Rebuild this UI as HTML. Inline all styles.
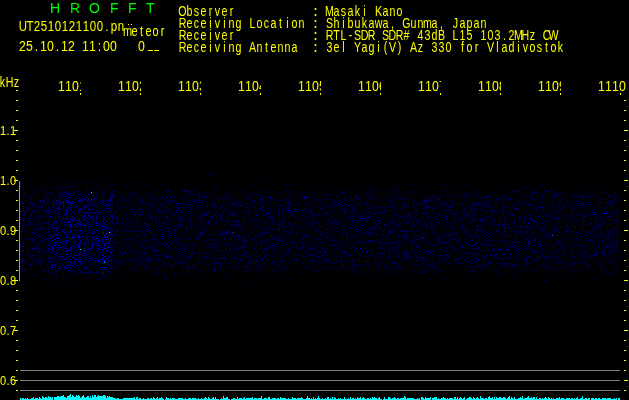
<!DOCTYPE html>
<html><head><meta charset="utf-8"><title>HROFFT</title>
<style>
html,body{margin:0;padding:0;background:#000;}
body{width:629px;height:400px;position:relative;overflow:hidden;}
text{white-space:pre;}
.b{font-weight:bold}
.h{font-family:"Liberation Sans",sans-serif;font-size:14px;fill:#0f0;text-anchor:start;}
</style></head><body>
<svg width="629" height="400" viewBox="0 0 629 400" shape-rendering="crispEdges" style="position:absolute;left:0;top:0">
<g transform="translate(0,.5)" fill="none" stroke-width="1">
<path stroke="#000016" d="M105 172h1M459 174h1M70 175h1m450 0h1M101 176h1m239 0h1m254 0h1M64 177h1m105 0h1m152 0h1m185 0h1M268 178h1m78 0h1m10 0h1m64 0h1m75 0h1M100 179h1m54 0h1m2 0h1m178 0h1m84 0h1m19 0h1m137 0h1M107 180h1m31 0h1m118 0h1m25 0h1m75 0h1m33 0h1m20 0h1m70 0h1m84 0h1M64 181h1m75 0h1m73 0h1m223 0h1M25 182h1m22 0h1m47 0h1m18 0h1m19 0h1m29 0h1m63 0h1m69 0h1m1 0h1m16 0h1m61 0h1m25 0h1m27 0h1m45 0h1m42 0h1m89 0h1M20 183h1m13 0h1m99 0h1m21 0h1m22 0h1m70 0h1m18 0h1m30 0h1m26 0h2m17 0h1m18 0h1M20 184h1m15 0h1m23 0h1m3 0h1m51 0h1m27 0h1m7 0h1m43 0h1m26 0h1m77 0h1m21 0h1m30 0h1m63 0h1m12 0h1m57 0h1m8 0h1m18 0h1m7 0h1m29 0h1m44 0h1M25 185h1m23 0h1m17 0h1m28 0h1m27 0h1m123 0h1m1 0h1m20 0h1m5 0h1m3 0h1m8 0h1m5 0h1m118 0h1m56 0h1m4 0h1m46 0h1m6 0h1m55 0h1M21 186h1m52 0h1m30 0h1m31 0h1m5 0h1m20 0h1m37 0h1m30 0h1m17 0h1m9 0h1m6 0h1m51 0h1m49 0h1m40 0h1m5 0h1m69 0h1m13 0h1m4 0h1m25 0h1m22 0h1m3 0h1m24 0h1m24 0h1M20 187h1m46 0h1m63 0h1m42 0h1m72 0h1m41 0h1m67 0h1m36 0h1m24 0h2m22 0h1m2 0h1m26 0h1m41 0h1m12 0h1M43 188h1m12 0h2m12 0h2m7 0h1m70 0h1m26 0h1m6 0h1m29 0h1m72 0h1m26 0h1m33 0h1m7 0h1m1 0h1m33 0h1m1 0h1m80 0h1m32 0h1m34 0h1m34 0h1m31 0h1M63 189h1m6 0h1m7 0h1m63 0h1m44 0h1m13 0h1m9 0h1m22 0h1m68 0h1m10 0h1m18 0h1m38 0h1m17 0h1m57 0h1m54 0h1m22 0h1m9 0h1m7 0h1m32 0h1m6 0h1m4 0h1m25 0h1M52 190h1m33 0h1m23 0h1m20 0h1m8 0h1m8 0h1m114 0h1m12 0h1m18 0h1m9 0h1m14 0h1m26 0h1m7 0h1m4 0h1m90 0h1m22 0h1m45 0h1m11 0h1m5 0h1m25 0h1m40 0h1M22 191h1m67 0h1m76 0h1m51 0h1m16 0h1m74 0h1m4 0h1m3 0h1m32 0h1m53 0h1m3 0h1m35 0h1m27 0h1m12 0h1m23 0h1m6 0h1m77 0h2M35 192h1m13 0h1m21 0h1m38 0h1m64 0h1m1 0h1m13 0h1m1 0h1m38 0h1m13 0h1m35 0h1m36 0h1m31 0h1m42 0h1m7 0h1m33 0h1m23 0h1m7 0h1m69 0h1m5 0h1m7 0h1m28 0h1m31 0h1M23 193h1m13 0h1m34 0h1m44 0h1m1 0h1m6 0h1m1 0h1m32 0h1m24 0h1m18 0h1m10 0h1m51 0h1m8 0h1m1 0h1m75 0h1m18 0h1m46 0h1m35 0h1m43 0h1m9 0h1m6 0h1m1 0h1m6 0h1m15 0h1m71 0h1M25 194h1m10 0h1m29 0h1m81 0h1m3 0h1m21 0h1m33 0h1m35 0h1m46 0h1m10 0h1m62 0h1m1 0h1m11 0h1m26 0h1m31 0h1m39 0h1m63 0h1m51 0h1m7 0h1m11 0h1M43 195h1m21 0h3m2 0h1m17 0h1m6 0h1m8 0h1m13 0h1m21 0h1m1 0h1m2 0h1m57 0h1m1 0h1m1 0h1m45 0h1m33 0h2m1 0h1m54 0h1m30 0h1m30 0h1m86 0h1m8 0h1m21 0h1m2 0h1m17 0h1m21 0h1m31 0h1M20 196h1m24 0h1m3 0h1m2 0h1m54 0h1m42 0h1m10 0h1m5 0h1m8 0h2m37 0h1m10 0h1m79 0h1m11 0h1m6 0h1m9 0h1m41 0h1m29 0h1m10 0h2m8 0h1m21 0h1m8 0h1m19 0h1m3 0h1m25 0h1m28 0h1m12 0h1m31 0h1m12 0h1m8 0h1M29 197h1m28 0h1m40 0h1m26 0h1m4 0h1m48 0h1m17 0h1m14 0h1m2 0h1m13 0h1m2 0h1m11 0h1m8 0h1m16 0h1m12 0h1m7 0h1m6 0h1m9 0h1m8 0h1m19 0h1m40 0h1m9 0h1m37 0h1m7 0h1m21 0h1m2 0h1m7 0h1m38 0h1m7 0h1m10 0h1m10 0h1m2 0h1m11 0h1m6 0h1m7 0h1m1 0h1m42 0h1M37 198h1m72 0h2m63 0h1m16 0h2m9 0h1m1 0h1m6 0h1m33 0h1m6 0h1m17 0h1m20 0h1m7 0h1m7 0h1m45 0h1m10 0h1m13 0h1m1 0h1m17 0h1m24 0h1m5 0h1m4 0h1m7 0h1m10 0h1m9 0h1m10 0h1m10 0h1m26 0h1m33 0h1m2 0h1m29 0h1m23 0h1M28 199h1m17 0h1m20 0h1m3 0h1m3 0h1m30 0h1m1 0h1m38 0h1m10 0h1m29 0h1m34 0h1m39 0h1m1 0h1m16 0h1m5 0h1m43 0h1m7 0h1m61 0h2m23 0h1m41 0h1m8 0h1m31 0h1m37 0h1m3 0h1m7 0h1M24 200h1m8 0h1m16 0h1m6 0h1m11 0h1m30 0h1m24 0h1m10 0h1m27 0h1m31 0h1m21 0h1m45 0h1m3 0h1m2 0h1m59 0h1m1 0h1m16 0h1m3 0h1m2 0h1m7 0h1m20 0h1m10 0h1m33 0h1m31 0h1m19 0h2m19 0h1m17 0h1m20 0h1m8 0h1m2 0h1m44 0h1m9 0h1m2 0h1M20 201h1m1 0h1m4 0h1m2 0h1m30 0h2m8 0h1m1 0h1m30 0h1m1 0h1m47 0h1m3 0h1m9 0h1m14 0h2m12 0h1m6 0h1m9 0h1m29 0h1m20 0h1m12 0h1m12 0h1m28 0h1m3 0h1m5 0h1m18 0h1m3 0h1m31 0h1m62 0h1m30 0h1m13 0h1m15 0h1m39 0h1m1 0h1m16 0h2m21 0h1m5 0h1M48 202h1m35 0h1m118 0h1m3 0h2m24 0h1m2 0h1m11 0h1m21 0h2m39 0h1m25 0h1m5 0h1m17 0h1m13 0h1m11 0h1m6 0h1m7 0h1m22 0h1m7 0h1m18 0h1m7 0h1m6 0h1m2 0h1m15 0h1m67 0h1M47 203h1m42 0h1m9 0h1m20 0h1m14 0h1m29 0h1m1 0h1m37 0h1m19 0h1m20 0h1m22 0h1m39 0h1m2 0h1m3 0h1m2 0h1m9 0h1m15 0h1m66 0h1m17 0h1m13 0h1m24 0h1m20 0h2m9 0h1m22 0h1m41 0h1m25 0h1m20 0h1M22 204h1m4 0h1m27 0h1m25 0h1m14 0h1m20 0h1m6 0h1m53 0h1m20 0h1m52 0h1m40 0h1m18 0h1m1 0h1m9 0h1m9 0h1m14 0h1m39 0h1m21 0h1m14 0h1m13 0h1m8 0h1m13 0h1m21 0h1m3 0h1m19 0h1m3 0h1m8 0h1m10 0h1m10 0h1m25 0h1m34 0h1M26 205h1m28 0h1m93 0h1m15 0h1m11 0h1m4 0h1m38 0h1m8 0h1m31 0h1m2 0h1m18 0h1m20 0h1m11 0h1m9 0h1m36 0h1m14 0h1m1 0h1m15 0h1m31 0h1m118 0h1m1 0h1m3 0h1m8 0h1m25 0h1m19 0h1M48 206h1m10 0h1m52 0h1m33 0h1m4 0h1m1 0h1m6 0h1m4 0h1m29 0h1m5 0h1m6 0h1m54 0h1m13 0h1m39 0h1m12 0h1m7 0h1m25 0h2m12 0h1m23 0h1m2 0h1m30 0h1m50 0h1m2 0h1m15 0h1m5 0h1m1 0h1m6 0h1m6 0h1m2 0h1m3 0h1m47 0h1M33 207h1m2 0h1m28 0h1m42 0h1m14 0h1m38 0h1m14 0h1m43 0h1m5 0h1m1 0h1m4 0h2m8 0h1m17 0h1m33 0h1m1 0h1m4 0h1m19 0h1m14 0h1m2 0h2m13 0h1m1 0h1m25 0h1m17 0h1m49 0h1m13 0h1m6 0h1m40 0h1m12 0h1m12 0h1m16 0h1m38 0h1m12 0h1M32 208h1m21 0h1m7 0h1m53 0h1m33 0h1m25 0h1m7 0h1m25 0h1m1 0h1m29 0h1m12 0h1m54 0h1m20 0h1m4 0h1m8 0h1m5 0h1m15 0h1m23 0h1m29 0h1m24 0h1m13 0h2m13 0h1m6 0h1m5 0h1m3 0h1m3 0h1m31 0h1m3 0h1m9 0h1m5 0h1m9 0h1m36 0h1m8 0h1m10 0h1M43 209h1m13 0h1m25 0h1m31 0h1m11 0h1m63 0h1m7 0h1m15 0h1m20 0h1m2 0h1m1 0h1m51 0h1m2 0h1m3 0h1m6 0h1m60 0h1m50 0h1m38 0h1m4 0h1m29 0h1m4 0h1m1 0h1m5 0h1m3 0h1m19 0h1m24 0h1m6 0h1m7 0h1m25 0h1m11 0h1M24 210h1m3 0h1m32 0h1m15 0h1m1 0h1m3 0h1m1 0h1m20 0h1m11 0h1m62 0h1m26 0h1m16 0h2m14 0h1m16 0h1m54 0h1m9 0h1m1 0h1m1 0h1m13 0h1m52 0h1m41 0h1m1 0h1m18 0h1m7 0h1m8 0h1m11 0h1m32 0h1m4 0h1m5 0h1m9 0h1m33 0h1m19 0h1M38 211h1m30 0h1m3 0h1m10 0h1m26 0h1m40 0h2m102 0h1m8 0h1m26 0h1m9 0h1m10 0h1m4 0h1m11 0h1m11 0h1m7 0h1m6 0h1m3 0h1m31 0h1m34 0h1m17 0h1m95 0h1m10 0h1m40 0h1m10 0h1m9 0h1M21 212h2m12 0h1m64 0h1m29 0h2m15 0h2m3 0h1m17 0h1m2 0h1m15 0h1m10 0h1m26 0h2m21 0h1m1 0h1m11 0h1m8 0h1m1 0h1m4 0h1m19 0h1m36 0h1m11 0h1m50 0h1m2 0h1m15 0h1m10 0h1m14 0h1m48 0h1m8 0h1m21 0h1m9 0h1m9 0h1m5 0h1m15 0h1m3 0h1m32 0h1m3 0h1m6 0h1M33 213h1m16 0h1m20 0h1m5 0h1m23 0h1m9 0h1m5 0h1m3 0h1m12 0h1m3 0h1m16 0h1m10 0h1m23 0h1m2 0h1m3 0h1m12 0h1m6 0h1m3 0h1m2 0h1m5 0h1m21 0h1m4 0h1m24 0h1m24 0h1m24 0h1m5 0h1m15 0h1m16 0h1m11 0h1m11 0h1m2 0h1m33 0h1m3 0h1m23 0h1m3 0h1m3 0h1m31 0h1m7 0h1m5 0h1m9 0h1m6 0h1m8 0h1m17 0h2m11 0h1m15 0h1m2 0h1m23 0h1M51 214h1m23 0h1m60 0h1m15 0h1m15 0h1m20 0h1m10 0h1m20 0h1m9 0h1m21 0h1m8 0h1m2 0h1m18 0h1m5 0h1m19 0h1m13 0h1m29 0h1m32 0h1m12 0h1m32 0h1m6 0h1m27 0h1m14 0h1m9 0h1m1 0h1m34 0h1m20 0h1m27 0h1m10 0h1m6 0h1M26 215h1m15 0h1m8 0h1m1 0h1m67 0h1m22 0h1m5 0h1m6 0h1m12 0h1m12 0h1m7 0h1m2 0h1m12 0h1m24 0h1m5 0h1m3 0h1m39 0h1m61 0h1m10 0h1m2 0h1m21 0h1m18 0h1m1 0h1m3 0h1m8 0h1m56 0h1m41 0h1m11 0h1m14 0h1m13 0h1m23 0h1m6 0h1m3 0h1m5 0h1m2 0h1M39 216h1m23 0h1m59 0h1m16 0h1m35 0h1m4 0h1m5 0h1m14 0h2m28 0h1m2 0h1m13 0h1m1 0h1m12 0h1m22 0h1m2 0h1m2 0h2m2 0h1m23 0h1m62 0h1m1 0h1m3 0h1m23 0h2m2 0h1m12 0h1m2 0h1m7 0h1m10 0h1m8 0h1m18 0h1m10 0h1m7 0h1m29 0h1m21 0h1m47 0h1M32 217h1m16 0h1m34 0h1m1 0h1m17 0h1m11 0h2m51 0h2m81 0h1m32 0h1m6 0h1m7 0h1m10 0h1m3 0h1m18 0h1m30 0h1m10 0h1m7 0h1m7 0h1m9 0h1m23 0h2m8 0h2m8 0h1m28 0h1m19 0h1m6 0h2m14 0h1m2 0h2m31 0h1m35 0h1m4 0h1m12 0h1M34 218h1m40 0h1m24 0h1m30 0h1m4 0h1m48 0h1m8 0h1m2 0h1m76 0h1m1 0h1m4 0h1m11 0h1m2 0h2m16 0h1m9 0h1m23 0h1m16 0h1m5 0h1m10 0h1m1 0h1m25 0h1m4 0h1m22 0h1m28 0h2m1 0h1m9 0h1m15 0h1M21 219h1m27 0h1m12 0h1m69 0h1m4 0h1m4 0h1m59 0h1m37 0h1m60 0h1m21 0h1m36 0h1m4 0h1m8 0h1m2 0h1m4 0h1m60 0h1m1 0h1m33 0h1m33 0h1m51 0h1m41 0h1M22 220h1m3 0h1m24 0h1m22 0h1m28 0h1m57 0h1m1 0h1m15 0h1m2 0h1m11 0h1m15 0h1m15 0h1m8 0h1m26 0h1m38 0h2m74 0h1m41 0h1m8 0h1m22 0h1m29 0h1m20 0h1m9 0h1m1 0h1m6 0h1m14 0h2m2 0h1m1 0h1m44 0h1m1 0h1m2 0h1m8 0h1M74 221h1m41 0h2m14 0h1m3 0h1m7 0h1m33 0h1m3 0h1m6 0h1m22 0h1m12 0h1m1 0h1m39 0h1m2 0h1m9 0h1m62 0h1m7 0h1m22 0h1m64 0h1m5 0h1m18 0h1m1 0h1m18 0h1m14 0h1m4 0h1m14 0h1m32 0h3m3 0h2m33 0h1m19 0h1M24 222h1m9 0h1m27 0h1m11 0h1m10 0h1m34 0h1m3 0h1m40 0h1m12 0h1m38 0h2m3 0h1m3 0h1m2 0h1m7 0h1m22 0h1m43 0h1m33 0h1m8 0h1m6 0h1m21 0h1m8 0h1m11 0h1m25 0h1m5 0h1m4 0h1m14 0h1m6 0h1m29 0h1m6 0h1m12 0h1m13 0h1m5 0h1m13 0h1m14 0h1m47 0h1m4 0h1M21 223h1m42 0h1m6 0h1m41 0h1m20 0h1m15 0h1m41 0h1m2 0h1m54 0h1m5 0h1m1 0h1m19 0h1m25 0h1m4 0h1m9 0h1m3 0h1m13 0h1m23 0h1m7 0h1m2 0h1m5 0h1m8 0h1m15 0h1m17 0h1m9 0h1m1 0h1m42 0h1m35 0h1m23 0h1m14 0h1m16 0h1m28 0h1M27 224h1m6 0h1m2 0h1m3 0h1m19 0h1m15 0h1m18 0h2m11 0h1m12 0h1m4 0h1m65 0h1m92 0h1m4 0h2m157 0h1m1 0h2m5 0h2m5 0h1m30 0h2m26 0h1m2 0h1m24 0h2m1 0h1m27 0h1M23 225h1m97 0h1m1 0h1m21 0h1m31 0h1m17 0h1m3 0h1m22 0h1m36 0h1m31 0h1m26 0h1m12 0h1m4 0h1m4 0h1m84 0h1m48 0h1m13 0h1m5 0h1m55 0h1m6 0h1m33 0h1m15 0h1M25 226h1m2 0h1m29 0h1m49 0h1m15 0h1m9 0h1m3 0h1m19 0h2m6 0h1m8 0h1m14 0h1m9 0h1m14 0h1m2 0h1m12 0h1m21 0h1m19 0h1m3 0h2m15 0h1m13 0h1m53 0h1m14 0h1m2 0h1m14 0h1m10 0h1m2 0h2m17 0h1m32 0h1m1 0h1m43 0h1m8 0h1m3 0h1m12 0h1m11 0h1m37 0h1m16 0h1m13 0h1M66 227h1m35 0h1m50 0h2m4 0h1m11 0h1m3 0h1m8 0h1m22 0h1m19 0h1m51 0h1m11 0h1m12 0h1m36 0h1m4 0h1m6 0h1m14 0h1m5 0h1m26 0h1m61 0h1m68 0h1m15 0h1m13 0h1m5 0h2m6 0h1m31 0h1m5 0h1m2 0h1M27 228h1m13 0h1m7 0h1m101 0h1m23 0h1m2 0h1m11 0h1m11 0h1m25 0h1m16 0h1m25 0h1m6 0h1m5 0h1m17 0h1m3 0h1m15 0h1m29 0h1m19 0h1m50 0h1m31 0h1m42 0h1m71 0h1m11 0h1m4 0h1m24 0h1m4 0h1M24 229h1m14 0h2m9 0h1m23 0h1m24 0h1m11 0h1m13 0h1m7 0h1m4 0h1m30 0h2m1 0h1m13 0h1m45 0h1m2 0h1m9 0h2m18 0h1m1 0h1m7 0h1m19 0h1m18 0h1m8 0h1m37 0h1m1 0h1m18 0h1m5 0h1m25 0h1m16 0h1m15 0h1m81 0h1m20 0h1m8 0h1m30 0h1m16 0h1m1 0h1M28 230h1m31 0h2m40 0h1m12 0h1m7 0h1m41 0h1m22 0h1m5 0h1m3 0h1m2 0h1m24 0h2m11 0h2m39 0h1m4 0h1m20 0h1m11 0h1m20 0h1m24 0h1m19 0h1m19 0h1m33 0h1m34 0h1m22 0h1m1 0h1m47 0h1m28 0h1M33 231h1m7 0h1m12 0h1m36 0h1m20 0h1m88 0h1m28 0h1m2 0h1m30 0h1m9 0h1m10 0h1m17 0h1m13 0h2m13 0h2m39 0h1m6 0h1m5 0h1m8 0h3m12 0h1m33 0h1m52 0h1m11 0h1m39 0h1m10 0h2m1 0h1m4 0h1m41 0h1M49 232h1m16 0h1m93 0h1m9 0h1m1 0h1m4 0h1m11 0h1m11 0h1m1 0h1m7 0h1m18 0h1m49 0h1m21 0h1m11 0h1m14 0h1m2 0h1m12 0h1m19 0h1m27 0h1m4 0h3m1 0h1m17 0h1m1 0h1m1 0h1m9 0h1m12 0h1m10 0h1m1 0h1m41 0h1m8 0h1m23 0h2m3 0h1m8 0h1m51 0h1M40 233h2m2 0h1m20 0h1m13 0h1m3 0h1m42 0h1m13 0h1m6 0h1m22 0h2m10 0h1m5 0h1m4 0h1m18 0h1m16 0h1m17 0h1m5 0h1m2 0h1m23 0h1m14 0h1m3 0h1m3 0h1m12 0h1m34 0h1m14 0h1m12 0h1m24 0h1m15 0h1m31 0h1m4 0h1m5 0h1m21 0h1m30 0h1m3 0h1m5 0h1m32 0h1m13 0h1m2 0h1m13 0h2m3 0h1M30 234h1m35 0h1m28 0h1m1 0h1m14 0h2m17 0h1m2 0h1m5 0h1m11 0h1m6 0h1m20 0h1m21 0h1m21 0h1m8 0h1m20 0h1m1 0h1m7 0h1m38 0h1m30 0h1m3 0h1m9 0h1m23 0h2m17 0h1m1 0h1m17 0h1m13 0h1m20 0h1m3 0h1m26 0h1m20 0h1m10 0h1m12 0h1m5 0h1m2 0h1m25 0h1m49 0h1M29 235h1m91 0h1m30 0h1m19 0h1m4 0h1m11 0h2m8 0h1m13 0h1m23 0h1m13 0h1m10 0h1m5 0h1m34 0h1m4 0h1m2 0h1m1 0h1m20 0h1m9 0h1m13 0h1m14 0h1m61 0h1m5 0h1m39 0h1m4 0h1m5 0h2m9 0h1m5 0h1m14 0h1m11 0h2m40 0h1m11 0h2m3 0h1m4 0h1m13 0h1M57 236h1m16 0h1m22 0h1m2 0h1m8 0h1m11 0h1m8 0h1m18 0h1m19 0h1m6 0h1m8 0h1m22 0h1m30 0h1m23 0h1m69 0h1m13 0h1m3 0h1m11 0h1m8 0h1m33 0h1m12 0h1m4 0h1m9 0h1m17 0h1m6 0h1m13 0h1m1 0h1m12 0h1m9 0h1m31 0h1m19 0h1m9 0h1m39 0h1m14 0h1M36 237h1m27 0h1m3 0h1m34 0h1m27 0h1m3 0h1m20 0h1m10 0h2m48 0h1m6 0h1m27 0h1m12 0h1m14 0h1m47 0h1m43 0h1m3 0h1m7 0h1m5 0h1m57 0h1m8 0h1m36 0h1m16 0h1m33 0h1m8 0h1m28 0h1m23 0h1M66 238h1m32 0h1m4 0h1m28 0h1m2 0h1m1 0h1m3 0h1m8 0h2m22 0h1m3 0h1m4 0h1m7 0h1m17 0h1m2 0h1m20 0h1m88 0h1m7 0h1m33 0h1m1 0h2m4 0h1m5 0h1m9 0h1m28 0h1m5 0h1m9 0h1m5 0h1m14 0h1m13 0h1m24 0h2m7 0h1m17 0h1m24 0h1m17 0h1m27 0h1M27 239h1m24 0h1m68 0h2m13 0h1m1 0h1m8 0h1m2 0h1m30 0h1m6 0h1m4 0h1m41 0h1m1 0h1m18 0h1m7 0h1m19 0h1m49 0h1m43 0h1m25 0h1m56 0h1m16 0h1m58 0h1m49 0h1M56 240h1m4 0h1m24 0h1m30 0h2m45 0h1m2 0h1m12 0h1m7 0h1m4 0h1m45 0h1m36 0h2m6 0h1m21 0h1m3 0h1m6 0h1m6 0h1m10 0h1m5 0h1m3 0h1m45 0h1m9 0h1m21 0h1m12 0h1m1 0h1m1 0h1m19 0h1m5 0h1m3 0h1m17 0h1m9 0h1m6 0h1m16 0h1m18 0h1m3 0h1m20 0h1m3 0h1m9 0h1m8 0h1m1 0h2m6 0h1m11 0h1M72 241h1m3 0h1m37 0h1m4 0h1m17 0h1m16 0h1m32 0h1m9 0h2m14 0h1m13 0h1m10 0h1m14 0h1m5 0h1m21 0h1m20 0h1m12 0h1m8 0h1m11 0h1m8 0h1m11 0h1m13 0h1m20 0h1m21 0h1m31 0h1m2 0h1m1 0h1m97 0h1m22 0h1m10 0h1m7 0h1m17 0h1M32 242h1m14 0h1m34 0h1m10 0h1m1 0h1m6 0h1m13 0h1m2 0h1m20 0h1m13 0h1m2 0h1m7 0h1m11 0h1m15 0h1m2 0h1m5 0h1m50 0h1m23 0h1m22 0h1m8 0h1m13 0h1m22 0h1m15 0h1m7 0h1m3 0h1m12 0h1m6 0h1m42 0h1m12 0h1m24 0h1m24 0h1m6 0h1m1 0h1m18 0h1m38 0h1m4 0h1M34 243h1m7 0h1m69 0h1m39 0h1m14 0h1m7 0h1m26 0h1m40 0h1m40 0h1m7 0h1m47 0h1m53 0h1m23 0h1m35 0h1m1 0h1m30 0h1m8 0h1m4 0h1m5 0h1m1 0h1m5 0h1m14 0h1m44 0h1m11 0h1M45 244h1m26 0h1m9 0h1m14 0h1m12 0h1m18 0h1m16 0h1m2 0h1m20 0h1m6 0h1m19 0h1m1 0h1m19 0h1m39 0h1m38 0h1m15 0h1m20 0h1m41 0h1m5 0h1m27 0h1m13 0h1m14 0h2m7 0h1m7 0h1m1 0h1m22 0h2m8 0h1m3 0h2m16 0h1m2 0h1m9 0h1m16 0h1M24 245h1m22 0h1m15 0h1m50 0h1m7 0h1m58 0h1m21 0h1m29 0h1m11 0h1m24 0h1m64 0h1m5 0h1m17 0h1m3 0h1m20 0h1m24 0h1m4 0h1m14 0h1m20 0h2m16 0h1m21 0h1m8 0h1m1 0h1m6 0h1m27 0h1m51 0h1m3 0h1m14 0h1M32 246h1m15 0h1m53 0h1m30 0h1m4 0h2m12 0h1m4 0h1m17 0h1m25 0h1m30 0h1m18 0h1m26 0h1m11 0h1m3 0h1m16 0h1m4 0h1m8 0h1m10 0h1m34 0h1m13 0h1m5 0h1m20 0h1m8 0h1m11 0h1m1 0h1m9 0h1m39 0h1m2 0h1m43 0h1m21 0h1m22 0h1m7 0h1m23 0h1m8 0h1M35 247h1m22 0h1m38 0h1m1 0h1m6 0h1m13 0h1m19 0h1m5 0h1m20 0h1m33 0h1m5 0h1m11 0h1m63 0h1m23 0h1m7 0h1m46 0h1m6 0h1m1 0h1m65 0h1m2 0h1m7 0h1m3 0h1m1 0h1m51 0h1m2 0h1m33 0h1m26 0h1m7 0h1m28 0h1m11 0h1M41 248h1m3 0h1m23 0h1m16 0h1m44 0h1m19 0h1m7 0h1m36 0h1m4 0h2m1 0h1m30 0h1m21 0h2m6 0h1m20 0h1m2 0h1m4 0h1m15 0h1m23 0h1m36 0h1m2 0h1m34 0h1m14 0h1m8 0h1m9 0h1m33 0h1m7 0h1m7 0h1m41 0h1m4 0h1m11 0h2m7 0h1m8 0h1M22 249h1m18 0h1m14 0h1m30 0h1m33 0h1m5 0h1m15 0h1m18 0h1m24 0h1m9 0h1m45 0h1m36 0h1m2 0h1m30 0h1m29 0h1m5 0h1m18 0h1m15 0h1m10 0h1m34 0h1m30 0h1m31 0h2m8 0h1m14 0h1m10 0h1m34 0h1m6 0h2m11 0h1m10 0h1m8 0h1m2 0h1M54 250h1m5 0h1m36 0h1m2 0h1m12 0h1m55 0h1m8 0h1m48 0h1m36 0h2m18 0h1m1 0h1m2 0h1m16 0h2m28 0h1m43 0h1m1 0h1m1 0h1m31 0h1m9 0h1m26 0h1m4 0h1m3 0h1m36 0h1m20 0h1m17 0h1m1 0h1m2 0h1m28 0h1m4 0h2m20 0h1m3 0h1m6 0h1M20 251h1m19 0h1m76 0h1m5 0h1m30 0h1m2 0h1m9 0h1m8 0h1m28 0h1m6 0h1m20 0h1m10 0h1m3 0h1m17 0h1m9 0h1m8 0h1m5 0h1m5 0h1m12 0h1m7 0h2m1 0h2m8 0h1m35 0h1m7 0h1m5 0h1m13 0h1m2 0h1m30 0h1m32 0h1m20 0h1m10 0h1m35 0h2m3 0h1m27 0h1m41 0h1m5 0h1m1 0h1M40 252h1m43 0h1m55 0h1m12 0h2m11 0h1m38 0h2m1 0h1m13 0h1m21 0h1m18 0h1m1 0h1m25 0h1m19 0h1m21 0h1m47 0h1m28 0h1m14 0h1m2 0h1m7 0h1m8 0h1m12 0h1m23 0h1m41 0h2m3 0h1m5 0h1m55 0h1M22 253h1m40 0h1m25 0h1m26 0h1m60 0h1m12 0h1m24 0h1m15 0h1m15 0h1m7 0h1m52 0h1m3 0h1m28 0h1m17 0h1m12 0h1m28 0h1m54 0h1m2 0h1m6 0h1m37 0h1m3 0h1m32 0h1m5 0h1m6 0h1m2 0h1m7 0h1M29 254h1m2 0h1m47 0h2m5 0h1m12 0h1m6 0h1m4 0h1m13 0h1m14 0h1m29 0h1m3 0h1m1 0h1m5 0h1m2 0h1m17 0h1m2 0h2m40 0h1m9 0h1m18 0h1m19 0h1m7 0h1m15 0h1m12 0h1m32 0h1m72 0h1m51 0h1m4 0h1m4 0h1m43 0h1m1 0h1m5 0h1m1 0h1m18 0h1m8 0h1m14 0h1m8 0h1m4 0h1M41 255h1m26 0h1m29 0h1m2 0h1m19 0h1m11 0h1m4 0h2m12 0h1m4 0h1m1 0h1m32 0h1m7 0h2m20 0h1m53 0h1m6 0h1m9 0h1m17 0h1m16 0h1m40 0h1m4 0h1m6 0h1m3 0h1m1 0h1m6 0h1m2 0h1m19 0h1m26 0h1m6 0h1m4 0h1m9 0h1m17 0h1m8 0h1m6 0h1m3 0h1m19 0h1m8 0h1m20 0h1m11 0h1m37 0h1m4 0h1m3 0h1M21 256h1m10 0h1m3 0h1m20 0h1m3 0h1m17 0h1m2 0h1m31 0h2m3 0h1m10 0h1m13 0h1m4 0h1m33 0h1m13 0h1m58 0h1m25 0h1m6 0h1m21 0h1m7 0h1m13 0h1m10 0h1m55 0h1m18 0h1m4 0h1m2 0h1m4 0h1m1 0h1m80 0h2m23 0h1m6 0h1m40 0h1m1 0h1M66 257h1m6 0h1m79 0h1m1 0h1m35 0h1m2 0h1m1 0h1m43 0h1m13 0h1m63 0h1m4 0h1m10 0h1m57 0h1m15 0h1m5 0h1m35 0h1m1 0h1m11 0h1m29 0h1m5 0h1m3 0h1m17 0h1m12 0h1m22 0h1m9 0h1m10 0h1M35 258h1m5 0h1m12 0h1m61 0h1m26 0h1m6 0h1m14 0h1m32 0h2m27 0h1m20 0h1m2 0h1m1 0h1m2 0h1m36 0h1m6 0h1m4 0h1m17 0h1m28 0h1m1 0h1m13 0h1m40 0h1m45 0h1m35 0h1m6 0h1m6 0h1m2 0h1m34 0h1m8 0h1m4 0h1m24 0h1m7 0h1m1 0h1M62 259h1m12 0h1m18 0h1m22 0h1m1 0h1m4 0h1m38 0h1m1 0h1m14 0h2m13 0h1m3 0h1m6 0h1m95 0h1m5 0h1m33 0h2m5 0h1m62 0h1m15 0h1m1 0h1m17 0h1m45 0h1m24 0h1m55 0h1m3 0h1m23 0h1m2 0h1m9 0h1M27 260h1m24 0h1m6 0h1m22 0h1m14 0h1m38 0h1m35 0h1m27 0h1m21 0h1m26 0h1m28 0h1m11 0h1m54 0h1m25 0h1m21 0h1m3 0h1m36 0h1m5 0h1m24 0h1m11 0h1m16 0h1m10 0h1m18 0h1m5 0h1m13 0h1m9 0h1m4 0h1m15 0h1m12 0h1m8 0h1M32 261h1m30 0h1m6 0h1m13 0h1m54 0h1m8 0h1m3 0h2m1 0h1m4 0h1m23 0h1m11 0h1m9 0h1m36 0h1m2 0h1m3 0h1m46 0h1m12 0h1m17 0h1m21 0h1m12 0h1m6 0h1m6 0h1m5 0h1m8 0h1m8 0h1m4 0h1m17 0h1m3 0h1m14 0h1m21 0h1m31 0h1m34 0h1m18 0h1m20 0h2m1 0h2m33 0h1M40 262h1m14 0h1m1 0h1m8 0h1m11 0h1m59 0h1m24 0h1m49 0h1m14 0h1m19 0h1m41 0h3m37 0h1m15 0h1m9 0h1m12 0h1m32 0h1m6 0h1m8 0h1m4 0h1m6 0h1m7 0h1m2 0h1m14 0h1m9 0h1m2 0h1m2 0h2m5 0h1m30 0h1M49 263h1m17 0h1m50 0h1m28 0h1m10 0h1m35 0h2m1 0h1m10 0h1m50 0h1m18 0h1m11 0h1m56 0h1m5 0h2m26 0h1m41 0h1m2 0h1m7 0h1m1 0h1m8 0h1m49 0h1m43 0h1m4 0h1m60 0h1M23 264h1m29 0h1m11 0h1m44 0h1m6 0h1m3 0h1m14 0h1m31 0h1m5 0h1m25 0h1m3 0h1m8 0h1m36 0h1m16 0h1m79 0h1m11 0h1m6 0h1m12 0h2m53 0h1m6 0h1m1 0h1m20 0h1m46 0h2m24 0h2m6 0h1m20 0h1m17 0h1m9 0h1M40 265h1m25 0h1m2 0h1m22 0h1m3 0h1m17 0h1m8 0h1m22 0h1m30 0h1m41 0h1m52 0h1m24 0h2m40 0h1m51 0h1m1 0h1m5 0h1m1 0h1m7 0h1m61 0h1m19 0h1m19 0h1m4 0h1m7 0h2m13 0h1m1 0h1m4 0h1m15 0h1m1 0h1m2 0h1m27 0h1m6 0h1M55 266h1m34 0h1m3 0h1m8 0h1m2 0h1m10 0h1m20 0h2m22 0h1m19 0h1m1 0h1m69 0h1m15 0h2m36 0h1m11 0h1m16 0h1m2 0h2m2 0h1m6 0h1m5 0h1m68 0h1m3 0h1m10 0h1m31 0h1m18 0h1m6 0h1m5 0h2m2 0h1m5 0h1m22 0h1m31 0h1m10 0h1m22 0h1m9 0h1M43 267h1m34 0h1m18 0h1m4 0h1m14 0h1m16 0h1m31 0h1m31 0h1m24 0h1m5 0h1m7 0h1m15 0h1m52 0h1m42 0h1m9 0h1m2 0h1m22 0h1m3 0h1m24 0h1m8 0h1m52 0h1m9 0h1m29 0h1m22 0h1m29 0h1m16 0h1m26 0h1M31 268h1m4 0h1m98 0h1m24 0h1m83 0h1m2 0h1m2 0h1m10 0h1m3 0h1m11 0h1m26 0h1m52 0h1m21 0h1m7 0h1m12 0h2m10 0h2m17 0h1m2 0h1m48 0h1m1 0h1m20 0h1m37 0h1m18 0h1m1 0h1m24 0h1M22 269h1m3 0h1m5 0h1m12 0h1m39 0h1m5 0h1m40 0h1m20 0h1m11 0h1m26 0h1m44 0h1m42 0h1m29 0h1m34 0h2m3 0h1m4 0h1m13 0h1m2 0h1m14 0h1m8 0h1m15 0h1m34 0h1m4 0h1m22 0h1m39 0h1m50 0h1m3 0h1m12 0h1M24 270h1m49 0h1m19 0h1m6 0h1m10 0h1m6 0h1m20 0h1m29 0h1m58 0h1m31 0h1m31 0h1m33 0h1m10 0h1m8 0h1m36 0h1m1 0h1m23 0h1m30 0h1m18 0h1m28 0h1m30 0h1m3 0h1m11 0h1m32 0h1m20 0h1m27 0h1M36 271h1m18 0h1m7 0h1m2 0h1m39 0h1m3 0h1m9 0h1m9 0h1m7 0h1m77 0h1m50 0h1m15 0h1m8 0h1m9 0h1m37 0h1m108 0h1m17 0h1m24 0h2m21 0h1m54 0h1m1 0h1m9 0h1m23 0h1M28 272h1m9 0h1m15 0h1m24 0h1m145 0h1m5 0h1m24 0h1m44 0h1m6 0h1m8 0h1m18 0h1m19 0h1m34 0h1m25 0h1m54 0h1m17 0h1m10 0h2m109 0h2M57 273h1m5 0h1m23 0h1m15 0h1m15 0h2m35 0h1m5 0h1m10 0h1m2 0h1m2 0h1m21 0h1m19 0h1m56 0h1m70 0h1m39 0h1m14 0h1m8 0h1m18 0h1m9 0h1m31 0h1m19 0h1m24 0h1m13 0h2m2 0h1m74 0h1M20 274h1m53 0h1m27 0h1m50 0h1m9 0h1m3 0h1m1 0h1m1 0h1m11 0h1m41 0h1m9 0h1m12 0h1m3 0h1m45 0h1m26 0h1m20 0h1m42 0h1m28 0h1m48 0h1m109 0h1m2 0h1M47 275h1m145 0h1m4 0h1m14 0h1m52 0h2m3 0h1m29 0h1m3 0h1m9 0h1m10 0h1m33 0h1m169 0h1M30 276h1m31 0h1m28 0h1m142 0h1m11 0h1m14 0h1m16 0h1m26 0h1m28 0h1m24 0h1m5 0h1m81 0h1m73 0h1m60 0h1M34 277h1m139 0h1m26 0h1m3 0h1m6 0h1m16 0h1m1 0h1m56 0h1m22 0h1m44 0h1m21 0h1m4 0h1m91 0h1m31 0h1m42 0h1m61 0h1M35 278h1m199 0h1m28 0h1m27 0h1m15 0h1m33 0h1m80 0h1m13 0h1m1 0h1m6 0h2m28 0h1m26 0h1m24 0h1m55 0h1m9 0h1M31 279h1m1 0h1m22 0h1m53 0h1m17 0h1m46 0h1m22 0h1m6 0h1m4 0h1m63 0h1m37 0h1m34 0h1m35 0h1m132 0h1m32 0h1m12 0h1m46 0h1M27 280h1m44 0h1m49 0h1m62 0h1m44 0h1m17 0h1m15 0h1m89 0h1m19 0h1m15 0h1m45 0h1m25 0h1m38 0h1m15 0h1m56 0h1M45 281h1m72 0h1m9 0h1m51 0h1m46 0h1m56 0h1m11 0h1m114 0h1m22 0h1m19 0h1m61 0h1m52 0h1m43 0h1M184 282h1m51 0h1m133 0h1m170 0h1M60 283h1m467 0h1M34 284h1m42 0h1m16 0h1m192 0h1m126 0h1m36 0h1M97 285h1m7 0h1m57 0h1m62 0h1m285 0h1M123 286h1m47 0h1m381 0h1M107 290h1"/>
<path stroke="#000026" d="M91 175h1m3 0h1M590 176h1M78 177h1m12 0h1M96 178h1m115 0h1m254 0h1m32 0h1m34 0h1m13 0h1M30 179h1m19 0h1m233 0h1m303 0h1M20 180h1m53 0h1m338 0h1m8 0h1m87 0h1M94 181h1m2 0h1m56 0h1m10 0h1m26 0h1m6 0h1m91 0h1m176 0h1m72 0h1M30 182h2m32 0h1m13 0h1m23 0h1m25 0h1m8 0h1m39 0h1m46 0h1m62 0h1m19 0h1m18 0h1m207 0h1m58 0h1M54 183h1m13 0h1m117 0h1m93 0h1m6 0h1m2 0h1m201 0h1m32 0h1m74 0h1M44 184h1m20 0h1m70 0h1m89 0h1m23 0h1m41 0h1m6 0h1m94 0h1m7 0h1m40 0h1m43 0h1m14 0h1m13 0h1m31 0h1m43 0h1M27 185h1m6 0h1m6 0h1m45 0h1m6 0h1m121 0h1m6 0h1m9 0h1m19 0h1m9 0h1m66 0h1m29 0h1m147 0h1m11 0h1m2 0h1m21 0h1m67 0h1M23 186h1m19 0h1m10 0h2m3 0h1m73 0h1m59 0h1m28 0h1m63 0h1m37 0h1m38 0h1m29 0h1m5 0h1m46 0h1m15 0h1m39 0h1m55 0h1m29 0h1m24 0h1m2 0h1M26 187h1m37 0h1m6 0h1m1 0h1m15 0h1m73 0h1m43 0h1m78 0h1m23 0h1m28 0h1m69 0h1m6 0h1m58 0h1m46 0h1m13 0h1m38 0h1m31 0h1M32 188h1m66 0h1m4 0h1m80 0h1m13 0h1m6 0h1m81 0h1m28 0h1m11 0h1m22 0h1m6 0h1m5 0h1m27 0h1m15 0h1m19 0h1m74 0h1m21 0h1m10 0h1m7 0h1m40 0h1m22 0h1M33 189h1m16 0h1m74 0h1m8 0h1m19 0h1m27 0h1m6 0h1m55 0h1m117 0h1m34 0h1m6 0h1m12 0h1m22 0h1m28 0h1m14 0h1m11 0h1m34 0h1m40 0h1M60 190h1m17 0h1m39 0h1m18 0h1m12 0h1m8 0h1m18 0h1m16 0h1m21 0h1m18 0h1m5 0h1m24 0h1m13 0h1m30 0h1m4 0h1m15 0h1m17 0h1m14 0h1m1 0h1m10 0h1m32 0h1m9 0h1m6 0h2m27 0h1m2 0h1m16 0h1m53 0h1m38 0h1m4 0h1m24 0h1M25 191h1m61 0h1m26 0h1m2 0h1m1 0h1m17 0h1m11 0h1m5 0h2m6 0h1m21 0h1m15 0h1m19 0h1m20 0h1m127 0h1m3 0h1m50 0h1m20 0h1m18 0h1m4 0h1m3 0h1m60 0h1m3 0h1m2 0h2m18 0h1m3 0h1m6 0h1M109 192h1m15 0h1m20 0h1m84 0h1m11 0h1m1 0h1m23 0h1m24 0h1m13 0h1m3 0h1m10 0h1m64 0h1m30 0h1m12 0h1m4 0h1m105 0h1m2 0h1M21 193h1m9 0h2m14 0h1m29 0h1m18 0h1m30 0h1m21 0h1m49 0h2m7 0h1m2 0h1m9 0h1m8 0h1m44 0h1m37 0h1m1 0h1m5 0h1m7 0h1m48 0h1m2 0h1m6 0h1m16 0h1m7 0h1m4 0h1m35 0h1m32 0h1m15 0h1m6 0h1m43 0h1m29 0h1m14 0h1m14 0h1M26 194h1m43 0h1m29 0h1m9 0h1m17 0h1m5 0h1m16 0h1m16 0h1m20 0h1m20 0h1m22 0h1m22 0h1m9 0h1m27 0h1m17 0h1m13 0h1m11 0h1m6 0h1m11 0h1m6 0h1m1 0h1m16 0h1m1 0h1m17 0h2m50 0h1m13 0h1m15 0h1m9 0h1m13 0h1m23 0h1m23 0h1m5 0h1m10 0h1m1 0h1m1 0h1m16 0h1m3 0h1m16 0h1m1 0h1M50 195h1m34 0h1m7 0h1m28 0h1m5 0h1m5 0h1m3 0h1m2 0h1m13 0h1m9 0h1m17 0h1m6 0h1m7 0h1m23 0h1m5 0h1m18 0h1m3 0h1m25 0h1m4 0h1m3 0h1m5 0h1m14 0h1m12 0h1m21 0h1m3 0h1m28 0h1m11 0h1m3 0h1m16 0h1m21 0h1m3 0h1m11 0h1m59 0h1m8 0h1m18 0h1m8 0h1m3 0h1m6 0h1m35 0h1m8 0h1m14 0h1M26 196h1m7 0h2m5 0h1m2 0h1m8 0h1m69 0h2m30 0h1m31 0h1m35 0h1m39 0h1m11 0h1m9 0h1m4 0h1m21 0h1m11 0h1m14 0h1m35 0h1m8 0h1m8 0h1m6 0h1m52 0h1m7 0h1m4 0h1m8 0h1m15 0h1m47 0h2m20 0h1m14 0h1m7 0h1m3 0h1m9 0h1m10 0h1m9 0h1M31 197h1m10 0h1m18 0h1m25 0h1m9 0h1m5 0h1m12 0h1m7 0h1m3 0h1m1 0h1m5 0h1m10 0h1m7 0h1m13 0h1m6 0h1m22 0h1m12 0h1m14 0h1m35 0h3m11 0h1m34 0h1m87 0h1m5 0h1m24 0h1m2 0h1m27 0h1m11 0h1m1 0h1m3 0h1m1 0h1m1 0h1m8 0h1m10 0h1m22 0h1m3 0h1m12 0h1m10 0h1m27 0h1m9 0h1m23 0h1M22 198h1m9 0h1m10 0h1m1 0h1m2 0h1m14 0h1m11 0h1m2 0h1m1 0h1m4 0h1m13 0h1m35 0h1m8 0h1m4 0h1m3 0h1m20 0h1m1 0h1m1 0h1m10 0h1m18 0h1m8 0h1m7 0h1m16 0h2m7 0h1m9 0h1m39 0h1m5 0h1m7 0h1m1 0h1m5 0h1m24 0h1m19 0h1m29 0h1m7 0h1m10 0h1m19 0h1m9 0h1m4 0h1m30 0h1m13 0h1m9 0h1m18 0h2m29 0h1m54 0h1m1 0h1M23 199h1m6 0h2m27 0h1m2 0h1m27 0h1m29 0h2m4 0h1m6 0h1m47 0h1m21 0h1m1 0h1m54 0h1m25 0h2m12 0h1m13 0h1m3 0h1m2 0h1m24 0h1m22 0h1m3 0h1m6 0h1m32 0h1m11 0h1m4 0h1m34 0h1m14 0h1m32 0h1m27 0h1m13 0h1m10 0h3m33 0h1m15 0h1M31 200h1m10 0h1m5 0h1m29 0h1m10 0h1m21 0h1m9 0h1m4 0h1m22 0h1m6 0h1m24 0h1m23 0h1m38 0h1m18 0h1m24 0h1m1 0h1m23 0h1m2 0h1m10 0h1m14 0h1m29 0h1m18 0h1m11 0h1m20 0h1m18 0h1m7 0h1m1 0h1m13 0h1m19 0h1m19 0h2m28 0h1m14 0h1m11 0h1m22 0h1m12 0h1M33 201h1m5 0h1m4 0h1m37 0h1m7 0h1m9 0h1m13 0h1m3 0h1m1 0h1m11 0h1m11 0h1m20 0h1m4 0h1m21 0h1m24 0h1m9 0h1m1 0h1m56 0h1m1 0h1m1 0h1m7 0h1m4 0h2m13 0h1m19 0h2m21 0h1m75 0h1m29 0h1m1 0h1m8 0h1m48 0h1m7 0h1m4 0h1m9 0h1m9 0h2m15 0h1m35 0h1M45 202h1m3 0h1m27 0h1m11 0h1m17 0h1m4 0h2m6 0h1m13 0h1m36 0h1m1 0h1m13 0h1m38 0h1m42 0h1m52 0h2m12 0h1m19 0h1m3 0h1m5 0h1m3 0h1m20 0h1m14 0h1m2 0h1m13 0h2m44 0h1m10 0h1m2 0h1m15 0h1m2 0h1m6 0h1m2 0h1m10 0h1m50 0h1m13 0h1m13 0h1m4 0h1m4 0h1m1 0h1M48 203h1m3 0h1m39 0h1m32 0h1m2 0h1m44 0h1m1 0h1m5 0h1m17 0h1m12 0h1m2 0h1m5 0h1m8 0h1m21 0h1m14 0h2m32 0h1m12 0h1m19 0h2m16 0h1m2 0h1m2 0h1m12 0h1m15 0h1m11 0h1m16 0h1m10 0h1m2 0h1m12 0h1m7 0h1m12 0h1m18 0h1m33 0h1m15 0h1m3 0h1m24 0h1m10 0h1m15 0h1m19 0h2m8 0h1M28 204h1m10 0h1m37 0h1m43 0h2m6 0h1m15 0h1m18 0h1m12 0h1m3 0h1m10 0h1m15 0h1m1 0h2m8 0h1m6 0h1m8 0h2m13 0h1m21 0h1m6 0h1m4 0h1m31 0h1m13 0h1m69 0h1m7 0h1m7 0h1m18 0h2m18 0h1m15 0h1m1 0h1m21 0h1m46 0h1m18 0h1m6 0h1m10 0h3M27 205h1m2 0h1m11 0h1m8 0h1m6 0h1m29 0h1m38 0h1m70 0h1m14 0h1m24 0h1m21 0h1m27 0h1m6 0h1m7 0h1m20 0h1m5 0h1m2 0h1m27 0h1m3 0h1m25 0h1m32 0h1m5 0h1m14 0h1m2 0h1m13 0h1m2 0h1m19 0h1m6 0h1m18 0h1m25 0h1m21 0h1m7 0h1m7 0h1M32 206h1m18 0h1m16 0h1m5 0h1m22 0h1m19 0h1m3 0h1m14 0h1m30 0h1m6 0h1m9 0h1m12 0h1m14 0h1m6 0h1m5 0h1m21 0h1m4 0h1m2 0h1m20 0h1m16 0h1m14 0h1m27 0h1m3 0h1m18 0h1m16 0h1m20 0h1m40 0h1m1 0h1m1 0h1m51 0h1m35 0h1m15 0h1m47 0h1m12 0h1M27 207h1m2 0h1m1 0h1m5 0h2m15 0h1m5 0h1m26 0h1m68 0h1m3 0h1m25 0h1m3 0h1m23 0h1m32 0h1m4 0h2m9 0h1m11 0h1m34 0h1m16 0h1m10 0h1m27 0h2m12 0h2m41 0h1m39 0h1m2 0h1m17 0h1m2 0h1m12 0h1m7 0h1m21 0h1m13 0h1m6 0h1m10 0h1m8 0h1m11 0h1M53 208h1m18 0h1m27 0h1m9 0h2m1 0h1m5 0h2m22 0h1m12 0h1m20 0h1m63 0h1m14 0h1m3 0h1m2 0h1m4 0h1m5 0h1m60 0h1m16 0h1m77 0h1m19 0h1m62 0h1m5 0h1m42 0h1m9 0h1m33 0h1M28 209h1m7 0h1m34 0h1m3 0h1m2 0h1m8 0h1m2 0h1m2 0h1m27 0h1m1 0h1m7 0h1m23 0h1m7 0h1m14 0h1m2 0h1m8 0h1m26 0h1m14 0h1m21 0h1m2 0h1m1 0h1m10 0h1m4 0h1m66 0h1m3 0h1m2 0h1m5 0h1m16 0h1m1 0h1m20 0h1m11 0h1m51 0h1m57 0h1m9 0h1m1 0h1m6 0h1m56 0h2m20 0h2m1 0h1M26 210h1m32 0h1m47 0h1m6 0h1m6 0h1m20 0h1m22 0h1m11 0h1m2 0h1m2 0h2m36 0h1m6 0h1m31 0h1m15 0h1m20 0h1m7 0h2m3 0h1m21 0h1m28 0h1m14 0h1m32 0h1m12 0h1m11 0h1m7 0h1m4 0h2m7 0h1m5 0h1m15 0h1m9 0h1m23 0h1m1 0h1m5 0h1m20 0h1m8 0h1m6 0h1m24 0h1m2 0h1m28 0h1M22 211h1m23 0h1m28 0h1m22 0h1m6 0h1m14 0h1m9 0h1m14 0h1m4 0h2m7 0h1m7 0h1m26 0h1m14 0h1m15 0h1m9 0h1m12 0h1m11 0h1m3 0h1m16 0h1m21 0h2m15 0h1m18 0h1m9 0h1m30 0h1m3 0h1m31 0h1m1 0h1m8 0h1m14 0h1m1 0h1m2 0h1m1 0h2m46 0h1m4 0h1m16 0h1m4 0h1m7 0h1m5 0h1m33 0h1m35 0h1m1 0h1M39 212h1m3 0h1m3 0h1m4 0h1m14 0h1m11 0h1m28 0h1m46 0h1m1 0h1m4 0h1m8 0h1m2 0h1m10 0h1m10 0h1m25 0h1m25 0h1m5 0h2m23 0h1m31 0h1m13 0h1m25 0h1m1 0h1m4 0h1m6 0h2m5 0h1m11 0h1m48 0h1m26 0h1m29 0h1m20 0h1m21 0h1m4 0h1m35 0h1m1 0h1m4 0h1M41 213h1m38 0h1m42 0h1m6 0h1m19 0h1m13 0h1m5 0h1m2 0h1m33 0h1m8 0h1m45 0h1m10 0h1m7 0h1m13 0h1m4 0h1m7 0h1m1 0h2m9 0h1m2 0h1m9 0h1m71 0h1m35 0h1m6 0h1m4 0h1m50 0h3m22 0h1m3 0h1m25 0h2m12 0h1m19 0h1m3 0h1m17 0h1M22 214h1m25 0h1m10 0h1m28 0h1m21 0h1m36 0h1m44 0h2m17 0h1m32 0h1m44 0h1m1 0h1m17 0h1m6 0h1m59 0h2m6 0h1m40 0h2m3 0h1m1 0h1m11 0h1m44 0h1m2 0h1m51 0h1m16 0h1m18 0h1m32 0h1M23 215h1m5 0h1m28 0h1m27 0h1m9 0h1m14 0h1m40 0h1m10 0h1m1 0h1m1 0h1m61 0h1m51 0h1m2 0h1m5 0h1m21 0h1m4 0h1m2 0h1m10 0h1m9 0h1m10 0h1m39 0h3m1 0h1m9 0h1m1 0h1m15 0h1m12 0h1m6 0h1m21 0h1m14 0h1m13 0h1m15 0h1m26 0h1m2 0h3m13 0h1m33 0h1m2 0h1m13 0h1M34 216h1m5 0h1m35 0h1m26 0h1m17 0h2m13 0h1m15 0h1m7 0h1m47 0h2m10 0h1m23 0h2m4 0h1m2 0h1m14 0h1m10 0h1m20 0h1m11 0h1m48 0h1m7 0h1m15 0h1m10 0h1m2 0h1m9 0h2m10 0h1m15 0h1m3 0h1m19 0h1m5 0h2m15 0h1m19 0h1m11 0h1m4 0h1m3 0h1m31 0h1m1 0h2m22 0h1M26 217h1m7 0h1m26 0h1m8 0h1m7 0h2m56 0h1m15 0h1m6 0h1m13 0h1m4 0h1m7 0h1m2 0h1m1 0h1m16 0h1m15 0h1m15 0h1m7 0h1m7 0h1m7 0h1m9 0h1m19 0h1m11 0h2m12 0h1m24 0h1m31 0h1m18 0h1m15 0h2m5 0h1m12 0h1m11 0h1m17 0h1m10 0h1m3 0h1m16 0h1m15 0h1m50 0h1m14 0h1m2 0h1m20 0h1m4 0h1M77 218h1m7 0h1m61 0h1m33 0h1m5 0h1m1 0h1m12 0h1m91 0h1m15 0h1m8 0h1m11 0h1m13 0h1m23 0h1m19 0h1m19 0h1m4 0h1m4 0h1m5 0h1m18 0h1m14 0h1m3 0h1m21 0h1m37 0h1m18 0h1m19 0h1m12 0h1m5 0h2m1 0h1m9 0h1m7 0h1M32 219h1m14 0h1m47 0h1m1 0h1m36 0h1m9 0h1m4 0h1m20 0h1m15 0h1m6 0h1m13 0h1m17 0h1m4 0h1m15 0h1m23 0h2m17 0h1m6 0h1m2 0h1m2 0h1m7 0h1m5 0h1m11 0h1m4 0h2m43 0h1m10 0h1m11 0h1m49 0h1m11 0h1m1 0h1m26 0h1m1 0h1m4 0h1m2 0h1m1 0h1m12 0h2m5 0h1m2 0h1m31 0h1m9 0h1m10 0h1m7 0h1M34 220h1m46 0h1m25 0h1m5 0h1m8 0h1m6 0h1m3 0h1m37 0h1m14 0h1m9 0h1m2 0h1m6 0h1m36 0h1m4 0h1m12 0h1m27 0h1m21 0h1m2 0h1m11 0h1m23 0h1m5 0h1m9 0h1m1 0h1m7 0h1m26 0h1m14 0h1m8 0h1m30 0h1m30 0h1m9 0h1m8 0h1m7 0h1m13 0h1m1 0h1m2 0h1m5 0h1m1 0h1m13 0h1m5 0h1m43 0h1m9 0h1M23 221h3m33 0h1m5 0h1m18 0h2m74 0h1m15 0h1m3 0h1m41 0h2m23 0h1m2 0h1m22 0h1m31 0h1m10 0h1m29 0h1m20 0h1m5 0h1m42 0h1m8 0h1m5 0h1m47 0h1m17 0h1m9 0h1m37 0h1m5 0h1m5 0h1m15 0h1m33 0h1m9 0h1M36 222h1m12 0h1m13 0h1m17 0h1m11 0h2m2 0h1m9 0h2m7 0h2m1 0h1m9 0h1m2 0h1m31 0h1m1 0h1m7 0h2m14 0h1m9 0h1m8 0h1m6 0h1m18 0h1m5 0h1m14 0h1m1 0h1m31 0h1m4 0h1m11 0h1m7 0h1m25 0h1m19 0h1m7 0h1m28 0h1m2 0h1m10 0h1m32 0h1m15 0h1m22 0h1m2 0h1m9 0h1m17 0h1m3 0h1m11 0h1m7 0h1m5 0h1m19 0h1m25 0h1m15 0h1m8 0h1m1 0h1M22 223h1m6 0h1m26 0h1m6 0h1m26 0h1m2 0h1m3 0h2m20 0h1m7 0h1m7 0h1m40 0h1m6 0h1m14 0h1m68 0h1m1 0h2m10 0h1m8 0h1m19 0h1m4 0h1m20 0h1m11 0h1m1 0h1m24 0h1m29 0h1m8 0h1m4 0h1m42 0h1m19 0h1m5 0h2m51 0h1m35 0h1m25 0h1m6 0h1M24 224h1m3 0h1m57 0h1m17 0h1m38 0h1m13 0h1m23 0h1m22 0h1m46 0h1m1 0h1m17 0h1m5 0h1m56 0h1m13 0h1m9 0h1m40 0h1m13 0h2m5 0h1m57 0h1m6 0h1m16 0h1m2 0h1m6 0h1m3 0h1m17 0h1m2 0h1m10 0h1m15 0h1m25 0h1m13 0h1m2 0h1M31 225h1m3 0h1m1 0h1m3 0h1m11 0h1m9 0h1m2 0h1m31 0h1m5 0h1m9 0h1m28 0h1m6 0h1m4 0h1m11 0h1m6 0h1m28 0h1m34 0h1m6 0h1m18 0h1m52 0h1m4 0h1m9 0h1m24 0h1m2 0h1m23 0h2m34 0h1m1 0h1m18 0h1m1 0h1m14 0h1m18 0h2m2 0h1m21 0h1m5 0h1m22 0h2m6 0h1m11 0h1m47 0h2m3 0h1m5 0h1m5 0h1M33 226h1m1 0h1m5 0h1m4 0h1m21 0h1m25 0h1m8 0h1m24 0h1m6 0h1m15 0h1m8 0h1m20 0h1m11 0h1m3 0h1m6 0h1m23 0h1m4 0h1m13 0h1m1 0h1m21 0h1m85 0h1m3 0h1m22 0h1m13 0h1m9 0h1m27 0h1m37 0h1m4 0h1m1 0h1m15 0h1m3 0h1m7 0h1m5 0h1m8 0h1m10 0h1m16 0h1M22 227h1m1 0h1m6 0h1m8 0h1m2 0h1m1 0h1m7 0h1m69 0h2m4 0h1m1 0h1m6 0h1m16 0h1m21 0h1m9 0h1m37 0h1m7 0h2m8 0h1m16 0h1m6 0h1m18 0h1m6 0h1m4 0h1m3 0h1m5 0h1m25 0h2m15 0h1m6 0h1m17 0h1m12 0h1m12 0h1m28 0h1m46 0h1m10 0h1m29 0h1m5 0h1m27 0h1m1 0h1M36 228h1m11 0h1m12 0h1m11 0h1m24 0h1m11 0h1m62 0h1m18 0h1m7 0h1m3 0h1m32 0h1m19 0h1m6 0h1m53 0h1m15 0h1m25 0h1m18 0h1m2 0h1m26 0h1m12 0h1m4 0h1m9 0h1m28 0h1m40 0h1m19 0h1m7 0h1m8 0h2m17 0h1m2 0h1m6 0h1m9 0h1m15 0h1M23 229h1m19 0h1m33 0h1m14 0h1m22 0h1m13 0h1m9 0h1m10 0h1m48 0h1m20 0h1m1 0h1m1 0h1m4 0h1m9 0h1m17 0h1m6 0h1m82 0h2m36 0h1m6 0h1m42 0h1m21 0h1m14 0h1m6 0h1m2 0h1m28 0h1m14 0h1m8 0h3m8 0h1m5 0h1m8 0h1m35 0h1m4 0h1m12 0h1M27 230h1m1 0h1m1 0h1m2 0h1m5 0h2m1 0h1m4 0h1m22 0h1m10 0h1m25 0h1m21 0h1m1 0h1m1 0h1m15 0h1m56 0h1m1 0h1m4 0h1m2 0h1m1 0h1m10 0h1m23 0h1m13 0h1m1 0h2m2 0h1m7 0h1m51 0h1m37 0h1m21 0h1m1 0h1m2 0h1m16 0h1m5 0h1m36 0h1m1 0h1m3 0h2m4 0h1m10 0h1m6 0h1m29 0h1m17 0h1m5 0h1m4 0h1m31 0h1m35 0h1M22 231h1m33 0h1m9 0h1m26 0h1m11 0h2m47 0h1m2 0h1m1 0h1m10 0h1m4 0h1m1 0h1m12 0h1m17 0h1m42 0h1m11 0h1m13 0h1m14 0h1m7 0h1m6 0h1m7 0h1m7 0h1m7 0h1m22 0h1m22 0h1m20 0h1m4 0h1m2 0h1m11 0h1m10 0h1m38 0h1m3 0h1m5 0h1m11 0h1m1 0h1m11 0h1m9 0h1m3 0h1m7 0h1m3 0h1m13 0h1m1 0h1m5 0h1m12 0h1m7 0h1m10 0h1m4 0h1M30 232h1m47 0h1m7 0h1m38 0h1m62 0h1m3 0h1m12 0h2m81 0h1m1 0h1m3 0h1m20 0h1m2 0h1m25 0h1m19 0h1m17 0h1m36 0h1m18 0h1m6 0h1m23 0h1m13 0h1m1 0h1m18 0h1m45 0h1m19 0h1m8 0h1m14 0h1M49 233h1m1 0h1m5 0h1m5 0h1m5 0h1m4 0h1m6 0h2m22 0h1m38 0h1m39 0h1m1 0h1m4 0h1m24 0h1m10 0h1m24 0h1m12 0h1m25 0h1m13 0h1m24 0h1m8 0h1m49 0h1m10 0h1m16 0h1m5 0h1m14 0h1m1 0h1m5 0h1m25 0h1m1 0h1m19 0h1m5 0h1m6 0h1m9 0h1m45 0h1m7 0h1m2 0h1m8 0h1m34 0h1M20 234h1m17 0h1m21 0h1m31 0h1m15 0h1m6 0h2m15 0h1m3 0h1m1 0h1m8 0h1m5 0h1m27 0h1m29 0h1m23 0h1m4 0h1m50 0h1m1 0h1m15 0h2m4 0h1m19 0h1m9 0h1m18 0h1m5 0h1m12 0h1m13 0h1m19 0h1m27 0h1m3 0h1m14 0h1m43 0h1m30 0h1m4 0h1m13 0h1m14 0h1m6 0h1m14 0h1M22 235h1m18 0h1m30 0h1m2 0h1m19 0h1m31 0h1m23 0h1m22 0h1m5 0h1m4 0h1m12 0h1m7 0h1m7 0h1m24 0h1m8 0h1m29 0h1m1 0h1m2 0h2m9 0h1m14 0h1m12 0h1m15 0h1m13 0h1m1 0h1m11 0h1m20 0h1m25 0h1m30 0h1m13 0h1m25 0h1m12 0h2m7 0h1m9 0h1m4 0h1m7 0h1m19 0h1m8 0h1m11 0h1m3 0h1m19 0h1M22 236h1m4 0h1m3 0h1m4 0h1m51 0h1m36 0h1m18 0h1m7 0h1m4 0h1m13 0h1m11 0h1m8 0h1m31 0h1m7 0h1m14 0h1m21 0h1m4 0h1m12 0h1m16 0h1m14 0h1m1 0h1m28 0h1m3 0h1m2 0h1m18 0h1m9 0h1m16 0h1m8 0h1m82 0h1m8 0h1m17 0h1m19 0h1m53 0h1M20 237h1m1 0h1m5 0h1m6 0h1m1 0h1m6 0h1m20 0h1m66 0h2m23 0h2m27 0h1m4 0h1m8 0h1m4 0h1m22 0h1m11 0h1m7 0h1m21 0h1m5 0h1m20 0h1m10 0h2m2 0h1m10 0h1m24 0h1m19 0h2m74 0h1m39 0h1m1 0h1m14 0h1m17 0h1m11 0h2m4 0h1m1 0h1m37 0h1m19 0h1m7 0h1M23 238h1m5 0h1m50 0h1m28 0h1m19 0h1m1 0h1m2 0h1m47 0h1m6 0h1m11 0h1m1 0h1m11 0h1m8 0h1m14 0h1m4 0h1m6 0h1m11 0h1m9 0h1m5 0h1m14 0h1m21 0h1m38 0h1m13 0h1m1 0h1m12 0h1m3 0h1m11 0h1m11 0h1m1 0h1m4 0h1m17 0h1m12 0h2m15 0h1m10 0h1m7 0h1m18 0h1m12 0h1m10 0h1m2 0h1m10 0h1m11 0h1m7 0h1m24 0h1m10 0h1m3 0h1M48 239h1m52 0h1m46 0h1m2 0h1m19 0h1m19 0h1m20 0h1m4 0h1m22 0h1m13 0h1m15 0h1m23 0h1m19 0h1m15 0h1m42 0h1m31 0h1m2 0h1m17 0h1m9 0h1m14 0h1m6 0h1m13 0h1m2 0h1m70 0h1m21 0h1m8 0h1m18 0h1m17 0h1M30 240h1m13 0h1m29 0h1m16 0h1m3 0h1m24 0h1m1 0h1m1 0h1m5 0h1m5 0h1m32 0h1m2 0h1m1 0h2m1 0h1m28 0h1m1 0h1m8 0h2m4 0h1m9 0h1m9 0h1m5 0h1m17 0h1m21 0h1m4 0h1m4 0h1m13 0h2m7 0h1m8 0h1m32 0h1m20 0h1m3 0h1m7 0h1m20 0h1m11 0h2m5 0h1m11 0h1m15 0h1m3 0h1m10 0h1m19 0h2m5 0h1m2 0h2m2 0h1m1 0h1m11 0h1m1 0h1m4 0h1m13 0h1m10 0h1m1 0h1m45 0h1M27 241h1m3 0h1m3 0h1m13 0h1m21 0h1m13 0h1m3 0h1m4 0h1m26 0h1m42 0h1m7 0h1m10 0h1m5 0h1m3 0h2m23 0h1m15 0h1m8 0h1m10 0h1m25 0h1m41 0h1m25 0h1m7 0h1m28 0h1m1 0h1m8 0h1m10 0h1m15 0h1m3 0h1m10 0h1m9 0h1m8 0h2m6 0h2m12 0h1m14 0h1m5 0h1m1 0h1m22 0h1m3 0h3m1 0h2m3 0h1m20 0h1m10 0h1m7 0h1M44 242h1m12 0h1m4 0h1m28 0h1m32 0h1m2 0h1m5 0h1m14 0h1m24 0h1m15 0h1m11 0h1m25 0h1m11 0h1m8 0h1m45 0h1m2 0h1m1 0h1m39 0h1m9 0h1m49 0h1m7 0h2m64 0h1m11 0h1m32 0h1m18 0h1m4 0h1m8 0h1m1 0h1m35 0h1M23 243h2m6 0h1m18 0h1m11 0h1m38 0h1m54 0h1m1 0h2m18 0h1m3 0h1m3 0h1m26 0h1m5 0h1m10 0h1m5 0h1m8 0h1m14 0h1m30 0h1m22 0h1m5 0h1m18 0h1m21 0h1m24 0h1m5 0h1m18 0h1m4 0h1m11 0h1m1 0h1m19 0h1m35 0h1m5 0h1m10 0h1m21 0h1m19 0h1m21 0h1m32 0h1M57 244h1m49 0h1m19 0h1m50 0h1m14 0h1m2 0h1m11 0h1m3 0h1m15 0h1m44 0h1m53 0h1m6 0h1m7 0h1m14 0h1m21 0h1m2 0h1m41 0h1m9 0h1m25 0h1m2 0h1m35 0h1m7 0h1m2 0h1m45 0h1m1 0h1m1 0h1m51 0h1m3 0h1M31 245h1m6 0h1m2 0h1m3 0h1m7 0h1m19 0h1m3 0h1m5 0h1m11 0h1m22 0h1m24 0h1m1 0h1m70 0h1m6 0h1m10 0h1m13 0h1m8 0h1m1 0h1m11 0h1m6 0h1m6 0h1m68 0h1m1 0h1m8 0h1m32 0h1m29 0h1m3 0h1m29 0h1m28 0h2m29 0h1m9 0h1m32 0h1m9 0h1m5 0h2M34 246h1m5 0h1m23 0h1m22 0h1m2 0h2m18 0h1m5 0h1m9 0h1m36 0h1m3 0h1m15 0h1m2 0h2m8 0h1m25 0h1m11 0h1m7 0h1m23 0h1m21 0h1m3 0h1m24 0h1m3 0h1m7 0h1m4 0h1m57 0h1m4 0h2m5 0h1m4 0h1m37 0h1m8 0h1m60 0h1m35 0h1M25 247h1m48 0h1m10 0h1m9 0h1m46 0h2m43 0h1m16 0h1m1 0h1m3 0h1m29 0h1m14 0h1m28 0h1m40 0h1m2 0h1m10 0h1m10 0h1m35 0h1m6 0h1m1 0h1m39 0h1m9 0h1m24 0h1m2 0h1m52 0h1m33 0h1m30 0h1m11 0h1m1 0h1m9 0h1m1 0h1M28 248h1m11 0h1m1 0h1m8 0h1m6 0h1m1 0h1m53 0h1m5 0h1m1 0h1m19 0h2m1 0h1m25 0h1m8 0h1m24 0h1m28 0h1m25 0h1m9 0h1m3 0h1m61 0h1m7 0h1m35 0h1m1 0h1m1 0h1m17 0h1m32 0h1m28 0h1m9 0h1m6 0h1m14 0h1m3 0h1m10 0h1m17 0h1m47 0h1m29 0h1m5 0h1m3 0h1M24 249h1m4 0h1m1 0h1m5 0h1m4 0h1m1 0h1m3 0h1m47 0h1m15 0h1m3 0h1m17 0h1m11 0h1m14 0h1m4 0h1m25 0h1m19 0h1m1 0h1m5 0h1m12 0h1m7 0h1m18 0h1m2 0h1m15 0h1m21 0h1m32 0h1m7 0h1m22 0h1m36 0h1m18 0h1m2 0h1m59 0h1m6 0h1m4 0h1m4 0h1m7 0h1m2 0h1m25 0h1m18 0h1m13 0h1m7 0h1m1 0h1m4 0h1m7 0h1m4 0h1m7 0h1m3 0h1M20 250h1m14 0h1m15 0h1m21 0h1m5 0h1m11 0h1m75 0h1m2 0h1m32 0h1m3 0h1m36 0h1m14 0h1m12 0h1m29 0h1m7 0h1m44 0h1m33 0h1m57 0h1m24 0h1m4 0h1m41 0h1m1 0h1m1 0h1m7 0h1m12 0h1m39 0h1M27 251h1m5 0h1m10 0h1m9 0h1m36 0h1m26 0h1m6 0h1m17 0h1m3 0h1m17 0h1m3 0h2m20 0h2m3 0h1m12 0h1m9 0h1m58 0h1m8 0h1m8 0h1m8 0h1m3 0h1m18 0h1m20 0h1m7 0h1m18 0h1m54 0h1m7 0h1m11 0h1m3 0h1m19 0h1m10 0h1m20 0h1m33 0h1m6 0h1m1 0h1m4 0h1m6 0h1m40 0h1M41 252h1m1 0h1m11 0h1m41 0h1m2 0h1m1 0h1m59 0h1m6 0h1m10 0h1m1 0h1m11 0h1m31 0h1m4 0h1m21 0h1m44 0h2m7 0h1m8 0h1m9 0h1m4 0h1m2 0h1m17 0h1m26 0h1m18 0h2m6 0h1m8 0h1m22 0h1m21 0h1m10 0h3m22 0h1m48 0h1m21 0h1m4 0h1m13 0h1m12 0h1M26 253h1m3 0h1m10 0h1m43 0h1m31 0h1m23 0h1m15 0h1m25 0h1m40 0h1m9 0h1m2 0h1m3 0h1m75 0h1m9 0h1m20 0h1m17 0h1m40 0h1m6 0h1m9 0h1m5 0h1m10 0h1m56 0h2m31 0h2m10 0h1m8 0h1m5 0h1m27 0h1m6 0h1m8 0h1m12 0h1m3 0h1M24 254h1m14 0h1m4 0h1m41 0h1m4 0h1m13 0h1m8 0h1m4 0h1m3 0h1m39 0h2m2 0h1m2 0h1m24 0h1m16 0h1m4 0h1m23 0h1m8 0h1m1 0h1m1 0h1m11 0h1m57 0h1m84 0h1m3 0h1m21 0h1m12 0h1m18 0h1m2 0h1m14 0h1m8 0h1m16 0h1m14 0h1m13 0h1m1 0h1m2 0h1m24 0h1m6 0h1m10 0h2M28 255h1m11 0h1m45 0h1m5 0h1m4 0h1m9 0h1m11 0h1m7 0h1m28 0h1m31 0h2m30 0h1m17 0h1m20 0h1m1 0h1m24 0h1m17 0h1m22 0h1m78 0h1m24 0h1m1 0h1m23 0h1m9 0h1m7 0h1m2 0h2m1 0h2m3 0h1m10 0h1m19 0h1m21 0h1m2 0h1m3 0h1m6 0h1m2 0h1m39 0h1M31 256h1m17 0h1m15 0h1m20 0h1m71 0h1m6 0h1m3 0h2m6 0h1m36 0h1m21 0h1m2 0h1m3 0h1m2 0h1m1 0h1m25 0h1m2 0h1m42 0h1m7 0h1m23 0h1m15 0h1m5 0h1m2 0h1m27 0h1m35 0h1m2 0h1m15 0h1m6 0h1m13 0h1m23 0h1m27 0h1m4 0h1m9 0h1m22 0h1m4 0h1m3 0h1m5 0h1m8 0h1m22 0h1M25 257h1m1 0h2m14 0h1m5 0h1m1 0h1m6 0h1m12 0h1m26 0h1m5 0h1m28 0h1m23 0h1m30 0h1m16 0h1m14 0h1m13 0h1m11 0h1m28 0h1m21 0h1m69 0h1m86 0h1m3 0h1m27 0h1m8 0h1m2 0h1m48 0h1m19 0h1m1 0h1m2 0h1m17 0h1m10 0h1m3 0h1m2 0h1m6 0h1m1 0h1M36 258h1m20 0h1m7 0h1m44 0h1m10 0h1m10 0h2m18 0h1m58 0h1m51 0h1m2 0h1m10 0h1m46 0h2m29 0h1m15 0h1m4 0h1m1 0h1m10 0h1m10 0h1m28 0h1m5 0h1m53 0h1m7 0h1m1 0h1m7 0h1m15 0h1m6 0h2m30 0h1m1 0h1m9 0h1m2 0h1m38 0h1m2 0h1M35 259h1m48 0h1m4 0h1m13 0h1m31 0h1m16 0h1m67 0h1m8 0h1m22 0h1m30 0h1m3 0h1m8 0h1m16 0h1m5 0h1m19 0h1m8 0h1m37 0h1m24 0h1m19 0h1m5 0h1m60 0h1m1 0h1m14 0h1m15 0h1m5 0h1m32 0h1m17 0h1m18 0h1M32 260h2m52 0h1m3 0h1m34 0h1m3 0h1m9 0h1m15 0h1m13 0h1m31 0h1m21 0h1m4 0h1m28 0h1m1 0h1m3 0h1m15 0h1m4 0h1m3 0h1m31 0h1m2 0h1m16 0h1m28 0h1m20 0h1m4 0h1m7 0h1m7 0h1m19 0h1m1 0h1m36 0h1m18 0h1m6 0h1m25 0h1m8 0h1m8 0h1m6 0h1m25 0h1m36 0h1M34 261h1m18 0h1m32 0h1m6 0h1m3 0h1m26 0h1m15 0h1m16 0h1m25 0h1m1 0h1m12 0h1m35 0h1m25 0h1m13 0h1m34 0h1m10 0h1m6 0h1m20 0h1m17 0h1m38 0h1m2 0h1m8 0h1m9 0h1m1 0h1m3 0h1m20 0h1m4 0h1m15 0h1m12 0h1m46 0h1m21 0h2m37 0h1m5 0h1M47 262h1m8 0h1m31 0h1m21 0h1m3 0h1m14 0h1m32 0h1m27 0h1m8 0h1m14 0h1m24 0h1m5 0h1m31 0h1m45 0h2m20 0h1m4 0h1m29 0h1m1 0h1m2 0h1m6 0h1m3 0h1m15 0h2m26 0h1m22 0h1m11 0h1m10 0h1m1 0h1m6 0h1m1 0h1m9 0h1m8 0h1m27 0h1m43 0h1m5 0h1M36 263h1m66 0h1m8 0h1m31 0h1m6 0h1m3 0h1m9 0h1m2 0h1m16 0h1m17 0h1m17 0h2m3 0h1m2 0h1m9 0h1m9 0h1m30 0h1m55 0h1m9 0h1m33 0h1m18 0h1m50 0h1m3 0h1m6 0h1m12 0h2m7 0h1m8 0h1m60 0h1m13 0h1M76 264h1m14 0h1m12 0h1m22 0h1m32 0h1m3 0h1m21 0h1m14 0h1m4 0h1m4 0h1m36 0h1m3 0h1m6 0h1m11 0h1m6 0h1m3 0h1m16 0h1m10 0h1m8 0h1m1 0h1m18 0h1m19 0h1m8 0h1m29 0h1m5 0h1m3 0h1m3 0h1m83 0h1m21 0h1m10 0h1m15 0h1m24 0h1m17 0h1m9 0h1m2 0h1m7 0h1m5 0h1M28 265h1m21 0h1m4 0h1m25 0h1m23 0h1m11 0h1m63 0h1m41 0h1m35 0h1m28 0h1m1 0h1m17 0h1m27 0h1m4 0h1m3 0h1m3 0h1m23 0h1m5 0h2m6 0h1m31 0h2m23 0h1m56 0h1m13 0h1m3 0h1m3 0h1m21 0h1m11 0h1m2 0h1m52 0h1m2 0h1M46 266h1m16 0h1m45 0h1m22 0h1m8 0h1m17 0h1m3 0h1m7 0h1m66 0h1m44 0h1m29 0h1m36 0h1m10 0h2m26 0h1m13 0h1m43 0h1m19 0h1m11 0h1m7 0h1m29 0h1m12 0h1m12 0h1m27 0h1m13 0h1m30 0h1M30 267h1m48 0h1m14 0h1m61 0h1m23 0h1m5 0h1m6 0h1m26 0h2m9 0h1m28 0h1m7 0h1m12 0h1m9 0h1m6 0h2m1 0h1m2 0h1m36 0h1m37 0h1m4 0h1m34 0h1m17 0h1m24 0h1m6 0h1m19 0h1m28 0h1m49 0h1m1 0h1m13 0h1M39 268h1m2 0h1m44 0h1m11 0h1m29 0h1m6 0h1m30 0h1m12 0h1m29 0h1m3 0h1m1 0h1m41 0h1m1 0h1m45 0h1m33 0h1m1 0h1m9 0h1m37 0h1m11 0h1m37 0h1m30 0h1m2 0h1m6 0h1m11 0h1m22 0h1m47 0h1m7 0h1m41 0h1M83 269h1m13 0h1m43 0h1m29 0h1m6 0h1m28 0h1m27 0h1m25 0h2m10 0h1m14 0h2m4 0h1m24 0h2m12 0h1m15 0h1m38 0h1m4 0h1m41 0h1m8 0h1m24 0h1m40 0h1m52 0h1m4 0h1m18 0h1m28 0h1M42 270h1m47 0h1m62 0h1m60 0h1m6 0h1m17 0h1m19 0h1m5 0h1m7 0h1m3 0h1m4 0h1m27 0h1m1 0h1m16 0h1m27 0h1m42 0h1m4 0h1m31 0h1m49 0h1m13 0h1m3 0h1m5 0h1m5 0h1m16 0h1m40 0h1m8 0h1m9 0h1M24 271h1m21 0h1m21 0h1m20 0h1m11 0h1m9 0h1m3 0h2m2 0h1m7 0h1m26 0h1m27 0h1m11 0h1m32 0h1m5 0h1m13 0h1m39 0h1m41 0h1m30 0h1m4 0h1m11 0h1m36 0h1m26 0h1m16 0h1m15 0h1m2 0h1m38 0h1m2 0h1m3 0h1m31 0h1m1 0h1m30 0h1m18 0h1M33 272h1m15 0h1m24 0h1m43 0h1m10 0h1m27 0h1m33 0h1m31 0h1m14 0h1m127 0h1m1 0h1m4 0h1m9 0h1m3 0h1m6 0h1m6 0h1m33 0h1m5 0h1m1 0h1m78 0h1m5 0h1m12 0h1m3 0h1m28 0h1m33 0h1M65 273h1m10 0h1m35 0h1m4 0h1m46 0h1m1 0h1m11 0h1m5 0h1m31 0h1m60 0h1m4 0h1m91 0h1m37 0h1m18 0h1m22 0h1m4 0h1m3 0h1m89 0h1m8 0h1m5 0h1M28 274h1m4 0h1m20 0h1m1 0h1m39 0h1m13 0h1m91 0h1m2 0h1m36 0h1m16 0h2m6 0h1m35 0h1m14 0h1m47 0h1m17 0h1m17 0h1m7 0h1m11 0h1m8 0h1m45 0h1m5 0h1m59 0h1m31 0h1m2 0h1m11 0h1M38 275h1m13 0h1m41 0h1m1 0h1m4 0h1m40 0h1m82 0h1m24 0h1m23 0h1m10 0h1m86 0h1m33 0h1m47 0h1m41 0h1m78 0h1m15 0h1M126 276h1m12 0h1m34 0h1m24 0h1m6 0h1m4 0h1m3 0h1m123 0h1m9 0h1m42 0h1m68 0h1m1 0h1m75 0h1m41 0h1m16 0h1M26 277h1m22 0h1m24 0h1m29 0h1m56 0h2m84 0h1m27 0h1m8 0h1m1 0h1m40 0h1m112 0h1m39 0h1m30 0h1m56 0h1m22 0h1M21 278h1m41 0h1m25 0h2m5 0h1m5 0h1m3 0h1m17 0h1m8 0h1m32 0h1m61 0h1m12 0h1m28 0h1m68 0h1m125 0h1m50 0h1m50 0h1M27 279h1m8 0h1m274 0h1m57 0h1m165 0h1m58 0h1M102 280h1m34 0h1m36 0h1m45 0h1m351 0h1m11 0h1m14 0h1M71 281h1m11 0h1m105 0h1m10 0h1m42 0h1m14 0h2m129 0h1m54 0h1M24 282h1m41 0h1m142 0h1m19 0h1m338 0h1M95 283h1m51 0h1m60 0h1M246 284h1m143 0h1M60 285h1m5 0h1m309 0h1M228 286h1m262 0h1M61 287h1m1 0h1m552 0h1M64 288h1M245 289h1"/>
<path stroke="#000036" d="M196 173h1M96 176h1M408 178h1m9 0h1m106 0h1M143 179h1m473 0h1M479 180h1m122 0h1M95 181h1m17 0h1m132 0h1m141 0h1M203 182h1m84 0h1m44 0h1m123 0h1m107 0h1M70 183h1m57 0h1m127 0h1m3 0h1m128 0h1m73 0h1m88 0h1m52 0h1m12 0h1M56 184h1m50 0h1m2 0h1m3 0h1m45 0h1m1 0h1m127 0h1m62 0h1m153 0h1M72 185h1m1 0h1m71 0h1m23 0h1m115 0h1m40 0h1m26 0h1m26 0h1m16 0h1m42 0h1m140 0h1M79 186h1m19 0h1m10 0h1m69 0h1m64 0h1m205 0h1m58 0h1m18 0h1m11 0h1m22 0h1m18 0h1M55 187h1m1 0h1m1 0h1m2 0h1m29 0h1m29 0h1m76 0h1m14 0h1m5 0h1m7 0h1m96 0h1m6 0h1m39 0h2m4 0h1m77 0h1m7 0h1m2 0h1m38 0h1m19 0h1m27 0h1m47 0h1M29 188h1m1 0h1m41 0h1m3 0h1m23 0h1m43 0h1m124 0h1m4 0h1m51 0h1m25 0h1m9 0h1m10 0h1m21 0h1m40 0h1m94 0h1M41 189h1m2 0h2m60 0h1m16 0h1m15 0h1m56 0h1m52 0h1m17 0h1m39 0h1m2 0h1m31 0h1m8 0h1m12 0h1m27 0h1m11 0h1m52 0h1m111 0h1M40 190h1m23 0h1m39 0h1m67 0h1m6 0h1m35 0h1m12 0h1m12 0h1m56 0h1m45 0h1m49 0h1m3 0h1m28 0h1m70 0h1m45 0h1M34 191h1m1 0h1m9 0h1m15 0h1m2 0h1m5 0h1m30 0h1m54 0h1m30 0h1m1 0h1m12 0h1m41 0h1m7 0h1m5 0h1m79 0h1m4 0h1m6 0h1m20 0h1m2 0h1m17 0h1m20 0h1m6 0h1m23 0h1m87 0h1m46 0h1m4 0h1M46 192h1m6 0h1m16 0h1m26 0h1m142 0h1m16 0h1m10 0h1m6 0h1m12 0h1m26 0h1m27 0h1m111 0h1m54 0h1m73 0h1m3 0h1M46 193h1m15 0h1m28 0h1m3 0h1m3 0h1m14 0h1m82 0h2m73 0h1m15 0h1m15 0h1m74 0h1m43 0h1m49 0h1m1 0h2m1 0h2m29 0h1m2 0h1m18 0h1m5 0h1m26 0h1m2 0h1m27 0h1m13 0h1m2 0h1M20 194h2m123 0h1m11 0h1m27 0h1m11 0h1m13 0h1m12 0h1m23 0h1m2 0h1m44 0h1m21 0h1m32 0h1m10 0h1m10 0h1m18 0h1m26 0h1m5 0h1m25 0h1m21 0h1m137 0h1M30 195h1m3 0h1m4 0h1m23 0h2m3 0h1m45 0h1m15 0h1m12 0h1m19 0h1m10 0h1m69 0h1m19 0h1m32 0h1m8 0h1m1 0h1m12 0h1m5 0h2m36 0h1m4 0h1m13 0h1m18 0h1m22 0h1m6 0h1m13 0h1m82 0h1m1 0h1m11 0h1m21 0h1m48 0h1M84 196h1m5 0h1m8 0h1m3 0h1m12 0h1m24 0h1m6 0h1m35 0h1m31 0h1m4 0h1m9 0h1m36 0h1m14 0h1m38 0h1m3 0h1m17 0h1m5 0h1m4 0h1m12 0h1m37 0h1m6 0h1m18 0h1m3 0h1m15 0h1m25 0h1m48 0h1m2 0h1m14 0h1m6 0h1m21 0h1m6 0h1m28 0h1M53 197h1m95 0h1m20 0h1m46 0h1m8 0h1m14 0h1m7 0h1m77 0h1m31 0h1m65 0h1m6 0h1m3 0h1m14 0h1m7 0h1m19 0h1m14 0h1m22 0h1m45 0h1m14 0h1m11 0h1m27 0h1M23 198h1m17 0h1m8 0h1m2 0h2m17 0h1m23 0h1m35 0h1m6 0h1m19 0h1m5 0h1m22 0h1m9 0h1m21 0h1m3 0h1m11 0h1m31 0h1m5 0h1m1 0h1m11 0h1m2 0h1m1 0h1m2 0h1m74 0h1m5 0h1m10 0h1m5 0h1m7 0h1m5 0h1m40 0h1m5 0h1m16 0h1m12 0h1m10 0h1m33 0h1m29 0h2m5 0h1m17 0h1m6 0h1M26 199h1m61 0h1m7 0h1m18 0h1m2 0h1m15 0h1m57 0h1m58 0h2m71 0h1m19 0h1m15 0h1m1 0h1m11 0h1m18 0h1m70 0h1m28 0h1m18 0h1m21 0h1m11 0h1m40 0h1m5 0h1m9 0h1m9 0h2M30 200h1m21 0h1m2 0h1m9 0h1m19 0h1m57 0h1m9 0h1m12 0h1m10 0h1m35 0h1m5 0h1m52 0h1m6 0h1m16 0h1m26 0h1m16 0h1m26 0h1m14 0h1m16 0h1m45 0h1m54 0h1m59 0h1m3 0h1M25 201h2m21 0h1m11 0h1m32 0h1m1 0h1m21 0h1m24 0h1m50 0h1m9 0h1m28 0h1m6 0h1m10 0h1m12 0h2m17 0h1m69 0h1m1 0h1m7 0h1m11 0h1m80 0h1m4 0h1m44 0h1m35 0h1m28 0h1m17 0h1M22 202h1m2 0h1m2 0h1m1 0h1m5 0h1m3 0h1m9 0h1m21 0h1m2 0h2m24 0h1m34 0h1m1 0h1m54 0h1m17 0h1m22 0h1m33 0h1m8 0h1m24 0h1m5 0h1m70 0h1m8 0h1m6 0h1m138 0h1m7 0h1m7 0h1m17 0h1m15 0h1m5 0h1m8 0h1m10 0h1M27 203h1m16 0h1m13 0h1m6 0h1m1 0h1m5 0h1m11 0h1m1 0h1m43 0h1m57 0h1m43 0h1m14 0h1m7 0h1m49 0h1m14 0h1m11 0h1m29 0h1m1 0h1m37 0h1m15 0h1m22 0h1m1 0h1m12 0h1m15 0h1m12 0h1m26 0h1m10 0h1m33 0h1m20 0h1m1 0h2m32 0h1M31 204h2m16 0h1m18 0h1m11 0h1m88 0h1m26 0h1m4 0h1m33 0h1m21 0h1m34 0h1m27 0h1m2 0h1m2 0h1m11 0h1m35 0h1m12 0h1m4 0h1m1 0h1m13 0h1m37 0h1m22 0h1m8 0h1m12 0h1m5 0h1m13 0h1m6 0h1m54 0h1m16 0h1m9 0h1m12 0h1M35 205h1m7 0h1m29 0h1m8 0h1m24 0h1m49 0h1m1 0h1m4 0h1m11 0h1m2 0h1m9 0h1m10 0h1m8 0h1m23 0h1m30 0h1m8 0h1m24 0h1m32 0h1m2 0h1m11 0h1m3 0h1m4 0h1m4 0h1m13 0h1m37 0h1m7 0h1m13 0h1m17 0h1m20 0h1m16 0h1m4 0h1m7 0h1m1 0h1m28 0h1m11 0h1m27 0h1m1 0h1M25 206h1m32 0h1m32 0h1m6 0h1m6 0h2m21 0h2m25 0h1m43 0h1m11 0h1m4 0h1m5 0h1m20 0h1m41 0h1m2 0h1m6 0h1m9 0h1m8 0h1m8 0h1m2 0h1m26 0h1m28 0h1m32 0h1m10 0h1m18 0h1m19 0h1m6 0h2m48 0h1m11 0h1m4 0h1m12 0h1m45 0h1m1 0h1m10 0h1m1 0h1m2 0h1M28 207h1m45 0h1m10 0h1m6 0h1m6 0h1m46 0h1m6 0h1m21 0h1m14 0h1m5 0h1m1 0h1m26 0h1m24 0h1m1 0h1m14 0h1m7 0h1m5 0h1m7 0h1m3 0h1m21 0h1m5 0h1m11 0h1m18 0h2m19 0h1m2 0h1m28 0h2m22 0h1m6 0h1m14 0h1m13 0h1m10 0h1m34 0h2m45 0h1m19 0h1m31 0h1M20 208h1m16 0h1m32 0h1m10 0h1m9 0h1m30 0h2m1 0h1m6 0h2m20 0h1m3 0h1m2 0h1m6 0h1m14 0h1m51 0h1m2 0h1m32 0h1m1 0h1m12 0h1m9 0h1m1 0h1m22 0h1m8 0h1m45 0h2m22 0h1m15 0h1m6 0h1m8 0h1m1 0h2m9 0h1m17 0h1m16 0h1m12 0h1m15 0h1m42 0h2m1 0h1m20 0h1m8 0h1m25 0h1M26 209h1m41 0h1m34 0h1m9 0h1m3 0h1m38 0h2m13 0h1m13 0h2m29 0h1m3 0h1m5 0h2m3 0h1m40 0h1m17 0h1m3 0h1m13 0h1m1 0h1m4 0h1m9 0h1m40 0h1m4 0h1m13 0h1m19 0h1m9 0h1m15 0h1m33 0h1m8 0h1m13 0h1m14 0h1m17 0h1m1 0h1m10 0h1m3 0h1m10 0h1m2 0h1m27 0h1m3 0h1m5 0h1m1 0h1m2 0h1M44 210h1m43 0h1m14 0h1m19 0h1m5 0h2m22 0h1m2 0h1m3 0h1m17 0h1m38 0h1m21 0h1m23 0h1m3 0h1m10 0h1m7 0h1m56 0h1m29 0h1m1 0h1m9 0h1m7 0h1m25 0h1m43 0h1m12 0h1m14 0h1m23 0h1m5 0h1m3 0h1m30 0h1m10 0h1m10 0h1m7 0h1m19 0h1M35 211h1m15 0h1m22 0h1m26 0h1m13 0h1m7 0h1m11 0h1m1 0h1m8 0h1m14 0h1m2 0h1m3 0h1m20 0h1m5 0h1m8 0h1m9 0h1m6 0h1m14 0h1m5 0h1m25 0h1m7 0h1m47 0h1m2 0h1m17 0h1m5 0h1m11 0h1m3 0h1m8 0h1m38 0h1m6 0h1m8 0h1m6 0h1m28 0h1m11 0h1m12 0h1m11 0h1m5 0h1m15 0h1m3 0h1m20 0h1m49 0h1m15 0h1M23 212h1m2 0h1m5 0h1m15 0h1m11 0h1m2 0h1m14 0h1m40 0h1m21 0h2m24 0h1m15 0h1m4 0h1m13 0h1m1 0h1m1 0h1m53 0h1m13 0h1m12 0h1m22 0h1m18 0h1m2 0h1m21 0h1m19 0h1m23 0h1m17 0h1m51 0h1m3 0h1m19 0h1m7 0h1m7 0h1m35 0h1m55 0h1M37 213h1m50 0h1m5 0h1m17 0h1m45 0h1m2 0h2m4 0h1m35 0h1m4 0h1m37 0h1m19 0h1m3 0h1m9 0h1m7 0h1m8 0h1m20 0h1m1 0h1m1 0h1m2 0h1m24 0h1m18 0h1m4 0h1m9 0h1m19 0h1m10 0h1m13 0h1m32 0h1m24 0h1m60 0h1m32 0h1m35 0h3M30 214h1m35 0h1m26 0h1m4 0h1m3 0h1m10 0h1m1 0h1m96 0h1m16 0h1m38 0h1m4 0h2m43 0h1m11 0h1m36 0h1m6 0h1m32 0h1m5 0h1m25 0h1m8 0h1m26 0h1m38 0h1m10 0h1m6 0h1m4 0h1m14 0h1m4 0h1m12 0h1m6 0h1m8 0h1m2 0h1m16 0h1M44 215h1m3 0h1m25 0h1m10 0h1m8 0h1m2 0h1m28 0h1m22 0h1m27 0h1m36 0h1m7 0h1m50 0h1m30 0h1m13 0h2m18 0h1m6 0h1m32 0h1m10 0h1m27 0h1m32 0h1m7 0h1m10 0h1m23 0h1m20 0h1m6 0h1m4 0h1m7 0h1m4 0h1m30 0h1m1 0h1m13 0h1m16 0h1M29 216h1m17 0h1m17 0h1m25 0h2m3 0h1m47 0h1m43 0h1m6 0h1m20 0h1m26 0h1m2 0h1m28 0h1m2 0h1m20 0h1m19 0h1m11 0h1m28 0h1m7 0h1m3 0h1m25 0h1m12 0h1m17 0h1m17 0h2m37 0h1m3 0h1m27 0h1m4 0h1m12 0h1m13 0h1m35 0h1m19 0h1M40 217h1m30 0h1m28 0h1m18 0h1m8 0h1m47 0h1m45 0h1m61 0h1m47 0h1m24 0h1m17 0h1m29 0h1m5 0h1m35 0h1m5 0h1m10 0h1m26 0h1m21 0h1m1 0h1m3 0h1m10 0h1m9 0h1m5 0h1m11 0h1m7 0h1m16 0h1m4 0h1m18 0h1M27 218h1m11 0h1m30 0h1m17 0h1m17 0h1m77 0h1m10 0h1m5 0h1m20 0h1m16 0h1m19 0h1m13 0h1m55 0h1m13 0h1m33 0h1m24 0h1m28 0h1m3 0h1m11 0h1m3 0h1m29 0h1m4 0h1m14 0h1m18 0h1m11 0h1m14 0h1m23 0h1m1 0h2m2 0h1m5 0h1m1 0h2m3 0h1m18 0h1M31 219h1m5 0h1m23 0h1m5 0h1m15 0h1m75 0h1m11 0h1m1 0h1m5 0h1m11 0h1m9 0h1m1 0h1m10 0h1m6 0h1m4 0h1m11 0h1m18 0h1m2 0h1m1 0h1m41 0h1m4 0h1m9 0h1m21 0h1m6 0h1m15 0h1m5 0h1m27 0h1m4 0h2m15 0h1m10 0h1m7 0h1m7 0h1m12 0h1m7 0h1m16 0h1m21 0h1m13 0h1m60 0h2m10 0h1m9 0h1m8 0h1M37 220h1m20 0h1m6 0h2m2 0h1m23 0h1m21 0h2m20 0h1m39 0h1m30 0h1m3 0h2m42 0h1m12 0h1m15 0h1m27 0h1m1 0h1m18 0h2m9 0h1m59 0h1m4 0h1m5 0h1m43 0h1m15 0h1m5 0h1m4 0h1m6 0h1m31 0h1m7 0h1m16 0h1m12 0h1m1 0h1m9 0h1m3 0h1M30 221h1m12 0h1m2 0h1m6 0h1m33 0h1m8 0h1m14 0h1m46 0h2m19 0h1m29 0h1m14 0h1m1 0h1m5 0h1m70 0h1m26 0h1m21 0h1m34 0h1m5 0h1m4 0h2m55 0h1m13 0h1m8 0h1m12 0h2m1 0h1m18 0h1m29 0h1m23 0h1m8 0h2M44 222h1m3 0h1m21 0h1m15 0h1m3 0h1m36 0h1m2 0h1m28 0h1m8 0h1m46 0h1m27 0h1m22 0h1m39 0h1m6 0h1m2 0h1m1 0h1m7 0h1m29 0h1m3 0h1m13 0h1m9 0h1m19 0h1m1 0h1m3 0h1m84 0h1m12 0h1m9 0h1m15 0h1m13 0h1m4 0h2M23 223h1m15 0h1m9 0h1m2 0h1m19 0h1m10 0h1m11 0h1m16 0h1m1 0h1m41 0h1m6 0h1m3 0h1m2 0h1m18 0h2m13 0h1m37 0h1m25 0h1m29 0h1m9 0h1m9 0h1m12 0h1m7 0h1m1 0h1m13 0h1m18 0h1m17 0h1m1 0h1m6 0h1m44 0h1m37 0h2m6 0h1m6 0h1m3 0h1m41 0h1m17 0h1m10 0h1M20 224h1m9 0h1m1 0h1m3 0h1m2 0h1m9 0h2m31 0h1m9 0h1m13 0h1m27 0h1m4 0h1m18 0h1m14 0h1m6 0h1m20 0h2m49 0h1m6 0h1m9 0h1m6 0h1m18 0h1m9 0h1m11 0h1m6 0h2m74 0h1m45 0h1m2 0h1m15 0h1m25 0h1m2 0h1m28 0h1m59 0h1M34 225h1m1 0h1m8 0h1m26 0h1m13 0h1m62 0h1m9 0h1m3 0h1m1 0h1m14 0h1m5 0h1m26 0h1m3 0h1m6 0h1m8 0h1m8 0h1m6 0h1m27 0h1m50 0h1m11 0h1m5 0h1m2 0h1m24 0h1m36 0h2m18 0h1m4 0h1m8 0h1m30 0h1m11 0h1m4 0h1m4 0h1m1 0h1m38 0h1m10 0h1m17 0h1m12 0h2M21 226h1m2 0h1m38 0h1m42 0h1m6 0h1m19 0h1m3 0h1m3 0h2m4 0h1m4 0h1m11 0h1m13 0h1m1 0h1m2 0h1m50 0h1m16 0h1m7 0h1m6 0h1m15 0h1m21 0h2m8 0h1m45 0h1m32 0h1m10 0h1m6 0h1m21 0h1m12 0h1m5 0h1m30 0h1m14 0h1m5 0h1m13 0h1m3 0h2m3 0h1m2 0h1m7 0h1m14 0h2m12 0h1M44 227h1m62 0h1m1 0h1m12 0h1m3 0h1m9 0h1m3 0h1m45 0h1m51 0h1m16 0h1m5 0h2m7 0h1m6 0h2m18 0h1m24 0h1m6 0h1m6 0h1m11 0h1m33 0h1m51 0h1m17 0h1m11 0h1m22 0h1m8 0h1m7 0h1m32 0h1m5 0h1m10 0h1m12 0h1m6 0h1m28 0h1M45 228h1m33 0h1m29 0h1m13 0h1m6 0h1m1 0h1m22 0h1m20 0h1m18 0h1m9 0h1m49 0h1m12 0h1m4 0h1m5 0h1m33 0h1m1 0h2m19 0h1m24 0h1m5 0h1m2 0h1m12 0h1m10 0h1m38 0h1m19 0h1m26 0h1m13 0h1m9 0h1m5 0h1m2 0h1m3 0h1m16 0h1m3 0h1m53 0h1m1 0h1m1 0h1M25 229h1m18 0h1m15 0h1m56 0h1m12 0h1m9 0h1m3 0h1m12 0h1m5 0h1m17 0h1m15 0h1m13 0h1m9 0h1m4 0h1m1 0h1m12 0h1m34 0h1m11 0h1m3 0h2m11 0h1m20 0h1m35 0h1m5 0h1m26 0h1m1 0h1m23 0h1m23 0h1m43 0h1m51 0h1m2 0h1m8 0h1m11 0h1m2 0h1m4 0h1M20 230h1m105 0h1m1 0h1m20 0h1m11 0h2m14 0h1m28 0h1m28 0h1m72 0h1m7 0h1m32 0h1m18 0h1m4 0h1m9 0h1m28 0h1m1 0h1m26 0h1m10 0h1m16 0h1m20 0h1m2 0h1m18 0h1m73 0h1m23 0h2M39 231h1m9 0h1m5 0h1m8 0h1m10 0h1m45 0h1m4 0h1m7 0h1m36 0h1m9 0h1m39 0h1m20 0h1m3 0h1m37 0h1m13 0h2m11 0h1m41 0h1m2 0h1m59 0h1m14 0h1m48 0h1m20 0h1m9 0h1m10 0h1m1 0h1m49 0h1m1 0h1m9 0h1m19 0h1M41 232h1m34 0h1m7 0h1m56 0h1m7 0h1m30 0h1m12 0h1m6 0h1m19 0h1m25 0h1m2 0h1m7 0h1m2 0h1m3 0h1m17 0h1m15 0h1m4 0h1m9 0h1m69 0h1m27 0h1m6 0h1m9 0h1m6 0h1m18 0h1m9 0h1m28 0h1m20 0h1m8 0h1m24 0h1m36 0h2m28 0h1M36 233h1m18 0h1m8 0h1m56 0h1m7 0h1m13 0h1m5 0h1m72 0h1m3 0h1m37 0h1m1 0h1m34 0h1m5 0h2m2 0h1m17 0h1m28 0h1m5 0h1m3 0h1m36 0h1m60 0h3m40 0h1m55 0h1m9 0h1m3 0h1m18 0h1m5 0h1M28 234h1m5 0h1m43 0h1m39 0h1m1 0h1m8 0h1m107 0h1m10 0h1m9 0h1m13 0h1m1 0h1m7 0h1m24 0h1m19 0h1m32 0h1m2 0h1m63 0h1m9 0h1m17 0h1m6 0h1m13 0h1m10 0h1m5 0h1m23 0h1m58 0h1m12 0h1m4 0h1m9 0h1M39 235h1m51 0h1m5 0h1m45 0h1m2 0h1m65 0h1m5 0h1m36 0h1m2 0h1m34 0h1m51 0h1m13 0h1m48 0h1m14 0h2m23 0h1m36 0h1m13 0h1m2 0h1m20 0h1m9 0h1m7 0h1m8 0h1m2 0h1m13 0h1m1 0h1m10 0h1M21 236h1m3 0h1m41 0h1m7 0h2m37 0h1m4 0h1m18 0h2m69 0h1m18 0h1m14 0h1m2 0h1m15 0h1m35 0h1m14 0h1m28 0h1m28 0h1m8 0h1m8 0h1m7 0h1m79 0h1m58 0h1m16 0h1m14 0h1m4 0h1m1 0h1m22 0h1m8 0h1m2 0h1m8 0h1M29 237h1m3 0h1m12 0h1m3 0h1m7 0h1m21 0h1m3 0h1m4 0h1m63 0h2m6 0h1m17 0h1m1 0h1m3 0h1m21 0h1m30 0h1m23 0h1m12 0h1m3 0h1m10 0h1m2 0h1m9 0h1m14 0h1m13 0h2m53 0h1m40 0h1m12 0h1m3 0h1m3 0h1m6 0h1m9 0h1m29 0h1m30 0h1m7 0h1m26 0h1m2 0h1m3 0h1m16 0h1m19 0h1m1 0h2m2 0h1m5 0h1M30 238h1m43 0h1m4 0h1m12 0h1m5 0h1m49 0h2m4 0h1m6 0h1m29 0h1m8 0h1m11 0h1m7 0h1m20 0h1m18 0h1m13 0h1m8 0h1m2 0h1m8 0h1m22 0h1m77 0h1m42 0h1m5 0h1m20 0h1m78 0h1m4 0h1m1 0h1m4 0h1m13 0h1m11 0h1m20 0h2M25 239h2m6 0h1m81 0h1m18 0h1m4 0h1m5 0h2m61 0h1m1 0h1m17 0h1m12 0h1m1 0h1m5 0h1m39 0h1m11 0h1m16 0h1m22 0h1m74 0h1m7 0h1m4 0h1m8 0h1m25 0h1m20 0h1m30 0h1m7 0h1m1 0h1m21 0h1m63 0h1M34 240h1m10 0h1m17 0h1m13 0h1m59 0h1m3 0h1m6 0h1m9 0h1m22 0h1m23 0h1m22 0h1m13 0h1m11 0h2m1 0h1m1 0h1m3 0h1m11 0h1m19 0h1m34 0h1m28 0h1m14 0h1m21 0h1m3 0h1m12 0h1m28 0h1m30 0h1m1 0h1m10 0h1m120 0h1m4 0h1M33 241h2m5 0h1m21 0h1m29 0h1m5 0h1m9 0h1m8 0h1m6 0h1m9 0h1m16 0h1m14 0h1m2 0h1m33 0h3m10 0h1m19 0h1m5 0h1m3 0h1m3 0h1m20 0h1m68 0h2m2 0h1m15 0h1m3 0h1m54 0h2m7 0h1m6 0h1m18 0h1m15 0h1m18 0h2m14 0h1m55 0h2M27 242h1m1 0h1m10 0h1m5 0h1m53 0h1m30 0h1m2 0h1m122 0h1m9 0h1m6 0h1m17 0h1m2 0h2m8 0h1m11 0h1m20 0h1m13 0h1m7 0h1m5 0h1m10 0h1m3 0h1m7 0h1m5 0h1m8 0h1m17 0h1m30 0h1m10 0h1m1 0h1m16 0h1m2 0h1m3 0h1m78 0h1m11 0h1m35 0h1M36 243h1m2 0h1m51 0h1m1 0h1m12 0h1m3 0h1m4 0h1m12 0h1m26 0h1m9 0h1m3 0h1m11 0h1m22 0h1m28 0h1m12 0h1m6 0h1m8 0h1m12 0h1m1 0h1m10 0h1m5 0h1m4 0h1m12 0h1m17 0h1m34 0h1m2 0h2m3 0h1m1 0h1m7 0h1m40 0h1m6 0h1m34 0h1m2 0h1m12 0h1m35 0h1m24 0h1m12 0h1m42 0h1m5 0h1m1 0h1M31 244h1m19 0h1m10 0h1m40 0h1m2 0h1m15 0h1m42 0h1m8 0h1m13 0h1m1 0h1m1 0h1m38 0h1m9 0h1m12 0h1m34 0h1m36 0h1m13 0h1m2 0h1m25 0h1m24 0h1m5 0h2m19 0h1m14 0h1m25 0h1m49 0h1m18 0h2m2 0h1m9 0h1m5 0h1m11 0h1m27 0h1M44 245h1m14 0h1m42 0h1m22 0h1m31 0h1m48 0h1m29 0h1m5 0h1m24 0h1m50 0h1m12 0h1m53 0h1m4 0h1m1 0h2m17 0h1m37 0h1m2 0h1m33 0h1m20 0h1m12 0h1m21 0h1m6 0h1M23 246h1m5 0h1m1 0h1m35 0h1m7 0h1m20 0h1m8 0h1m22 0h1m13 0h1m2 0h1m8 0h1m14 0h1m40 0h1m1 0h1m12 0h1m15 0h1m2 0h1m8 0h1m2 0h1m14 0h1m29 0h1m24 0h1m5 0h1m9 0h1m11 0h1m65 0h1m27 0h1m5 0h1m4 0h1m9 0h1m3 0h1m29 0h1m14 0h1m8 0h1m15 0h1m5 0h1m2 0h1m23 0h1m7 0h1m8 0h1m8 0h2m8 0h4M36 247h1m1 0h1m1 0h1m23 0h1m6 0h1m1 0h1m22 0h1m16 0h1m16 0h1m8 0h1m19 0h1m61 0h1m16 0h1m41 0h1m8 0h1m50 0h1m26 0h1m11 0h1m2 0h1m11 0h1m21 0h1m1 0h1m14 0h1m17 0h1m58 0h1m8 0h1m4 0h1m68 0h1m4 0h1m11 0h1M43 248h1m15 0h1m1 0h1m34 0h1m15 0h1m15 0h1m1 0h1m15 0h2m17 0h1m7 0h2m3 0h1m2 0h2m7 0h1m8 0h1m14 0h1m27 0h1m18 0h1m2 0h1m8 0h1m25 0h1m24 0h1m4 0h1m1 0h1m13 0h1m17 0h1m15 0h1m3 0h1m9 0h1m52 0h1m1 0h1m16 0h1m2 0h1m2 0h1m20 0h1m31 0h1m3 0h1m3 0h1m1 0h1m28 0h1m15 0h2m13 0h1M20 249h1m11 0h1m30 0h1m1 0h1m3 0h1m13 0h1m5 0h1m45 0h1m18 0h1m8 0h1m9 0h1m33 0h1m13 0h1m10 0h1m7 0h1m15 0h1m8 0h1m15 0h1m17 0h1m12 0h1m5 0h2m3 0h1m2 0h1m46 0h1m1 0h1m3 0h1m6 0h1m18 0h1m30 0h1m3 0h1m12 0h2m3 0h1m55 0h1m9 0h1m20 0h1m5 0h1m1 0h1M23 250h1m25 0h2m19 0h2m10 0h1m3 0h1m11 0h1m35 0h1m41 0h1m12 0h1m3 0h1m1 0h1m3 0h1m19 0h1m15 0h2m6 0h1m3 0h1m5 0h1m14 0h1m8 0h1m13 0h1m29 0h1m32 0h1m13 0h1m24 0h1m15 0h1m8 0h1m1 0h1m7 0h1m21 0h1m14 0h1m12 0h1m1 0h1m1 0h1m13 0h1m7 0h1m7 0h1m3 0h1m19 0h2m4 0h1m16 0h1m3 0h1m24 0h1m5 0h1m1 0h1M24 251h1m17 0h1m2 0h1m15 0h1m1 0h1m16 0h1m7 0h1m26 0h1m3 0h2m9 0h1m1 0h1m1 0h1m1 0h1m15 0h1m30 0h1m1 0h1m17 0h1m4 0h1m8 0h1m6 0h1m28 0h1m25 0h1m15 0h1m12 0h1m7 0h1m25 0h1m29 0h1m11 0h1m11 0h1m11 0h1m3 0h1m63 0h1m14 0h1m24 0h1m22 0h1m2 0h1m15 0h1m5 0h1m5 0h1m2 0h1m6 0h1m7 0h1m2 0h1m8 0h1m3 0h1m10 0h2M35 252h1m1 0h1m8 0h1m35 0h1m6 0h1m17 0h2m21 0h1m2 0h1m2 0h1m2 0h1m69 0h1m7 0h1m99 0h1m6 0h1m10 0h3m13 0h1m5 0h1m27 0h1m8 0h1m10 0h1m17 0h2m8 0h1m17 0h1m1 0h1m21 0h1m33 0h1m4 0h1m27 0h1m10 0h1m3 0h2m14 0h1m10 0h2m27 0h1m5 0h1M38 253h1m1 0h1m8 0h1m1 0h1m7 0h1m5 0h1m17 0h1m31 0h1m22 0h1m4 0h1m4 0h1m16 0h1m27 0h2m51 0h1m1 0h1m12 0h1m3 0h1m26 0h1m1 0h1m4 0h1m1 0h1m22 0h1m14 0h1m21 0h1m27 0h1m12 0h1m28 0h1m5 0h1m20 0h1m1 0h1m10 0h2m51 0h1m2 0h1m43 0h1M38 254h1m8 0h1m5 0h1m14 0h1m4 0h1m9 0h1m10 0h1m41 0h1m32 0h1m9 0h1m17 0h1m20 0h1m32 0h1m17 0h1m38 0h1m3 0h1m24 0h1m4 0h1m39 0h1m10 0h1m50 0h1m2 0h1m14 0h1m5 0h1m13 0h1m5 0h1m13 0h1m34 0h1m25 0h1m9 0h1m12 0h1m4 0h1m1 0h1M27 255h1m6 0h1m44 0h1m4 0h1m2 0h1m5 0h1m5 0h2m50 0h1m24 0h1m26 0h1m17 0h1m2 0h1m12 0h1m10 0h1m3 0h1m11 0h1m2 0h1m2 0h1m7 0h1m21 0h1m25 0h1m25 0h1m6 0h1m10 0h1m20 0h1m9 0h1m17 0h1m10 0h1m6 0h1m7 0h1m1 0h1m5 0h1m33 0h1m47 0h1m7 0h1m1 0h1m37 0h1m21 0h1M53 256h1m47 0h1m4 0h1m65 0h1m12 0h1m12 0h1m7 0h1m44 0h1m57 0h1m7 0h1m49 0h1m8 0h1m10 0h1m5 0h1m27 0h1m39 0h1m7 0h2m1 0h1m5 0h1m7 0h1m8 0h1m14 0h1m30 0h1m30 0h1m2 0h1M30 257h1m2 0h1m6 0h1m33 0h1m20 0h1m1 0h1m14 0h1m8 0h1m7 0h1m12 0h1m1 0h1m2 0h1m1 0h1m1 0h1m31 0h1m40 0h1m61 0h1m5 0h1m9 0h1m5 0h1m75 0h1m12 0h1m29 0h1m2 0h1m8 0h1m21 0h1m4 0h1m1 0h1m6 0h1m8 0h1m12 0h1m5 0h1m9 0h2m5 0h1m12 0h1m21 0h1m5 0h1M56 258h1m7 0h1m2 0h1m20 0h1m67 0h1m10 0h1m8 0h1m10 0h1m1 0h1m30 0h2m8 0h2m12 0h1m5 0h1m31 0h1m29 0h1m21 0h2m37 0h1m9 0h1m17 0h1m6 0h1m2 0h1m31 0h1m16 0h1m24 0h1m24 0h1m2 0h1m22 0h1m10 0h1m2 0h1m7 0h1m10 0h1m15 0h1m13 0h1m2 0h1m2 0h2m3 0h1M45 259h1m20 0h1m16 0h1m20 0h1m5 0h2m18 0h1m1 0h1m1 0h1m25 0h1m77 0h1m14 0h1m14 0h1m23 0h1m17 0h1m10 0h1m13 0h2m15 0h2m11 0h1m6 0h1m51 0h1m19 0h1m29 0h1m4 0h1m6 0h1m10 0h1m4 0h1m6 0h1m14 0h1m9 0h1m16 0h1m10 0h1M36 260h2m2 0h1m12 0h1m15 0h1m1 0h1m6 0h1m26 0h1m26 0h1m33 0h1m47 0h1m14 0h1m7 0h1m22 0h1m1 0h1m9 0h1m2 0h1m26 0h1m26 0h1m77 0h1m38 0h1m25 0h1m22 0h1m18 0h2m9 0h1m31 0h1M23 261h1m4 0h1m7 0h1m1 0h1m68 0h1m26 0h1m35 0h1m22 0h1m55 0h1m1 0h1m7 0h1m3 0h1m23 0h1m11 0h1m8 0h1m15 0h1m8 0h1m1 0h1m6 0h1m12 0h1m19 0h1m15 0h1m79 0h1m2 0h1m2 0h1m4 0h1m12 0h1m40 0h1m45 0h1m16 0h1m7 0h1M23 262h1m43 0h1m9 0h1m7 0h1m16 0h1m15 0h1m56 0h1m3 0h2m7 0h1m27 0h1m20 0h1m21 0h1m59 0h1m13 0h1m30 0h1m50 0h1m84 0h1m16 0h1m7 0h1m28 0h1m12 0h1m13 0h1m1 0h2M40 263h1m24 0h1m39 0h1m7 0h1m3 0h1m5 0h1m8 0h1m76 0h1m37 0h1m25 0h1m45 0h2m52 0h1m2 0h1m8 0h1m31 0h1m15 0h1m22 0h1m3 0h1m29 0h1m58 0h1m62 0h1m6 0h1M28 264h1m45 0h1m4 0h1m18 0h1m2 0h1m6 0h1m32 0h1m50 0h1m17 0h1m3 0h1m2 0h1m5 0h1m25 0h1m1 0h1m13 0h1m13 0h1m52 0h2m43 0h1m11 0h1m3 0h1m13 0h1m8 0h1m15 0h1m30 0h1m22 0h1m63 0h2m5 0h1m1 0h1m45 0h1M27 265h1m8 0h1m24 0h1m62 0h1m30 0h1m7 0h2m20 0h1m17 0h1m1 0h1m8 0h1m5 0h1m21 0h1m33 0h1m2 0h1m1 0h1m11 0h1m25 0h1m5 0h1m4 0h1m4 0h1m27 0h1m4 0h1m2 0h1m20 0h1m5 0h1m19 0h1m5 0h1m26 0h1m30 0h1m44 0h1m5 0h1m17 0h1m57 0h1M31 266h1m26 0h1m16 0h1m15 0h1m5 0h2m17 0h1m27 0h1m91 0h1m19 0h1m1 0h1m3 0h1m22 0h1m1 0h1m59 0h1m7 0h1m7 0h1m20 0h2m10 0h2m2 0h1m15 0h1m38 0h1m26 0h1m2 0h1m18 0h1m9 0h1m29 0h1m3 0h1m14 0h1M60 267h1m2 0h1m13 0h1m7 0h1m2 0h1m21 0h1m19 0h1m5 0h1m11 0h1m16 0h1m1 0h1m26 0h1m27 0h1m16 0h1m2 0h1m62 0h1m5 0h1m10 0h1m53 0h2m46 0h1m13 0h1m41 0h1m19 0h1m43 0h1m1 0h1m36 0h1m15 0h1m3 0h1M43 268h1m3 0h1m17 0h1m18 0h1m22 0h1m6 0h1m1 0h1m46 0h1m22 0h2m4 0h1m2 0h1m75 0h1m8 0h1m6 0h1m15 0h1m9 0h2m34 0h1m38 0h1m34 0h1m35 0h1m24 0h1m4 0h2m18 0h1m12 0h1m7 0h1m18 0h1m17 0h1m10 0h1m37 0h1M30 269h1m4 0h1m4 0h1m38 0h1m6 0h1m16 0h1m5 0h1m16 0h1m17 0h1m4 0h1m5 0h1m100 0h1m6 0h1m5 0h1m42 0h1m14 0h1m13 0h1m11 0h1m35 0h1m4 0h1m23 0h1m23 0h1m2 0h1m8 0h1m4 0h1m25 0h1m1 0h1m2 0h1m10 0h1m28 0h1m16 0h1m2 0h1m29 0h1m24 0h1m4 0h1m7 0h1M22 270h1m21 0h1m3 0h1m40 0h1m42 0h1m23 0h1m61 0h1m38 0h1m41 0h1m55 0h1m13 0h2m4 0h1m16 0h1m10 0h1m16 0h1m12 0h1m18 0h1m17 0h1m2 0h1m82 0h1m6 0h1M71 271h1m4 0h1m67 0h1m14 0h1m47 0h1m4 0h1m12 0h1m28 0h2m127 0h1m23 0h1m16 0h1m11 0h1m46 0h1m5 0h1m5 0h1m15 0h1m12 0h1m4 0h1m6 0h1m9 0h1m49 0h1M42 272h1m90 0h1m4 0h1m6 0h1m7 0h1m27 0h1m46 0h1m28 0h1m35 0h1m43 0h1m16 0h1m3 0h1m8 0h1m64 0h1m66 0h1M48 273h1m56 0h2m91 0h1m18 0h1m44 0h1m2 0h1m15 0h1m17 0h1m85 0h1m32 0h1m6 0h1m38 0h1m36 0h1m77 0h1m1 0h1M70 274h1m18 0h1m47 0h1m207 0h1m2 0h1m15 0h1m131 0h1m13 0h1m35 0h1m24 0h1m32 0h1M41 275h1m13 0h1m49 0h1m1 0h1m57 0h1m8 0h1m109 0h1m177 0h1m51 0h1m44 0h1M28 276h1m32 0h1m46 0h1m26 0h1m130 0h1m93 0h1m6 0h1m10 0h3m14 0h1m50 0h1m49 0h1m51 0h1m1 0h1m45 0h1m8 0h1M107 277h1m336 0h1m67 0h1M72 278h1m104 0h1m30 0h1m264 0h1m23 0h1M44 279h1m19 0h1m10 0h1m24 0h1m218 0h1m39 0h1m149 0h1M86 280h1m14 0h1m292 0h1m15 0h1m32 0h1M81 281h1m115 0h1m44 0h1M74 282h1m270 0h1M242 283h1m207 0h1m70 0h1M542 285h1M576 286h1"/>
<path stroke="#000047" d="M543 176h1M65 177h1m5 0h1M163 179h1M38 180h1m164 0h1M174 181h1M75 182h1m8 0h1m270 0h1m243 0h1M86 183h1m152 0h1m121 0h1m52 0h1m202 0h1M442 184h1m42 0h1M161 185h1m74 0h1m47 0h1m36 0h1m86 0h1m1 0h1m18 0h1M112 186h1m33 0h1m214 0h1m35 0h1m142 0h1M56 187h1m11 0h1m24 0h1m71 0h1m2 0h1m375 0h1M35 188h1m3 0h1m20 0h1m24 0h2m3 0h1m270 0h1m59 0h1m56 0h1m56 0h1m83 0h1M29 189h1m28 0h1m96 0h1m12 0h1m10 0h1m78 0h1m3 0h1m16 0h1m17 0h1m95 0h1m53 0h1m5 0h1M27 190h1m15 0h1m27 0h1m5 0h1m69 0h1m20 0h1m18 0h1m3 0h1m2 0h1m28 0h1m22 0h1m9 0h1m106 0h1m45 0h2m12 0h1m61 0h1m109 0h1m18 0h2M61 191h1m50 0h1m21 0h1m29 0h1m17 0h1m24 0h1m19 0h2m46 0h1m2 0h1m44 0h1m19 0h1m37 0h1m164 0h1m6 0h1m47 0h1M74 192h1m53 0h1m2 0h1m18 0h1m22 0h1m9 0h2m25 0h1m88 0h1m42 0h1m17 0h1m105 0h1m25 0h1m76 0h1M82 193h1m5 0h1m4 0h1m12 0h1m25 0h1m69 0h1m3 0h1m44 0h1m9 0h1m20 0h1m4 0h1m84 0h1m80 0h1m1 0h1m34 0h1m41 0h1m9 0h1m13 0h1m35 0h1M24 194h1m7 0h1m26 0h1m7 0h1m9 0h1m2 0h1m20 0h1m31 0h1m1 0h1m18 0h1m33 0h1m1 0h1m7 0h1m18 0h1m28 0h1m80 0h1m11 0h1m60 0h1m32 0h1m18 0h1m3 0h1m3 0h1m7 0h1m6 0h1m14 0h1m9 0h1m24 0h1m14 0h1m38 0h1M48 195h1m47 0h1m13 0h1m20 0h1m32 0h1m6 0h1m3 0h1m9 0h1m3 0h1m12 0h1m14 0h1m8 0h1m12 0h1m20 0h1m20 0h1m73 0h1m21 0h1m3 0h1m90 0h1m49 0h1m51 0h1m1 0h1m3 0h1m16 0h1m10 0h1m2 0h1M71 196h1m23 0h1m29 0h1m11 0h1m25 0h1m34 0h1m8 0h1m54 0h1m10 0h1m23 0h1m1 0h1m4 0h1m12 0h1m33 0h1m24 0h1m17 0h1m36 0h1m52 0h1m37 0h2m1 0h1m23 0h1m4 0h1m7 0h1m16 0h1m10 0h1M68 197h1m2 0h1m10 0h1m30 0h1m8 0h1m14 0h1m16 0h1m41 0h1m26 0h1m24 0h1m17 0h1m70 0h1m18 0h1m16 0h1m11 0h1m54 0h1m40 0h1m1 0h1m4 0h1m2 0h1m7 0h1m2 0h1m16 0h2m33 0h1m5 0h1m41 0h1m8 0h1M60 198h1m5 0h1m1 0h1m10 0h1m50 0h1m11 0h1m41 0h1m21 0h1m4 0h1m27 0h1m19 0h1m42 0h1m11 0h1m19 0h1m6 0h1m33 0h1m15 0h1m1 0h1m19 0h2m8 0h1m8 0h1m6 0h1m18 0h1m47 0h1m1 0h1m7 0h1m6 0h1m8 0h1m9 0h1m8 0h1m7 0h1m21 0h1m26 0h1m6 0h1M54 199h1m6 0h1m2 0h1m1 0h1m12 0h1m49 0h1m12 0h1m14 0h1m2 0h1m2 0h1m7 0h1m75 0h2m21 0h1m3 0h1m2 0h1m28 0h1m15 0h1m2 0h1m5 0h1m19 0h1m5 0h1m38 0h1m3 0h1m37 0h2m5 0h1m11 0h1m61 0h1m10 0h1m28 0h1m38 0h1m1 0h1M39 200h1m9 0h1m55 0h2m2 0h1m25 0h1m6 0h1m16 0h1m10 0h1m4 0h1m12 0h1m9 0h1m24 0h1m62 0h1m28 0h1m2 0h1m52 0h1m21 0h1m23 0h1m8 0h1m9 0h1m45 0h1m9 0h1m9 0h1m30 0h1m7 0h1m76 0h1M98 201h1m6 0h1m25 0h1m18 0h2m4 0h1m10 0h1m7 0h1m18 0h1m60 0h1m11 0h1m2 0h1m4 0h1m61 0h1m26 0h1m2 0h1m54 0h1m26 0h1m2 0h1m24 0h1m35 0h1m10 0h1m4 0h1m29 0h1m12 0h1m12 0h1m22 0h1M54 202h1m24 0h1m11 0h1m50 0h1m40 0h1m28 0h2m28 0h1m16 0h1m28 0h1m20 0h1m10 0h1m13 0h1m20 0h1m52 0h1m7 0h1m20 0h1m21 0h1m1 0h2m15 0h1m24 0h1m36 0h1m15 0h1m26 0h1m12 0h1m20 0h1M31 203h1m49 0h1m29 0h1m23 0h1m2 0h1m52 0h1m9 0h1m29 0h1m2 0h1m11 0h1m11 0h1m5 0h1m24 0h1m8 0h1m62 0h1m23 0h1m52 0h1m11 0h1m1 0h1m6 0h1m12 0h1m2 0h1m20 0h1m93 0h1m4 0h1m7 0h1M54 204h1m8 0h1m22 0h1m18 0h1m19 0h1m14 0h2m12 0h1m1 0h1m90 0h1m10 0h1m4 0h1m30 0h1m33 0h1m17 0h1m4 0h1m7 0h1m10 0h1m22 0h1m12 0h1m6 0h1m2 0h1m5 0h1m29 0h1m17 0h1m5 0h1m7 0h1m1 0h1m37 0h1m1 0h1m25 0h2m9 0h1m1 0h1M21 205h1m96 0h1m22 0h1m19 0h1m61 0h1m37 0h1m10 0h1m19 0h2m78 0h1m31 0h1m8 0h1m2 0h1m10 0h1m40 0h1m5 0h2m8 0h1m17 0h1m10 0h1m2 0h1m16 0h1m28 0h1m7 0h1m9 0h1M33 206h3m17 0h1m18 0h1m10 0h1m1 0h1m9 0h1m31 0h1m10 0h1m11 0h1m18 0h1m13 0h1m8 0h1m10 0h1m56 0h1m6 0h1m5 0h1m4 0h1m37 0h1m10 0h1m7 0h1m12 0h1m5 0h1m33 0h1m12 0h1m22 0h2m20 0h1m1 0h1m33 0h1m55 0h1m29 0h1m10 0h2m29 0h1m6 0h1M34 207h1m16 0h1m1 0h1m2 0h1m63 0h1m3 0h1m6 0h1m4 0h1m10 0h1m7 0h1m9 0h1m6 0h1m3 0h1m42 0h2m34 0h1m17 0h1m35 0h1m2 0h1m101 0h1m13 0h1m2 0h1m43 0h1m14 0h1m1 0h1m2 0h1m8 0h1m29 0h1m12 0h1m7 0h2m7 0h1m48 0h1m5 0h1M57 208h1m3 0h1m6 0h2m7 0h1m1 0h1m3 0h1m17 0h1m39 0h1m4 0h1m1 0h1m41 0h1m9 0h1m77 0h1m38 0h1m4 0h1m23 0h1m42 0h1m9 0h1m24 0h1m4 0h1m3 0h1m30 0h1m5 0h1m1 0h2m17 0h1m3 0h1m21 0h1m9 0h1m15 0h1m15 0h2m2 0h1m7 0h1m28 0h1M35 209h1m8 0h1m2 0h1m13 0h1m78 0h1m31 0h1m28 0h1m22 0h1m33 0h1m1 0h1m1 0h1m19 0h1m12 0h1m5 0h1m9 0h1m5 0h1m27 0h1m81 0h1m12 0h1m4 0h1m4 0h1m20 0h1m7 0h1m9 0h1m57 0h1m39 0h1m3 0h1m10 0h1m6 0h1m1 0h1M36 210h1m63 0h1m8 0h1m85 0h2m30 0h1m25 0h1m35 0h1m93 0h1m3 0h1m14 0h1m2 0h1m40 0h1m28 0h1m1 0h1m16 0h1m6 0h1m9 0h1m22 0h1m2 0h1m4 0h1m62 0h1m1 0h1m10 0h1M28 211h1m3 0h1m12 0h1m6 0h1m5 0h1m7 0h1m49 0h1m45 0h1m3 0h1m17 0h1m18 0h1m23 0h1m29 0h1m20 0h1m3 0h1m7 0h1m2 0h1m53 0h1m22 0h1m20 0h1m79 0h1m21 0h2m1 0h1m10 0h1m13 0h1m15 0h1m8 0h1m7 0h1m4 0h1m13 0h1m32 0h1M37 212h1m21 0h1m24 0h1m9 0h1m11 0h1m4 0h1m25 0h1m12 0h1m15 0h1m36 0h1m3 0h1m2 0h1m24 0h1m17 0h1m24 0h1m47 0h1m13 0h1m6 0h1m49 0h1m58 0h1m5 0h1m2 0h2m76 0h1m15 0h1m5 0h1m20 0h2m4 0h1m14 0h1M20 213h1m27 0h1m14 0h1m1 0h1m19 0h1m6 0h1m67 0h1m16 0h1m7 0h1m6 0h1m13 0h1m24 0h1m2 0h1m13 0h1m66 0h1m15 0h1m1 0h1m9 0h1m9 0h1m9 0h1m2 0h1m1 0h1m6 0h1m2 0h1m95 0h1m28 0h1m17 0h1m23 0h1m9 0h1M32 214h1m5 0h1m8 0h1m5 0h1m1 0h1m11 0h1m55 0h1m43 0h1m3 0h1m2 0h1m16 0h1m12 0h1m8 0h1m14 0h1m8 0h1m9 0h1m18 0h1m26 0h1m19 0h1m3 0h1m11 0h1m55 0h1m3 0h1m2 0h1m5 0h1m87 0h1m3 0h1m11 0h1m20 0h1m31 0h1m13 0h1m1 0h1m1 0h1m8 0h1m13 0h1M22 215h1m20 0h1m17 0h1m3 0h1m52 0h1m21 0h1m1 0h1m10 0h1m1 0h1m19 0h1m22 0h1m3 0h1m20 0h1m10 0h1m17 0h1m25 0h1m14 0h1m35 0h1m5 0h1m12 0h1m15 0h1m7 0h1m18 0h1m15 0h1m8 0h1m11 0h1m9 0h1m26 0h1m2 0h1m10 0h1m37 0h1m14 0h1m12 0h2M30 216h1m15 0h1m2 0h1m11 0h1m7 0h1m20 0h1m3 0h1m11 0h1m4 0h1m1 0h1m5 0h1m5 0h1m33 0h1m7 0h1m23 0h1m9 0h1m25 0h1m33 0h1m10 0h1m77 0h1m40 0h1m10 0h1m24 0h1m27 0h1m4 0h1m12 0h1m34 0h1m11 0h1m17 0h1m30 0h1m32 0h1m8 0h1m3 0h1M39 217h1m19 0h1m2 0h1m10 0h2m32 0h2m84 0h1m3 0h1m14 0h1m2 0h1m41 0h1m15 0h1m9 0h1m25 0h2m10 0h1m1 0h1m37 0h1m4 0h1m56 0h1m6 0h1m9 0h1m16 0h1m20 0h1m14 0h1m23 0h1m26 0h1m4 0h1m6 0h1m15 0h1m28 0h1m11 0h1M20 218h1m9 0h1m5 0h1m1 0h1m2 0h1m3 0h1m36 0h1m1 0h1m7 0h1m26 0h2m20 0h1m6 0h1m41 0h1m26 0h1m5 0h1m9 0h1m21 0h1m39 0h1m32 0h1m21 0h1m15 0h1m7 0h1m16 0h1m8 0h1m4 0h1m28 0h1m10 0h1m41 0h1m4 0h1m2 0h1m2 0h1m6 0h1m13 0h1m29 0h1m6 0h1m1 0h1m13 0h1m26 0h1m19 0h1M20 219h1m64 0h1m8 0h1m45 0h1m21 0h1m15 0h1m4 0h1m5 0h1m5 0h1m24 0h1m8 0h1m28 0h1m9 0h1m3 0h1m12 0h1m14 0h1m25 0h1m23 0h1m2 0h1m4 0h1m3 0h1m17 0h2m30 0h1m5 0h1m3 0h1m13 0h1m15 0h1m5 0h1m27 0h1m58 0h1m11 0h1m12 0h2m1 0h1M35 220h1m2 0h1m3 0h1m6 0h1m4 0h1m39 0h1m4 0h1m12 0h1m59 0h1m16 0h1m52 0h1m16 0h1m18 0h1m8 0h1m18 0h1m22 0h1m48 0h1m7 0h1m19 0h1m4 0h1m9 0h1m15 0h1m5 0h1m84 0h1m2 0h1m59 0h1m4 0h1m3 0h1m4 0h1m5 0h1m7 0h1M42 221h1m17 0h2m39 0h1m17 0h1m34 0h2m6 0h1m8 0h1m57 0h1m1 0h1m3 0h1m17 0h1m82 0h1m28 0h1m3 0h1m33 0h1m4 0h1m17 0h1m10 0h1m2 0h1m20 0h1m37 0h1m119 0h1M38 222h1m13 0h1m45 0h2m9 0h1m16 0h1m6 0h1m93 0h1m6 0h1m27 0h1m15 0h1m9 0h1m25 0h1m51 0h1m6 0h1m20 0h1m25 0h2m16 0h1m7 0h1m3 0h1m51 0h1m34 0h2m65 0h1M32 223h1m8 0h1m1 0h1m2 0h1m14 0h1m19 0h1m6 0h2m14 0h1m6 0h1m4 0h1m4 0h1m14 0h1m14 0h1m3 0h1m4 0h1m5 0h1m10 0h1m23 0h1m6 0h1m16 0h1m10 0h1m7 0h1m4 0h1m15 0h1m6 0h1m22 0h1m29 0h1m8 0h1m65 0h1m15 0h2m8 0h1m3 0h1m7 0h1m8 0h1m67 0h1m8 0h2m30 0h1m22 0h1m16 0h1M52 224h1m45 0h1m1 0h1m23 0h1m22 0h1m3 0h1m24 0h1m31 0h1m24 0h1m4 0h1m31 0h1m25 0h1m7 0h1m3 0h1m34 0h1m17 0h1m14 0h1m10 0h1m8 0h1m10 0h1m4 0h1m3 0h1m9 0h1m20 0h1m7 0h1m27 0h1m5 0h1m48 0h1m2 0h1m2 0h1m13 0h1m4 0h1m1 0h1m20 0h1m4 0h1m19 0h1M52 225h1m20 0h1m8 0h1m9 0h1m31 0h1m2 0h1m30 0h1m23 0h2m1 0h1m11 0h1m42 0h1m55 0h1m8 0h1m49 0h1m8 0h1m1 0h1m16 0h1m10 0h1m3 0h1m73 0h1m18 0h1m22 0h1m22 0h1m34 0h1M39 226h1m26 0h1m33 0h1m29 0h1m15 0h1m26 0h2m26 0h1m27 0h1m39 0h1m9 0h1m9 0h1m1 0h1m7 0h1m12 0h1m9 0h1m9 0h1m2 0h1m3 0h1m8 0h1m25 0h1m6 0h1m37 0h1m7 0h1m23 0h1m3 0h1m3 0h1m2 0h1m2 0h1m24 0h1m2 0h1m20 0h1m10 0h1m13 0h1m6 0h1m12 0h1m11 0h1m33 0h1M33 227h1m7 0h1m6 0h1m7 0h1m1 0h1m11 0h1m9 0h1m2 0h1m1 0h1m17 0h1m14 0h1m18 0h1m5 0h1m22 0h1m46 0h1m7 0h1m42 0h1m3 0h2m5 0h1m9 0h1m19 0h1m1 0h1m3 0h1m37 0h1m34 0h1m38 0h1m24 0h1m5 0h1m2 0h1m35 0h1m14 0h1m4 0h1m6 0h1m3 0h1m13 0h1m42 0h1m14 0h1m10 0h1M39 228h2m10 0h1m29 0h1m10 0h1m7 0h1m1 0h1m5 0h1m20 0h1m14 0h1m19 0h1m23 0h1m9 0h1m41 0h1m15 0h1m53 0h1m3 0h1m17 0h1m12 0h1m10 0h1m11 0h1m28 0h1m3 0h1m19 0h1m14 0h1m17 0h1m26 0h1m4 0h1m12 0h1m16 0h1m6 0h1m29 0h1m23 0h1m3 0h1m29 0h1m3 0h1M29 229h1m6 0h1m5 0h1m3 0h1m9 0h1m14 0h1m80 0h1m5 0h2m2 0h1m103 0h1m7 0h1m8 0h1m58 0h1m51 0h1m16 0h1m34 0h1m2 0h1m5 0h1m3 0h1m8 0h1m39 0h1m29 0h1m3 0h1m12 0h1m10 0h1m8 0h1m15 0h1m1 0h1m1 0h1m18 0h1M67 230h1m1 0h1m3 0h1m16 0h1m18 0h3m1 0h1m23 0h1m2 0h1m10 0h1m3 0h2m10 0h1m7 0h1m23 0h1m5 0h1m22 0h1m55 0h1m1 0h1m6 0h1m25 0h1m4 0h2m15 0h2m1 0h1m15 0h2m44 0h1m43 0h1m7 0h1m11 0h1m5 0h1m2 0h1m1 0h1m23 0h1m7 0h1m3 0h1m12 0h1m11 0h1m6 0h1m5 0h1m9 0h1m5 0h1m13 0h1m11 0h1m4 0h1M24 231h1m35 0h1m20 0h1m2 0h2m6 0h1m9 0h1m27 0h1m5 0h1m5 0h1m10 0h1m6 0h1m5 0h1m18 0h1m13 0h2m22 0h1m4 0h1m33 0h1m7 0h1m19 0h1m18 0h1m38 0h1m9 0h1m4 0h1m37 0h2m6 0h1m17 0h1m58 0h1m8 0h1m46 0h1m2 0h1m5 0h1m7 0h1m11 0h1m15 0h1m4 0h1m7 0h1M31 232h2m95 0h1m18 0h1m11 0h1m2 0h1m32 0h1m25 0h1m13 0h1m27 0h1m42 0h1m12 0h1m13 0h1m14 0h1m23 0h1m34 0h1m33 0h1m2 0h1m7 0h1m17 0h1m35 0h1m11 0h1m3 0h1m4 0h1m75 0h1m15 0h1M26 233h1m7 0h1m59 0h1m11 0h1m61 0h1m14 0h1m16 0h1m23 0h2m32 0h1m28 0h1m27 0h1m15 0h1m28 0h1m14 0h1m18 0h1m3 0h1m2 0h1m12 0h1m12 0h1m11 0h1m8 0h1m37 0h1m9 0h1m18 0h1m26 0h1m45 0h1m7 0h1M48 234h1m6 0h1m8 0h1m26 0h1m29 0h1m24 0h1m36 0h1m1 0h1m8 0h1m33 0h1m14 0h1m6 0h1m11 0h1m22 0h1m34 0h1m35 0h1m11 0h1m13 0h1m40 0h1m11 0h1m6 0h1m4 0h1m57 0h1m9 0h1m30 0h1m9 0h1m56 0h1M52 235h1m7 0h1m5 0h1m13 0h1m1 0h1m55 0h1m5 0h1m41 0h2m12 0h2m58 0h1m15 0h1m10 0h1m26 0h1m18 0h1m42 0h1m7 0h1m40 0h1m27 0h1m12 0h1m3 0h2m2 0h1m15 0h1m23 0h1m10 0h1m33 0h1m27 0h1m16 0h1m2 0h1m2 0h1m4 0h1M40 236h1m28 0h1m22 0h1m20 0h1m1 0h1m8 0h1m11 0h1m3 0h1m33 0h1m25 0h1m24 0h1m12 0h1m1 0h1m30 0h2m20 0h1m66 0h1m37 0h1m23 0h1m3 0h1m14 0h1m27 0h1m9 0h1m12 0h1m46 0h1m1 0h1m17 0h1m7 0h1m31 0h1M45 237h1m45 0h1m6 0h1m40 0h1m24 0h1m70 0h1m7 0h1m6 0h1m54 0h1m24 0h1m7 0h1m7 0h1m17 0h1m35 0h1m32 0h1m39 0h1m5 0h1m29 0h1m5 0h1m26 0h1m7 0h1m4 0h1m14 0h1m25 0h1m1 0h1m3 0h1M41 238h1m17 0h1m9 0h1m2 0h1m5 0h1m2 0h1m25 0h1m13 0h1m6 0h1m14 0h1m9 0h1m15 0h1m15 0h1m31 0h1m27 0h1m3 0h1m74 0h1m31 0h1m18 0h1m11 0h1m2 0h1m14 0h1m4 0h1m79 0h1m2 0h1m8 0h1m5 0h1m15 0h1m73 0h1M66 239h1m43 0h1m5 0h1m16 0h1m18 0h1m3 0h1m29 0h2m2 0h1m40 0h1m15 0h1m3 0h1m20 0h1m22 0h1m20 0h1m4 0h1m13 0h1m11 0h1m51 0h1m25 0h1m6 0h1m6 0h1m12 0h2m13 0h1m5 0h1m5 0h1m45 0h1m7 0h1m8 0h1m22 0h1m24 0h1m14 0h1m2 0h1m6 0h1M40 240h1m7 0h1m15 0h1m2 0h1m11 0h1m19 0h1m10 0h1m35 0h1m5 0h1m3 0h1m6 0h1m37 0h1m10 0h1m18 0h1m24 0h1m24 0h2m18 0h1m32 0h1m11 0h1m26 0h1m24 0h1m8 0h1m2 0h1m45 0h1m33 0h1m1 0h1m16 0h1m27 0h1m29 0h1m15 0h2m5 0h1M23 241h1m66 0h1m24 0h1m42 0h1m26 0h1m54 0h1m29 0h1m96 0h1m7 0h2m3 0h1m78 0h1m39 0h1m13 0h1m51 0h1m38 0h1m1 0h1M37 242h1m5 0h1m6 0h1m13 0h1m23 0h1m9 0h1m7 0h1m5 0h1m2 0h1m19 0h1m32 0h1m51 0h1m64 0h1m28 0h1m9 0h1m11 0h1m19 0h1m6 0h1m22 0h1m6 0h1m2 0h1m37 0h1m3 0h1m45 0h1m44 0h1m11 0h1m14 0h1m28 0h1M22 243h1m20 0h1m15 0h1m1 0h1m1 0h1m5 0h1m13 0h2m38 0h1m38 0h1m22 0h1m1 0h1m5 0h1m16 0h1m1 0h1m10 0h1m17 0h1m2 0h1m16 0h1m44 0h1m30 0h1m69 0h1m31 0h1m30 0h1m22 0h1m20 0h1m4 0h1m3 0h1m14 0h1m1 0h1m3 0h1m13 0h1m14 0h1m37 0h1M34 244h1m7 0h1m10 0h1m24 0h1m47 0h1m25 0h1m79 0h1m53 0h2m3 0h1m44 0h1m4 0h1m5 0h1m6 0h1m6 0h1m35 0h1m6 0h1m14 0h1m28 0h1m31 0h1m5 0h1m22 0h1m26 0h1m12 0h1m5 0h1m20 0h1m3 0h1m13 0h1m19 0h1m3 0h1M22 245h1m16 0h1m34 0h1m7 0h1m24 0h1m1 0h1m11 0h1m2 0h1m17 0h1m7 0h1m2 0h1m8 0h1m5 0h1m28 0h1m14 0h1m69 0h1m28 0h1m24 0h1m16 0h1m42 0h1m44 0h1m68 0h1m17 0h2m23 0h1m3 0h1m39 0h1M25 246h1m20 0h1m13 0h1m8 0h1m14 0h1m18 0h1m19 0h1m41 0h1m28 0h1m78 0h1m32 0h1m2 0h1m4 0h1m31 0h1m14 0h2m55 0h1m18 0h1m34 0h1m13 0h1m11 0h1m15 0h3m16 0h1m1 0h1m2 0h1m2 0h1m6 0h1m13 0h1m2 0h2m16 0h1m5 0h1m26 0h1M80 247h1m21 0h1m9 0h1m5 0h1m3 0h1m21 0h1m25 0h1m9 0h2m62 0h1m9 0h1m13 0h1m37 0h1m3 0h1m5 0h1m46 0h1m38 0h1m41 0h1m18 0h1m31 0h1m11 0h1m47 0h1m5 0h1m6 0h1m5 0h2m14 0h1m8 0h1m8 0h1m5 0h1M31 248h1m6 0h1m38 0h1m5 0h1m9 0h1m21 0h1m28 0h1m27 0h1m15 0h1m24 0h1m3 0h1m18 0h1m51 0h1m32 0h1m16 0h1m22 0h1m14 0h1m26 0h1m41 0h1m8 0h3m1 0h1m14 0h1m20 0h1m2 0h1m4 0h1m19 0h1m4 0h1m32 0h1m45 0h1M30 249h1m7 0h1m32 0h1m19 0h1m31 0h1m25 0h1m6 0h1m10 0h1m35 0h1m42 0h1m7 0h1m31 0h1m3 0h1m13 0h1m49 0h1m6 0h1m8 0h1m13 0h1m7 0h1m1 0h1m18 0h1m33 0h1m7 0h1m20 0h1m15 0h1m7 0h1m12 0h1m64 0h1m14 0h1m9 0h1M45 250h2m6 0h1m13 0h1m21 0h1m6 0h1m23 0h2m22 0h1m2 0h1m6 0h1m1 0h1m1 0h1m2 0h1m17 0h1m12 0h1m16 0h1m3 0h1m10 0h1m5 0h1m6 0h1m79 0h1m26 0h1m67 0h1m27 0h1m5 0h1m59 0h1m21 0h1m12 0h1m15 0h1m4 0h1m2 0h1m7 0h1m17 0h1M37 251h1m5 0h1m66 0h1m13 0h1m14 0h1m2 0h1m18 0h1m84 0h1m16 0h1m16 0h1m9 0h1m2 0h1m7 0h1m2 0h1m25 0h1m9 0h1m7 0h1m52 0h1m4 0h1m54 0h1m43 0h1m28 0h1m1 0h1m46 0h1m2 0h1M42 252h1m8 0h1m15 0h1m26 0h2m9 0h1m16 0h2m13 0h1m7 0h1m15 0h1m11 0h1m71 0h1m29 0h1m8 0h1m25 0h1m2 0h1m4 0h1m1 0h1m4 0h1m16 0h1m34 0h1m2 0h1m33 0h1m37 0h1m21 0h1m3 0h2m37 0h1m1 0h1m49 0h1m25 0h1m7 0h1m3 0h1m8 0h1M28 253h1m10 0h1m3 0h1m31 0h1m26 0h1m8 0h1m23 0h1m35 0h1m28 0h1m34 0h1m4 0h1m12 0h1m2 0h1m9 0h1m49 0h1m25 0h1m17 0h1m23 0h1m35 0h1m22 0h1m23 0h1m74 0h1m2 0h1m2 0h1m10 0h1m3 0h1m15 0h1m1 0h1M25 254h1m58 0h1m26 0h1m1 0h1m24 0h1m21 0h1m30 0h1m51 0h1m23 0h1m3 0h1m3 0h1m1 0h1m13 0h1m11 0h1m7 0h1m8 0h1m2 0h1m5 0h1m18 0h1m21 0h1m2 0h1m24 0h1m18 0h1m7 0h1m1 0h2m28 0h1m20 0h1m12 0h1m73 0h1M20 255h1m11 0h1m6 0h1m2 0h1m33 0h1m4 0h1m63 0h1m64 0h1m34 0h1m9 0h1m2 0h1m9 0h1m5 0h1m21 0h1m1 0h1m3 0h1m4 0h2m6 0h1m45 0h1m36 0h1m75 0h1m72 0h1m30 0h1m31 0h1m6 0h1m1 0h1M39 256h1m40 0h1m8 0h1m17 0h1m2 0h1m55 0h1m23 0h1m42 0h1m70 0h1m9 0h1m10 0h1m5 0h1m4 0h1m5 0h1m6 0h2m8 0h2m2 0h1m18 0h1m11 0h1m1 0h1m7 0h1m1 0h1m1 0h1m2 0h2m1 0h1m23 0h1m54 0h1m14 0h1m12 0h2m35 0h1m52 0h1m3 0h1M31 257h1m21 0h1m2 0h1m4 0h1m24 0h1m20 0h1m40 0h1m9 0h1m8 0h1m12 0h1m5 0h1m11 0h1m13 0h1m6 0h1m7 0h1m13 0h1m3 0h1m37 0h1m31 0h1m49 0h2m18 0h1m9 0h1m11 0h1m12 0h2m11 0h1m3 0h1m39 0h1m38 0h1m2 0h1m18 0h1m47 0h1m22 0h1M22 258h1m30 0h1m5 0h1m2 0h1m13 0h1m2 0h1m4 0h1m16 0h1m22 0h1m14 0h1m11 0h1m6 0h1m3 0h1m5 0h1m60 0h1m22 0h1m12 0h1m1 0h1m11 0h1m9 0h1m27 0h1m12 0h2m1 0h1m7 0h1m9 0h1m30 0h1m44 0h1m3 0h1m7 0h1m13 0h1m25 0h1m13 0h1m10 0h1m4 0h1m6 0h1m23 0h1m3 0h1m21 0h1m45 0h1m5 0h1M22 259h2m3 0h1m1 0h1m3 0h1m6 0h1m7 0h1m28 0h1m44 0h1m15 0h1m7 0h1m7 0h1m57 0h1m1 0h1m19 0h1m13 0h1m24 0h1m38 0h1m5 0h1m7 0h1m4 0h1m24 0h2m20 0h1m9 0h1m21 0h1m44 0h1m4 0h1m55 0h1m10 0h1m4 0h1m25 0h1m36 0h1M20 260h1m8 0h1m17 0h1m40 0h1m3 0h1m14 0h1m4 0h1m62 0h2m3 0h1m44 0h1m7 0h1m6 0h1m9 0h1m14 0h1m27 0h1m1 0h1m10 0h1m5 0h1m18 0h1m6 0h1m8 0h1m9 0h1m24 0h1m9 0h1m16 0h1m10 0h2m7 0h1m2 0h1m6 0h1m24 0h1m9 0h1m26 0h1m25 0h1m7 0h1m13 0h1m49 0h1m8 0h1M30 261h1m25 0h1m2 0h1m7 0h1m8 0h1m14 0h1m7 0h2m2 0h1m4 0h1m4 0h1m6 0h1m20 0h1m8 0h1m3 0h1m7 0h1m62 0h1m29 0h1m2 0h1m18 0h1m4 0h1m13 0h1m29 0h1m5 0h1m8 0h1m2 0h2m19 0h1m72 0h1m45 0h1m63 0h1m10 0h1M27 262h1m6 0h1m34 0h1m1 0h1m1 0h1m38 0h1m12 0h1m31 0h1m9 0h1m8 0h2m11 0h1m8 0h1m18 0h1m4 0h2m3 0h1m21 0h2m9 0h1m15 0h1m35 0h1m22 0h1m63 0h1m14 0h1m9 0h1m24 0h1m8 0h1m9 0h1m2 0h1m18 0h1m18 0h1m45 0h1m22 0h2m16 0h1m14 0h1M23 263h1m10 0h1m35 0h1m23 0h1m27 0h1m5 0h1m23 0h1m22 0h1m4 0h1m1 0h1m10 0h1m41 0h1m19 0h1m11 0h1m15 0h1m4 0h1m13 0h1m28 0h2m11 0h1m30 0h1m6 0h1m49 0h1m9 0h2m4 0h1m21 0h1m28 0h2m1 0h1m8 0h1m38 0h1m14 0h1m7 0h1m40 0h2M25 264h1m10 0h1m70 0h1m30 0h2m2 0h1m9 0h2m8 0h1m7 0h1m67 0h1m24 0h1m2 0h1m17 0h1m7 0h1m14 0h1m33 0h1m3 0h1m10 0h1m11 0h1m4 0h1m50 0h1m1 0h1m32 0h1m1 0h1m13 0h1m9 0h1m34 0h1m34 0h1m11 0h1m20 0h1m28 0h1M31 265h1m9 0h1m1 0h1m67 0h1m60 0h1m2 0h1m3 0h1m37 0h1m29 0h1m3 0h1m123 0h1m53 0h1m15 0h1m26 0h1m5 0h1m2 0h1m5 0h1m10 0h1m3 0h1m1 0h1m21 0h1m2 0h1m10 0h1m32 0h1m9 0h1m9 0h1M79 266h2m33 0h1m55 0h1m12 0h1m8 0h2m26 0h1m40 0h1m16 0h1m5 0h1m12 0h1m21 0h1m10 0h1m36 0h1m22 0h1m77 0h1m3 0h1m10 0h1m36 0h1m4 0h1m47 0h2m25 0h1M21 267h1m53 0h1m19 0h1m37 0h1m61 0h1m6 0h1m11 0h1m4 0h1m16 0h1m8 0h1m23 0h1m4 0h1m9 0h2m27 0h1m28 0h1m5 0h1m33 0h1m19 0h1m23 0h1m1 0h1m7 0h1m77 0h1m10 0h1m55 0h1m6 0h2m12 0h1M24 268h1m16 0h1m15 0h1m1 0h1m33 0h1m29 0h1m1 0h1m22 0h1m4 0h1m54 0h1m21 0h1m15 0h1m39 0h1m8 0h1m32 0h1m31 0h1m94 0h1m40 0h1m46 0h1m8 0h1m7 0h1m27 0h1m15 0h1M57 269h1m2 0h1m2 0h1m37 0h1m11 0h1m29 0h1m106 0h2m23 0h1m48 0h1m108 0h1m47 0h1m18 0h1m8 0h1m1 0h1m20 0h1m13 0h1m24 0h1m7 0h1M25 270h1m5 0h1m63 0h1m6 0h1m82 0h1m16 0h1m61 0h1m53 0h1m2 0h1m10 0h1m93 0h1m67 0h1m60 0h1m25 0h1m33 0h1M43 271h1m30 0h1m17 0h1m3 0h1m142 0h1m4 0h1m30 0h1m162 0h1m3 0h1m10 0h1m18 0h1m7 0h1m84 0h1m11 0h1M72 272h1m151 0h1m77 0h1m26 0h1m63 0h1m4 0h1m74 0h1m24 0h1m10 0h1m7 0h1m21 0h1M66 273h1m16 0h1m8 0h1m9 0h1m22 0h1m28 0h1m22 0h1m2 0h1m98 0h1m169 0h1m7 0h1m56 0h1M32 274h1m28 0h1m319 0h1m137 0h1m1 0h1m84 0h1M159 275h1m191 0h1m167 0h1m33 0h1M69 276h1m34 0h1m121 0h1m31 0h1m245 0h1M20 278h1m40 0h1m521 0h1M105 279h1m1 0h1m163 0h1m156 0h1M544 280h1M544 281h1M56 282h1m14 0h1M51 284h1M50 285h1"/>
<path stroke="#00005a" d="M81 176h1M56 178h1m50 0h1M362 179h1M87 180h1M339 182h1m159 0h1M103 183h1M89 184h1m73 0h1M57 185h1m406 0h1m75 0h1M47 186h1m12 0h1m6 0h1m4 0h1m25 0h1m106 0h1M70 187h1m25 0h1m176 0h1m96 0h1m14 0h1m157 0h1M52 188h1m53 0h1m316 0h1m17 0h1m43 0h1M42 189h1m149 0h1m392 0h1M20 190h1m160 0h1m31 0h1m57 0h1m119 0h1m77 0h1m82 0h1M68 191h1m29 0h1m4 0h1m3 0h1m66 0h1m113 0h1m103 0h1m62 0h1m143 0h1M52 192h1m10 0h1m26 0h1m10 0h1m2 0h1m29 0h1m64 0h1m15 0h1m10 0h1m140 0h1m97 0h1m96 0h1M52 193h1m27 0h1m6 0h1m147 0h1m18 0h1m23 0h1m38 0h1m195 0h1m15 0h1m8 0h1m51 0h1M23 194h1m41 0h1m7 0h1m14 0h2m70 0h1m31 0h1m120 0h1m9 0h1m45 0h1m70 0h1m38 0h1m72 0h1m5 0h1M41 195h1m38 0h1m31 0h1m7 0h1m36 0h1m55 0h1m29 0h1m13 0h1m43 0h1m64 0h2m45 0h1m65 0h1m24 0h1m6 0h1m14 0h1m4 0h1m62 0h1M37 196h1m22 0h1m8 0h1m7 0h1m16 0h1m16 0h1m60 0h1m9 0h1m23 0h1m28 0h1m29 0h1m4 0h1m22 0h1m62 0h1m94 0h1m49 0h1m54 0h1m36 0h1m14 0h1M30 197h1m48 0h1m30 0h1m45 0h1m17 0h1m12 0h1m16 0h1m27 0h1m37 0h1m29 0h1m6 0h1m36 0h1m2 0h1m2 0h1m17 0h1m19 0h1m16 0h1m5 0h1m7 0h1m30 0h1m15 0h1m8 0h1m11 0h1m10 0h1m7 0h1m88 0h1m3 0h1m16 0h1M39 198h1m4 0h1m25 0h1m31 0h1m2 0h1m1 0h2m18 0h1m12 0h1m15 0h1m5 0h1m56 0h1m13 0h1m29 0h1m6 0h1m28 0h1m4 0h1m27 0h1m16 0h1m54 0h1m20 0h1m56 0h1m6 0h1m20 0h1M105 199h1m4 0h1m26 0h1m61 0h1m20 0h1m92 0h1m12 0h1m26 0h1m4 0h1m4 0h1m134 0h1m28 0h1m8 0h1m46 0h1M47 200h1m18 0h1m23 0h1m19 0h1m1 0h1m11 0h1m15 0h1m14 0h1m12 0h1m5 0h1m16 0h1m2 0h1m5 0h1m37 0h1m36 0h1m5 0h1m1 0h1m144 0h1m1 0h1m20 0h1m85 0h1m61 0h1M74 201h1m33 0h1m68 0h1m17 0h1m27 0h1m6 0h1m79 0h1m23 0h1m54 0h1m42 0h1m5 0h1m18 0h1m26 0h1m9 0h1m1 0h1m2 0h1m8 0h1m58 0h1m12 0h1m19 0h1M51 202h1m16 0h1m13 0h1m35 0h1m25 0h2m8 0h1m15 0h1m31 0h1m12 0h1m7 0h1m30 0h1m7 0h1m10 0h1m9 0h1m87 0h1m28 0h1m21 0h1m12 0h1m6 0h1m31 0h1m36 0h1m6 0h1m50 0h1m34 0h1M32 203h2m20 0h1m16 0h1m77 0h1m20 0h1m11 0h1m1 0h1m17 0h1m32 0h1m9 0h1m15 0h1m13 0h1m2 0h1m8 0h1m30 0h1m12 0h1m12 0h1m14 0h1m21 0h1m22 0h1m18 0h1m16 0h1m46 0h1m7 0h1m25 0h1m7 0h1m46 0h1m9 0h1M37 204h1m6 0h1m49 0h1m47 0h1m17 0h1m7 0h1m16 0h2m20 0h1m1 0h1m18 0h1m30 0h1m19 0h1m10 0h1m13 0h1m59 0h1m1 0h1m18 0h1m11 0h1m1 0h1m25 0h1m3 0h1m29 0h1m42 0h1m22 0h1m4 0h1m30 0h1m33 0h1m11 0h1M76 205h1m1 0h1m29 0h1m14 0h1m7 0h1m19 0h1m26 0h1m35 0h2m16 0h1m1 0h2m5 0h1m6 0h2m70 0h1m27 0h1m31 0h1m20 0h3m15 0h1m1 0h1m18 0h1m19 0h2m1 0h1m12 0h1m11 0h1m8 0h1m66 0h2m2 0h1M23 206h1m2 0h1m40 0h1m7 0h1m16 0h2m26 0h1m5 0h1m18 0h1m18 0h1m41 0h1m13 0h1m47 0h1m73 0h1m8 0h1m40 0h1m1 0h1m33 0h1m3 0h1m24 0h1m22 0h2m4 0h1m18 0h1m11 0h1m11 0h1m21 0h1m34 0h1m5 0h1m8 0h1M25 207h1m16 0h1m5 0h1m10 0h1m4 0h1m84 0h1m4 0h1m18 0h1m8 0h1m19 0h1m6 0h1m6 0h1m21 0h1m7 0h2m40 0h1m41 0h1m39 0h1m4 0h1m13 0h1m18 0h1m28 0h1m10 0h1m1 0h1m32 0h1m29 0h1m24 0h1m9 0h1m13 0h1m17 0h1m8 0h1m13 0h1m3 0h1M43 208h1m3 0h2m26 0h1m12 0h1m20 0h1m63 0h1m30 0h1m8 0h1m6 0h1m7 0h1m30 0h1m6 0h2m29 0h1m6 0h1m51 0h1m4 0h1m2 0h1m3 0h1m9 0h1m15 0h1m2 0h1m24 0h1m34 0h1m44 0h1m12 0h1m103 0h1M25 209h1m25 0h1m7 0h1m32 0h1m16 0h3m22 0h1m4 0h1m58 0h1m45 0h2m19 0h1m13 0h1m6 0h1m42 0h1m9 0h1m51 0h1m6 0h1m27 0h1m7 0h1m18 0h1m18 0h1m9 0h2m15 0h1m54 0h1m8 0h2m9 0h1m8 0h1M35 210h1m3 0h1m6 0h1m2 0h1m12 0h1m32 0h1m6 0h1m8 0h1m4 0h1m16 0h1m5 0h1m9 0h1m8 0h1m3 0h1m83 0h1m17 0h1m4 0h2m21 0h1m7 0h1m7 0h1m2 0h1m26 0h1m12 0h1m28 0h1m11 0h1m50 0h1m6 0h1m13 0h1m4 0h1m1 0h1m10 0h1m19 0h1m32 0h1M20 211h1m5 0h1m12 0h1m4 0h1m57 0h2m3 0h1m35 0h1m37 0h1m6 0h1m8 0h1m3 0h1m14 0h1m50 0h1m41 0h1m1 0h1m34 0h1m22 0h1m47 0h1m30 0h1m24 0h1m9 0h1m4 0h1m11 0h1m57 0h1m52 0h1m2 0h1M24 212h1m8 0h1m15 0h1m4 0h1m3 0h1m39 0h1m77 0h1m124 0h1m2 0h1m45 0h1m43 0h1m27 0h1m40 0h2m10 0h1m11 0h1m29 0h1m57 0h1m1 0h1m16 0h1m8 0h1m2 0h1m10 0h2M75 213h1m3 0h1m17 0h1m7 0h1m20 0h2m7 0h1m6 0h1m31 0h1m16 0h1m12 0h1m13 0h1m6 0h1m32 0h1m13 0h1m2 0h1m13 0h1m11 0h1m10 0h1m26 0h1m5 0h1m26 0h2m3 0h1m15 0h1m15 0h1m83 0h1m16 0h1m14 0h1m16 0h1m13 0h1m51 0h1M31 214h1m24 0h1m6 0h2m31 0h1m11 0h1m2 0h1m9 0h1m5 0h1m10 0h1m3 0h1m29 0h1m33 0h1m8 0h1m20 0h1m33 0h1m41 0h1m13 0h2m38 0h1m32 0h1m3 0h1m34 0h1m14 0h2m9 0h1m15 0h2m19 0h1m9 0h1m35 0h1m43 0h1m15 0h1M60 215h1m40 0h1m6 0h1m81 0h1m18 0h1m3 0h1m6 0h1m71 0h1m21 0h1m58 0h1m69 0h1m3 0h1m5 0h1m45 0h1m3 0h1m23 0h1m31 0h1m20 0h1m1 0h1m29 0h1M44 216h1m3 0h1m11 0h1m32 0h1m16 0h1m5 0h1m88 0h1m5 0h1m9 0h1m17 0h1m31 0h1m23 0h1m10 0h1m32 0h1m12 0h1m3 0h1m6 0h1m3 0h1m39 0h1m14 0h1m42 0h1m108 0h1m9 0h1m16 0h1m5 0h1m1 0h2M57 217h1m7 0h1m32 0h1m12 0h1m21 0h1m1 0h1m54 0h1m77 0h1m75 0h1m1 0h1m2 0h1m43 0h1m5 0h1m9 0h1m4 0h1m74 0h1m14 0h1m38 0h1m75 0h1M28 218h1m20 0h1m46 0h1m4 0h1m3 0h1m10 0h1m1 0h1m37 0h1m11 0h1m3 0h1m9 0h1m37 0h1m6 0h1m24 0h1m16 0h1m82 0h1m41 0h1m21 0h1m16 0h1m2 0h1m9 0h1m42 0h1m9 0h1m25 0h1m25 0h2m40 0h1m11 0h1m5 0h1M25 219h1m3 0h1m3 0h1m19 0h1m11 0h1m22 0h1m4 0h1m22 0h1m9 0h1m28 0h2m78 0h1m18 0h2m5 0h1m22 0h1m32 0h1m18 0h1m12 0h1m107 0h1m4 0h1m12 0h1m14 0h1m4 0h1m36 0h1m25 0h1m22 0h1m17 0h1M36 220h1m22 0h1m16 0h1m1 0h1m49 0h1m23 0h1m30 0h1m38 0h1m11 0h1m10 0h1m3 0h3m64 0h1m24 0h1m50 0h1m19 0h1m10 0h1m6 0h1m64 0h1m27 0h1m26 0h1m4 0h2m4 0h1m3 0h1m38 0h1M27 221h1m17 0h1m16 0h1m12 0h1m46 0h1m63 0h1m3 0h1m6 0h1m3 0h1m77 0h1m49 0h1m5 0h1m44 0h2m13 0h1m39 0h1m15 0h1m4 0h1m13 0h1m1 0h1m9 0h1m31 0h1m8 0h1m50 0h1m5 0h1m3 0h1M30 222h1m11 0h1m63 0h1m5 0h1m23 0h1m12 0h1m6 0h1m14 0h1m25 0h1m7 0h1m22 0h1m4 0h1m18 0h1m50 0h1m26 0h1m32 0h1m3 0h1m24 0h1m14 0h1m23 0h1m4 0h1m11 0h1m14 0h1m2 0h1m16 0h1m17 0h1m61 0h1m47 0h1M20 223h1m7 0h1m15 0h1m3 0h1m5 0h1m22 0h1m24 0h1m4 0h1m12 0h1m54 0h1m38 0h1m30 0h1m9 0h1m18 0h1m9 0h1m4 0h1m3 0h1m3 0h1m7 0h1m8 0h1m32 0h1m3 0h1m27 0h1m28 0h1m45 0h2m109 0h1m29 0h1M26 224h1m11 0h1m8 0h2m34 0h1m7 0h1m11 0h1m1 0h1m5 0h1m2 0h1m5 0h1m28 0h1m3 0h1m16 0h1m44 0h1m5 0h1m8 0h1m32 0h1m14 0h1m1 0h1m2 0h1m9 0h1m9 0h1m5 0h1m2 0h1m6 0h1m78 0h1m31 0h1m7 0h1m38 0h1m6 0h1m18 0h1m7 0h1m5 0h1m29 0h1m46 0h1m3 0h1M28 225h1m47 0h1m32 0h1m21 0h1m15 0h1m142 0h1m87 0h2m8 0h1m25 0h1m42 0h1m22 0h1m64 0h1m21 0h1m9 0h1m24 0h1M22 226h1m27 0h1m9 0h1m12 0h1m31 0h1m15 0h1m41 0h1m1 0h1m1 0h1m4 0h1m14 0h1m66 0h1m33 0h1m44 0h1m15 0h1m44 0h1m31 0h1m16 0h1m13 0h1m19 0h1m48 0h1m10 0h1m3 0h1m2 0h1m18 0h1m1 0h2m1 0h1m4 0h1m6 0h1m20 0h1m5 0h1M59 227h1m22 0h1m3 0h2m16 0h1m9 0h1m33 0h1m33 0h1m9 0h1m5 0h1m7 0h1m76 0h1m25 0h1m44 0h1m18 0h1m19 0h1m20 0h1m11 0h2m4 0h1m49 0h1m40 0h1m3 0h1m33 0h1m30 0h3m5 0h1m18 0h1M21 228h1m15 0h1m18 0h1m49 0h1m41 0h1m38 0h1m61 0h1m16 0h1m8 0h1m166 0h2m61 0h1m36 0h1m8 0h1m9 0h1m13 0h1M54 229h1m36 0h1m16 0h1m1 0h1m42 0h1m1 0h1m18 0h1m18 0h1m6 0h1m3 0h1m74 0h1m18 0h1m10 0h1m8 0h1m48 0h1m4 0h1m8 0h1m4 0h1m2 0h1m42 0h1m30 0h1m12 0h1m40 0h1m25 0h1m12 0h1m1 0h1m24 0h1m35 0h1M25 230h1m7 0h1m17 0h1m7 0h1m62 0h1m1 0h1m38 0h1m5 0h1m16 0h1m29 0h1m50 0h1m62 0h1m50 0h1m10 0h1m12 0h1m5 0h1m35 0h1m32 0h1m3 0h1m31 0h1m49 0h2m33 0h1m6 0h1M37 231h1m70 0h1m30 0h1m6 0h2m26 0h1m31 0h1m11 0h1m7 0h1m4 0h1m4 0h1m79 0h1m65 0h1m6 0h2m13 0h1m7 0h1m19 0h2m62 0h1m28 0h1m70 0h1M36 232h1m13 0h1m17 0h1m1 0h2m35 0h1m118 0h1m24 0h1m1 0h1m14 0h1m4 0h1m66 0h1m16 0h1m10 0h1m5 0h1m15 0h2m3 0h1m30 0h1m105 0h1m6 0h1m20 0h1M32 233h1m58 0h1m20 0h1m2 0h1m26 0h1m31 0h1m94 0h1m49 0h2m7 0h1m68 0h1m8 0h1m40 0h1m36 0h1m42 0h1m7 0h1m3 0h1m40 0h3m29 0h1M21 234h1m11 0h1m20 0h1m4 0h1m29 0h1m11 0h1m8 0h1m51 0h1m8 0h2m28 0h1m15 0h1m4 0h1m9 0h1m24 0h1m2 0h1m41 0h1m44 0h1m28 0h1m2 0h1m8 0h1m26 0h1m32 0h1m33 0h1m81 0h1M25 235h1m51 0h1m3 0h1m67 0h1m15 0h1m59 0h1m7 0h1m4 0h1m40 0h1m26 0h1m13 0h1m16 0h1m45 0h1m4 0h1m6 0h1m10 0h1m39 0h1m2 0h1m25 0h1m55 0h1m12 0h1m20 0h1m9 0h1m10 0h1m32 0h1M35 236h1m2 0h1m5 0h1m4 0h1m54 0h1m55 0h1m7 0h1m10 0h1m37 0h1m3 0h1m13 0h1m19 0h2m95 0h1m20 0h1m30 0h1m8 0h1m3 0h1m26 0h1m8 0h1m17 0h1m21 0h1m7 0h1m9 0h1m1 0h1m1 0h1m16 0h1m1 0h1m11 0h1m30 0h1M40 237h1m38 0h1m17 0h1m57 0h1m9 0h1m9 0h1m43 0h1m10 0h2m10 0h1m1 0h1m4 0h1m52 0h1m16 0h1m27 0h1m66 0h2m51 0h1m3 0h1m42 0h1m11 0h1m51 0h1M31 238h1m15 0h1m53 0h1m8 0h1m98 0h1m21 0h1m6 0h1m15 0h1m9 0h1m2 0h1m14 0h1m27 0h1m16 0h1m4 0h1m49 0h1m64 0h1m24 0h1m9 0h1m14 0h1m87 0h1m15 0h1m4 0h1m1 0h1m4 0h1m1 0h1M24 239h1m18 0h1m23 0h1m4 0h1m24 0h1m28 0h1m1 0h1m25 0h1m41 0h1m21 0h1m6 0h1m12 0h1m3 0h1m2 0h1m17 0h1m3 0h2m76 0h1m21 0h1m45 0h1m7 0h1m20 0h1m11 0h2m78 0h2m13 0h1m24 0h1M42 240h1m15 0h1m10 0h1m23 0h1m33 0h1m25 0h1m60 0h1m26 0h1m46 0h1m32 0h1m5 0h1m42 0h1m22 0h1m5 0h1m26 0h1m23 0h1m33 0h1m4 0h1m5 0h1m3 0h1m21 0h1m18 0h1m57 0h1m17 0h1M47 241h1m22 0h1m10 0h1m4 0h1m22 0h1m135 0h1m3 0h1m49 0h1m5 0h1m31 0h2m23 0h1m7 0h1m3 0h1m6 0h1m7 0h1m1 0h1m10 0h1m40 0h1m12 0h1m49 0h1m5 0h1m5 0h1m20 0h1m5 0h1m21 0h1m21 0h2m25 0h1M56 242h1m14 0h1m25 0h1m90 0h1m34 0h1m38 0h1m18 0h1m34 0h1m5 0h1m2 0h1m7 0h1m33 0h1m22 0h1m14 0h1m19 0h1m14 0h1m5 0h1m14 0h1m14 0h1m34 0h1m4 0h1m6 0h1m8 0h1m58 0h1m1 0h1M47 243h1m6 0h1m2 0h1m2 0h1m12 0h1m4 0h1m6 0h1m56 0h1m51 0h1m23 0h1m7 0h1m1 0h1m44 0h1m35 0h1m11 0h1m12 0h1m11 0h1m6 0h1m6 0h1m9 0h1m30 0h1m12 0h1m11 0h1m63 0h1m33 0h1m2 0h1m61 0h1m19 0h1m3 0h1m5 0h1M61 244h1m14 0h1m11 0h1m71 0h1m5 0h1m9 0h1m33 0h1m5 0h1m18 0h1m6 0h1m2 0h1m16 0h1m54 0h1m5 0h1m8 0h1m22 0h1m11 0h1m21 0h1m54 0h1m59 0h1m47 0h1m14 0h1m14 0h1m15 0h2m17 0h1M34 245h1m13 0h1m6 0h1m8 0h1m41 0h1m3 0h1m1 0h1m17 0h1m15 0h1m2 0h1m14 0h1m56 0h1m8 0h1m12 0h1m9 0h1m14 0h1m6 0h1m25 0h1m32 0h1m52 0h1m11 0h1m5 0h1m12 0h1m54 0h1m11 0h1m2 0h1m5 0h1m65 0h1m37 0h1M171 246h1m55 0h2m4 0h1m29 0h1m13 0h1m15 0h1m8 0h1m12 0h1m22 0h1m5 0h1m27 0h1m17 0h1m50 0h2m6 0h1m56 0h1m2 0h1m14 0h1m80 0h1M21 247h1m5 0h1m17 0h1m1 0h1m43 0h1m15 0h1m27 0h1m2 0h1m10 0h1m2 0h1m37 0h2m26 0h1m24 0h1m6 0h1m16 0h1m69 0h1m14 0h1m50 0h1m45 0h1m49 0h1M47 248h1m16 0h1m2 0h1m22 0h1m77 0h1m43 0h1m26 0h1m14 0h1m56 0h1m13 0h1m1 0h1m23 0h1m3 0h1m45 0h1m3 0h1m33 0h1m1 0h1m9 0h1m20 0h1m2 0h1m13 0h1m8 0h1m4 0h1m9 0h1m2 0h1m25 0h1m52 0h1m1 0h1M47 249h1m9 0h1m8 0h1m112 0h1m3 0h2m1 0h1m42 0h1m36 0h1m7 0h1m22 0h1m12 0h1m11 0h1m91 0h1m7 0h1m42 0h1m6 0h1m25 0h1m7 0h2m44 0h1m5 0h1m4 0h1M34 250h1m13 0h1m6 0h1m29 0h1m22 0h1m43 0h1m6 0h1m13 0h1m6 0h1m6 0h1m37 0h1m133 0h1m6 0h1m4 0h1m23 0h1m10 0h2m7 0h1m3 0h1m5 0h1m9 0h1m15 0h1m29 0h1m13 0h1m7 0h1m49 0h1m1 0h2m28 0h1m11 0h1m14 0h1m1 0h1m3 0h1M22 251h1m18 0h1m23 0h1m18 0h1m27 0h1m28 0h1m30 0h1m11 0h1m44 0h1m27 0h1m25 0h1m29 0h1m11 0h2m63 0h1m30 0h1m11 0h1m16 0h1m6 0h1m23 0h1m33 0h1m2 0h1m34 0h1m30 0h2M32 252h1m23 0h1m29 0h1m4 0h1m7 0h1m1 0h1m15 0h1m2 0h1m20 0h1m7 0h1m14 0h1m118 0h1m22 0h1m12 0h1m21 0h1m2 0h2m17 0h1m3 0h1m2 0h1m26 0h1m6 0h1m2 0h1m58 0h1m98 0h1m46 0h1M57 253h1m26 0h1m1 0h1m8 0h1m28 0h1m21 0h1m37 0h1m13 0h1m2 0h1m2 0h1m3 0h1m2 0h1m2 0h1m57 0h1m11 0h1m45 0h1m38 0h1m3 0h1m9 0h1m26 0h1m5 0h2m52 0h1m19 0h1m4 0h1m6 0h1m26 0h1m42 0h1m23 0h1m4 0h1m6 0h1M49 254h1m7 0h1m30 0h1m1 0h1m40 0h1m12 0h1m8 0h1m143 0h1m12 0h1m22 0h1m17 0h1m2 0h1m10 0h1m31 0h1m22 0h1m48 0h1m1 0h1m32 0h2m17 0h1m36 0h1m33 0h1m1 0h1m2 0h1M29 255h1m53 0h1m5 0h1m13 0h1m14 0h1m3 0h2m30 0h1m7 0h1m1 0h1m26 0h1m7 0h1m34 0h1m42 0h1m4 0h1m27 0h1m10 0h2m28 0h1m5 0h1m50 0h2m5 0h1m47 0h1m32 0h1m67 0h1m8 0h1m3 0h1m3 0h2m9 0h1m1 0h1m7 0h1M85 256h1m2 0h1m9 0h1m51 0h1m6 0h1m9 0h2m13 0h1m41 0h1m33 0h1m5 0h1m75 0h1m21 0h1m25 0h1m14 0h1m43 0h2m16 0h1m9 0h1m3 0h1m45 0h1m2 0h1m17 0h1m3 0h1m1 0h1m26 0h1m3 0h1m3 0h1m1 0h1m11 0h1M29 257h1m15 0h1m29 0h1m2 0h1m14 0h1m46 0h1m23 0h2m6 0h1m74 0h1m3 0h1m10 0h1m11 0h1m28 0h1m16 0h1m8 0h1m60 0h1m26 0h1m13 0h1m10 0h1m4 0h1m15 0h1m18 0h1m4 0h1m22 0h1m12 0h1m2 0h1m17 0h1m1 0h1m9 0h1m16 0h1m3 0h1m35 0h1M39 258h1m5 0h1m2 0h1m36 0h1m8 0h1m8 0h1m57 0h1m11 0h1m4 0h1m9 0h1m17 0h1m10 0h2m3 0h1m13 0h1m74 0h1m57 0h1m63 0h1m8 0h1m18 0h1m5 0h1m15 0h1m17 0h1m4 0h1m14 0h1m23 0h1m10 0h1M54 259h1m36 0h1m24 0h1m11 0h1m8 0h1m3 0h1m6 0h1m1 0h1m31 0h1m67 0h1m5 0h1m5 0h1m35 0h1m8 0h1m32 0h1m4 0h1m15 0h1m13 0h1m5 0h1m3 0h1m3 0h1m15 0h1m1 0h1m14 0h1m2 0h1m13 0h1m25 0h1m16 0h1m8 0h1M39 260h1m22 0h1m5 0h1m41 0h1m27 0h1m9 0h1m8 0h1m98 0h1m39 0h1m55 0h1m10 0h1m35 0h1m1 0h1m16 0h1m9 0h1m26 0h1m22 0h1m9 0h1m49 0h1m44 0h1M25 261h1m16 0h1m11 0h1m2 0h2m31 0h1m18 0h1m6 0h1m29 0h1m16 0h1m24 0h1m24 0h1m3 0h1m22 0h1m7 0h1m8 0h1m14 0h1m48 0h2m17 0h1m54 0h1m74 0h1m47 0h1m7 0h1m6 0h1m28 0h1m21 0h1m1 0h1m29 0h1m2 0h1M28 262h1m24 0h1m25 0h1m6 0h1m9 0h1m4 0h1m6 0h1m73 0h1m18 0h1m61 0h2m18 0h1m29 0h1m14 0h1m2 0h1m4 0h1m89 0h1m12 0h1m41 0h1m1 0h1m22 0h1m55 0h1m3 0h1m5 0h1m9 0h1M21 263h1m2 0h2m32 0h1m27 0h1m76 0h1m5 0h1m6 0h1m7 0h1m46 0h1m6 0h1m11 0h1m50 0h1m32 0h1m4 0h1m1 0h1m10 0h1m19 0h1m6 0h1m15 0h1m1 0h1m49 0h1m10 0h1m3 0h2m9 0h1m24 0h1m6 0h1m4 0h1m23 0h1m25 0h1m47 0h1M31 264h1m29 0h3m3 0h1m1 0h1m10 0h1m28 0h1m71 0h2m16 0h1m20 0h1m8 0h1m30 0h1m15 0h1m4 0h1m34 0h1m37 0h1m9 0h1m49 0h1m15 0h1m5 0h2m66 0h1m9 0h1m18 0h1m13 0h1m22 0h1m19 0h1m2 0h1M32 265h1m13 0h1m4 0h1m31 0h1m3 0h1m19 0h1m12 0h1m15 0h1m50 0h1m5 0h1m1 0h1m38 0h1m71 0h1m36 0h1m9 0h1m27 0h1m23 0h2m23 0h1m32 0h1m20 0h1m29 0h1m33 0h1m4 0h1m31 0h1m14 0h1M60 266h2m10 0h1m28 0h1m29 0h1m23 0h1m40 0h1m37 0h1m10 0h1m110 0h1m12 0h1m37 0h2m14 0h1m8 0h1m4 0h1m46 0h1m25 0h1m24 0h1m6 0h1m44 0h1M50 267h1m21 0h1m38 0h1m1 0h1m47 0h1m9 0h1m11 0h1m63 0h2m81 0h1m12 0h2m20 0h1m2 0h1m17 0h1m1 0h1m8 0h1m33 0h1m35 0h1m9 0h2m75 0h1m9 0h1M55 268h1m22 0h1m67 0h1m7 0h1m3 0h1m30 0h1m25 0h1m65 0h1m89 0h1m11 0h1m43 0h1m126 0h1M24 269h1m47 0h1m15 0h1m10 0h1m89 0h1m37 0h1m8 0h1m101 0h1m8 0h1m50 0h1m31 0h1m83 0h1m102 0h1M29 270h1m73 0h1m154 0h1m12 0h1m8 0h1m42 0h1m47 0h1m6 0h1m23 0h1m14 0h1m7 0h1m48 0h1m76 0h1m49 0h1M20 271h1m23 0h1m9 0h1m5 0h1m36 0h1m97 0h1m19 0h1m19 0h1m27 0h1m8 0h1m28 0h1m12 0h1m10 0h1m28 0h1m58 0h1m13 0h1m5 0h1m105 0h1m35 0h1M50 272h1m1 0h1m29 0h1m27 0h1m47 0h1m116 0h1m45 0h1M47 273h1m3 0h1m38 0h1m83 0h1m435 0h1M100 274h1m304 0h1m162 0h1M86 275h1m6 0h1m395 0h1m7 0h1M295 276h1m49 0h1m56 0h1m63 0h1M52 277h1m56 0h1m1 0h1m25 0h1M46 278h1m5 0h1m374 0h1M98 279h1m12 0h1M29 280h1m429 0h1"/>
<path stroke="#000070" d="M65 178h1M82 180h1m27 0h1M100 181h1M155 184h1M101 186h1M59 188h1m35 0h1M101 189h1m284 0h1m131 0h1m64 0h1M75 190h1m138 0h1m319 0h1M92 191h1m16 0h1m1 0h1m56 0h1m56 0h1m60 0h1m153 0h1M64 192h1m92 0h1m32 0h1m12 0h1m328 0h1m3 0h1m69 0h1M66 193h1m34 0h1m3 0h1m49 0h1m146 0h1m93 0h1m71 0h1m76 0h1M196 194h1m173 0h1m38 0h1m3 0h1m60 0h1M24 195h1m20 0h1m56 0h1m106 0h1m48 0h1m97 0h1m104 0h1m7 0h1M85 196h1m5 0h1m5 0h1m14 0h1m91 0h1m62 0h1m51 0h1m16 0h1m55 0h1m33 0h1m33 0h1m27 0h1m8 0h1M46 197h1m101 0h1m3 0h1m9 0h1m58 0h1m37 0h1m37 0h1m8 0h1m84 0h1m6 0h1m110 0h1m32 0h1m8 0h1m63 0h1M31 198h1m27 0h1m34 0h1m24 0h1m95 0h1m2 0h1m41 0h1m97 0h1m10 0h1m31 0h1m26 0h1m168 0h1M29 199h1m15 0h1m23 0h1m33 0h1m39 0h1m38 0h1m10 0h1m4 0h1m20 0h1m15 0h1m19 0h1m6 0h1m18 0h1m2 0h1m14 0h1m70 0h1m12 0h1m53 0h1m25 0h1m32 0h1m5 0h1m62 0h1M27 200h1m28 0h1m1 0h1m21 0h1m5 0h1m1 0h1m19 0h1m136 0h1m6 0h1m7 0h1m19 0h1m57 0h1m85 0h1m94 0h1m4 0h1m33 0h1M56 201h2m1 0h1m6 0h1m2 0h1m13 0h1m18 0h2m24 0h1m59 0h1m10 0h1m34 0h1m25 0h1m32 0h1m31 0h1m29 0h1m4 0h1m83 0h1m74 0h1M34 202h1m11 0h1m6 0h1m15 0h1m10 0h1m133 0h1m3 0h2m23 0h1m146 0h1m168 0h1M22 203h1m6 0h1m33 0h1m40 0h1m39 0h1m7 0h1m9 0h1m15 0h1m18 0h1m7 0h1m32 0h1m5 0h1m24 0h1m18 0h1m43 0h1m10 0h1m22 0h1m51 0h1m7 0h1m47 0h1m3 0h1m10 0h1m48 0h1m41 0h1M21 204h1m18 0h1m12 0h1m4 0h1m10 0h1m29 0h1m8 0h1m3 0h1m37 0h1m37 0h1m6 0h1m17 0h1m19 0h2m109 0h1m50 0h2m15 0h1m42 0h1m71 0h1m1 0h1m17 0h1m62 0h1m1 0h1M38 205h1m31 0h1m12 0h1m6 0h1m19 0h1m1 0h1m34 0h1m5 0h1m6 0h1m35 0h1m15 0h1m9 0h1m17 0h1m1 0h1m56 0h1m56 0h1m89 0h1m10 0h1m100 0h1m26 0h1m27 0h1M54 206h1m2 0h1m18 0h1m2 0h1m22 0h1m6 0h1m23 0h1m104 0h1m174 0h1m13 0h1m61 0h1m21 0h1m8 0h1m19 0h1m1 0h1m52 0h1m10 0h1M63 207h1m9 0h1m2 0h1m9 0h1m16 0h1m3 0h1m25 0h1m9 0h1m23 0h1m3 0h1m16 0h1m23 0h1m48 0h1m25 0h1m36 0h1m55 0h1m4 0h2m5 0h1m11 0h1m65 0h1m32 0h1m2 0h1m28 0h1m6 0h1m10 0h1m33 0h1m9 0h1m1 0h1M28 208h1m2 0h1m28 0h1m6 0h1m24 0h1m46 0h1m52 0h1m12 0h1m82 0h1m34 0h1m190 0h1m21 0h1m14 0h1M21 209h1m28 0h1m12 0h1m61 0h1m12 0h1m27 0h1m1 0h1m10 0h1m75 0h1m33 0h1m96 0h1m14 0h1m2 0h1m50 0h1m53 0h1m5 0h1M48 210h1m5 0h1m42 0h1m1 0h1m10 0h1m168 0h1m32 0h1m17 0h1m53 0h1m29 0h2m87 0h1m69 0h1m18 0h2m19 0h1M21 211h1m18 0h1m7 0h1m6 0h1m22 0h1m1 0h1m28 0h1m24 0h1m5 0h1m1 0h1m26 0h1m1 0h1m36 0h1m21 0h1m1 0h1m53 0h2m8 0h1m88 0h1m3 0h1m5 0h1m11 0h1m31 0h1m47 0h1m111 0h1m18 0h1M50 212h1m2 0h1m1 0h2m11 0h1m8 0h1m5 0h1m11 0h1m20 0h1m76 0h1m74 0h1m21 0h1m17 0h1m10 0h1m44 0h1m6 0h1m8 0h1m1 0h1m31 0h1m6 0h1m4 0h1m12 0h1m17 0h1m37 0h1m23 0h1m1 0h1M57 213h1m6 0h1m9 0h1m9 0h1m1 0h1m174 0h1m31 0h1m43 0h1m20 0h1m63 0h1m11 0h1m34 0h1m80 0h1m6 0h1m44 0h1M35 214h1m22 0h1m67 0h1m5 0h1m1 0h2m1 0h1m3 0h1m17 0h1m24 0h1m35 0h1m13 0h1m29 0h1m16 0h1m15 0h1m46 0h1m30 0h1m32 0h3m40 0h1m3 0h1m10 0h1m7 0h1m16 0h1m4 0h1m79 0h1m35 0h1M25 215h1m21 0h1m1 0h1m34 0h1m18 0h1m31 0h1m3 0h1m8 0h1m51 0h1m14 0h1m17 0h1m30 0h1m130 0h1m19 0h1m26 0h1m20 0h1m44 0h1m72 0h1M55 216h1m15 0h1m25 0h1m19 0h1m33 0h1m12 0h1m15 0h1m19 0h1m32 0h1m55 0h1m59 0h1m12 0h1m43 0h1m75 0h1m16 0h1m26 0h1m6 0h1m1 0h1m20 0h1m24 0h1m14 0h1M35 217h1m2 0h1m13 0h1m10 0h1m86 0h1m59 0h1m18 0h1m19 0h1m13 0h1m22 0h1m91 0h1m42 0h1m21 0h1m10 0h1m17 0h1m38 0h1m29 0h1M24 218h1m39 0h2m8 0h1m18 0h1m33 0h1m2 0h1m19 0h1m29 0h1m40 0h1m9 0h1m16 0h1m58 0h1m4 0h1m20 0h1m26 0h1m97 0h1m15 0h1m46 0h1m2 0h1m4 0h1m34 0h1m51 0h1M92 219h1m12 0h1m5 0h1m10 0h1m8 0h1m20 0h1m4 0h1m8 0h1m13 0h1m19 0h1m40 0h1m124 0h1m30 0h1m29 0h1m27 0h1m49 0h1m9 0h1m21 0h1m37 0h1m35 0h1m3 0h1M178 220h1m5 0h1m3 0h1m9 0h1m22 0h1m5 0h1m9 0h1m1 0h1m39 0h2m2 0h1m41 0h1m26 0h1m5 0h1m1 0h1m28 0h2m17 0h1m30 0h1m7 0h1m36 0h2m18 0h1m68 0h1M37 221h1m11 0h1m6 0h1m29 0h1m23 0h1m2 0h1m73 0h1m16 0h1m11 0h1m21 0h1m4 0h1m84 0h1m50 0h1m26 0h1m17 0h1m28 0h1m21 0h1m4 0h1m52 0h1m35 0h2m12 0h1m1 0h1m9 0h1m6 0h1M39 222h1m1 0h1m14 0h1m71 0h1m40 0h1m9 0h1m11 0h1m15 0h2m29 0h1m73 0h1m27 0h1m11 0h1m37 0h1m60 0h1m18 0h1m2 0h1m55 0h1m29 0h1M82 223h1m54 0h1m6 0h1m2 0h1m17 0h1m166 0h1m5 0h1m74 0h1m4 0h1m20 0h1m64 0h1m33 0h1m51 0h2m12 0h1m9 0h1m2 0h1m1 0h1M75 224h1m19 0h1m49 0h1m20 0h1m23 0h1m45 0h1m30 0h1m5 0h1m16 0h1m36 0h1m8 0h1m97 0h1m69 0h1m22 0h1m29 0h1m20 0h1m8 0h1M61 225h1m2 0h1m15 0h1m18 0h1m44 0h1m17 0h1m49 0h1m23 0h1m10 0h2m7 0h1m22 0h1m3 0h1m68 0h1m97 0h1m41 0h1m12 0h1m24 0h1m16 0h1m1 0h1m21 0h1M37 226h1m18 0h1m15 0h1m6 0h1m5 0h1m2 0h1m2 0h1m103 0h1m11 0h1m1 0h1m6 0h1m10 0h1m8 0h1m63 0h1m71 0h1m5 0h1m123 0h1m5 0h1m12 0h1M51 227h1m25 0h1m98 0h1m62 0h2m39 0h1m3 0h1m53 0h1m40 0h1m82 0h1m63 0h1m3 0h1m26 0h1m17 0h1m23 0h1m18 0h1M25 228h1m7 0h1m18 0h1m1 0h1m3 0h1m23 0h1m2 0h1m15 0h1m15 0h1m1 0h1m37 0h1m16 0h1m22 0h1m64 0h1m29 0h1m69 0h1m11 0h1m55 0h1m10 0h1m18 0h1m67 0h1m4 0h1m61 0h1M48 229h1m13 0h1m1 0h1m37 0h1m6 0h1m33 0h1m31 0h1m74 0h1m21 0h1m101 0h1m103 0h1m48 0h1m26 0h1m26 0h1M72 230h1m1 0h1m14 0h1m27 0h1m35 0h1m17 0h1m4 0h1m52 0h1m19 0h1m57 0h1m7 0h1m115 0h1m32 0h1m2 0h1m29 0h1m34 0h1m23 0h1m26 0h1m9 0h1m18 0h2M36 231h1m14 0h1m7 0h1m3 0h1m1 0h1m4 0h1m9 0h1m6 0h1m77 0h1m61 0h1m108 0h1m29 0h1m21 0h1m11 0h1m7 0h1m52 0h1m5 0h1m44 0h1m6 0h1m36 0h1m59 0h1M46 232h1m44 0h1m21 0h1m29 0h1m9 0h1m17 0h1m2 0h1m4 0h1m42 0h1m1 0h1m101 0h1m35 0h1m8 0h1m17 0h1m42 0h1m44 0h1m2 0h1m5 0h1m3 0h1m34 0h1m7 0h1m12 0h1m12 0h1m6 0h1m9 0h1m13 0h1m14 0h1m7 0h1m4 0h1M27 233h1m11 0h1m19 0h1m28 0h1m18 0h1m27 0h1m18 0h1m43 0h1m2 0h1m60 0h1m25 0h1m3 0h1m3 0h1m25 0h1m44 0h1m2 0h1m17 0h1m3 0h1m42 0h1m15 0h1m66 0h1m33 0h1m8 0h1m38 0h1M32 234h1m7 0h1m12 0h1m53 0h1m16 0h1m24 0h1m14 0h1m30 0h1m4 0h1m14 0h1m29 0h1m40 0h1m10 0h1m35 0h1m3 0h1m68 0h1m14 0h1m44 0h1m24 0h2m119 0h1m1 0h1M51 235h1m6 0h1m9 0h1m27 0h1m113 0h1m11 0h1m9 0h1m38 0h1m49 0h1m19 0h1m23 0h1m2 0h2m34 0h1m2 0h1m8 0h1m15 0h1m23 0h1m32 0h1m14 0h1m23 0h1m17 0h1m10 0h1m44 0h1M80 236h1m5 0h1m7 0h1m17 0h1m40 0h1m28 0h1m40 0h1m9 0h1m44 0h1m9 0h1m86 0h1m20 0h1m52 0h2m19 0h1m5 0h1m7 0h2m19 0h1m14 0h1M43 237h1m19 0h1m2 0h1m4 0h1m2 0h1m31 0h1m4 0h1m86 0h1m24 0h1m48 0h1m16 0h1m16 0h1m19 0h2m15 0h1m63 0h1m13 0h1m36 0h1m133 0h1M32 238h1m15 0h1m6 0h1m11 0h1m3 0h1m3 0h1m19 0h1m66 0h1m25 0h1m7 0h1m10 0h1m27 0h1m23 0h1m12 0h1m49 0h1m20 0h1m7 0h1m10 0h1m172 0h1m50 0h1m30 0h1M46 239h1m7 0h1m5 0h1m8 0h1m13 0h1m2 0h1m5 0h1m2 0h1m79 0h1m4 0h1m71 0h1m49 0h1m45 0h1m14 0h1m24 0h1m28 0h1m27 0h1m4 0h1m19 0h1m17 0h1m75 0h1M32 240h1m32 0h2m31 0h1m1 0h1m43 0h1m38 0h1m20 0h1m42 0h1m20 0h1m11 0h1m48 0h1m2 0h1m30 0h1m4 0h1m18 0h1m20 0h1m63 0h1m14 0h1m45 0h1m35 0h1m8 0h1m9 0h1m13 0h1M29 241h1m20 0h1m15 0h1m13 0h1m7 0h1m8 0h1m9 0h1m21 0h1m12 0h1m38 0h1m96 0h1m13 0h1m119 0h1m51 0h1m20 0h1m18 0h1m12 0h1m84 0h1m14 0h1M45 242h1m32 0h1m13 0h1m25 0h1m17 0h1m2 0h1m10 0h1m16 0h1m11 0h1m51 0h1m54 0h1m15 0h1m16 0h1m21 0h1m36 0h1m1 0h1m4 0h1m17 0h1m8 0h1m1 0h1m12 0h1m14 0h1m1 0h1m61 0h1m10 0h1m53 0h1M80 243h1m24 0h1m31 0h1m58 0h1m18 0h1m52 0h1m81 0h1m13 0h1m6 0h1m12 0h1m5 0h1m2 0h1m83 0h1m5 0h1m90 0h1m33 0h1M20 244h1m27 0h1m1 0h1m4 0h1m3 0h1m14 0h1m10 0h1m1 0h1m8 0h1m2 0h1m5 0h1m41 0h1m6 0h1m12 0h1m14 0h1m4 0h1m36 0h1m11 0h1m19 0h1m17 0h1m1 0h1m29 0h1m66 0h1m6 0h1m77 0h1m15 0h1m53 0h1m35 0h1m28 0h1m11 0h1m5 0h1M71 245h2m64 0h1m18 0h1m14 0h1m6 0h1m48 0h1m75 0h1m113 0h1m13 0h1m42 0h1m18 0h1m11 0h1m15 0h1m64 0h1m21 0h1M27 246h1m5 0h1m17 0h1m10 0h2m28 0h1m66 0h1m8 0h1m70 0h1m43 0h1m28 0h1m9 0h1m57 0h1m7 0h1m22 0h1m4 0h1m50 0h1m3 0h1m36 0h1m54 0h1m34 0h1M56 247h1m22 0h1m20 0h1m9 0h1m4 0h1m32 0h1m59 0h1m4 0h1m1 0h1m25 0h2m29 0h1m4 0h1m18 0h1m5 0h1m82 0h1m10 0h1m14 0h1m13 0h1m21 0h1m17 0h1m46 0h1m93 0h1M32 248h3m2 0h1m15 0h2m10 0h2m1 0h1m3 0h1m2 0h1m19 0h1m12 0h1m18 0h1m26 0h1m56 0h1m18 0h1m7 0h1m52 0h1m6 0h1m23 0h1m42 0h1m22 0h1m18 0h1m21 0h1m157 0h1M52 249h1m8 0h2m10 0h1m78 0h1m25 0h1m6 0h1m78 0h1m23 0h1m27 0h1m81 0h1m36 0h1m8 0h1m14 0h1m45 0h1m20 0h2m27 0h1m58 0h1M27 250h1m29 0h1m5 0h1m4 0h1m5 0h1m1 0h1m16 0h1m11 0h1m1 0h1m28 0h1m81 0h1m1 0h1m8 0h1m43 0h1m99 0h1m50 0h1m5 0h1m24 0h1m31 0h2m3 0h1m9 0h1m61 0h1M39 251h1m8 0h1m36 0h1m16 0h1m2 0h1m126 0h1m5 0h2m126 0h1m25 0h1m12 0h1m12 0h1m26 0h1m47 0h1m77 0h1M27 252h1m22 0h1m11 0h1m6 0h1m3 0h2m13 0h1m9 0h1m45 0h1m11 0h1m10 0h1m31 0h1m46 0h1m2 0h1m12 0h1m18 0h1m182 0h2m70 0h1m33 0h1m7 0h1m10 0h1m10 0h1m3 0h1M110 253h1m17 0h1m63 0h1m50 0h1m7 0h1m34 0h1m32 0h1m57 0h1m45 0h1m25 0h1m53 0h1m30 0h1m59 0h1m15 0h1M31 254h1m35 0h1m9 0h1m15 0h1m8 0h1m19 0h1m165 0h1m24 0h1m3 0h1m22 0h1m18 0h1m28 0h1m17 0h1m1 0h1m37 0h1m25 0h1m2 0h1m3 0h1m10 0h1m6 0h1m41 0h1m12 0h1m16 0h1m8 0h1m23 0h1m1 0h1M26 255h1m6 0h1m44 0h1m6 0h1m8 0h1m45 0h1m2 0h1m14 0h1m72 0h1m84 0h1m24 0h1m30 0h1m67 0h1m1 0h1m51 0h1m8 0h1m11 0h1m70 0h1m4 0h1M41 256h1m96 0h1m65 0h1m52 0h1m89 0h1m87 0h1m35 0h1m65 0h1m1 0h1M36 257h1m11 0h1m11 0h1m19 0h1m21 0h1m24 0h1m38 0h1m3 0h1m30 0h1m13 0h1m27 0h1m49 0h1m75 0h1m33 0h1m2 0h1m55 0h1m46 0h1m43 0h1m21 0h1m6 0h1m6 0h1m14 0h1M32 258h1m45 0h1m27 0h2m40 0h1m65 0h1m17 0h1m10 0h1m69 0h1m33 0h1m50 0h1m25 0h1m19 0h1m79 0h1m14 0h1m54 0h1M32 259h1m13 0h1m18 0h1m26 0h1m12 0h1m34 0h1m17 0h1m18 0h1m5 0h1m29 0h1m83 0h1m161 0h1m4 0h1m20 0h1m35 0h1m22 0h1m26 0h1m8 0h1m8 0h1M43 260h1m33 0h1m16 0h1m13 0h1m37 0h1m32 0h1m35 0h1m37 0h1m13 0h1m15 0h1m15 0h1m19 0h1m82 0h1m41 0h1m8 0h1m4 0h1m32 0h1m11 0h1m30 0h1m2 0h1M68 261h1m10 0h1m2 0h1m19 0h1m22 0h1m93 0h1m33 0h1m2 0h1m22 0h2m8 0h1m159 0h1m28 0h1m23 0h1M22 262h1m16 0h1m1 0h1m3 0h1m2 0h1m2 0h1m9 0h1m3 0h1m14 0h1m28 0h1m12 0h1m13 0h1m60 0h1m4 0h1m27 0h1m98 0h1m11 0h1m25 0h1m66 0h1m92 0h2m18 0h1m27 0h1m9 0h1m16 0h1M82 263h1m24 0h1m34 0h1m21 0h1m47 0h1m5 0h1m6 0h1m22 0h1m32 0h1m95 0h1m23 0h1m19 0h1m5 0h1m59 0h1m70 0h1m15 0h1m20 0h1M30 264h1m16 0h1m34 0h1m12 0h1m50 0h1m40 0h1m21 0h1m5 0h1m127 0h1m8 0h1m70 0h1m53 0h1m1 0h1m2 0h1m8 0h1m34 0h1M22 265h1m33 0h1m11 0h1m60 0h1m3 0h1m305 0h1m10 0h1m34 0h1m88 0h1m2 0h1m3 0h1M52 266h1m59 0h1m111 0h1m22 0h1m43 0h1m62 0h1m116 0h1m47 0h1m21 0h1M55 267h1m5 0h1m4 0h1m42 0h1m39 0h1m22 0h1m44 0h1m37 0h1m176 0h1m1 0h1M60 268h1m3 0h1m5 0h1m15 0h1m101 0h1m164 0h1m11 0h1m63 0h1m52 0h1M55 269h1m26 0h1m6 0h1m143 0h1m40 0h1m77 0h1M57 270h1m30 0h1m2 0h1m7 0h1m36 0h1m68 0h1m110 0h1m96 0h1m39 0h1M200 271h1m13 0h1m138 0h1m209 0h1M24 272h1m44 0h1m24 0h1m1 0h1m1 0h1m94 0h1m228 0h1M529 273h1M78 274h2M70 275h1m31 0h1M99 278h1m117 0h1M166 279h1M97 283h1M63 286h1"/>
<path stroke="#00008c" d="M187 184h1M99 189h1M65 190h1m7 0h1m38 0h1M76 191h1m109 0h1m92 0h1m234 0h1M50 192h1m15 0h1m6 0h1m336 0h1M35 193h1m17 0h1m16 0h1M45 194h1m22 0h1m24 0h1m2 0h1m6 0h1m145 0h1m78 0h1M71 195h2m10 0h1m2 0h1m522 0h1M58 196h2m22 0h1m27 0h1m353 0h1m21 0h1m18 0h1m80 0h1M39 197h1m46 0h1m6 0h1m153 0h1m2 0h1m187 0h1m133 0h1m8 0h1M67 198h1m20 0h2M81 199h1m11 0h2m57 0h1m258 0h1m35 0h1m53 0h1m6 0h1m64 0h1M43 200h2m23 0h1m13 0h1m119 0h1m38 0h1m12 0h1m91 0h1m14 0h1m28 0h1m23 0h1M40 201h1m22 0h1m8 0h1m5 0h1m13 0h1m73 0h1m5 0h1m251 0h1m48 0h1m102 0h1m33 0h1m1 0h1M29 202h1m11 0h1m1 0h1m22 0h1m3 0h1m3 0h1m27 0h1m97 0h1m89 0h1m44 0h1m195 0h1m5 0h1m63 0h1m6 0h1M35 203h1m17 0h1m34 0h1m4 0h1m1 0h1m107 0h1m229 0h1m19 0h1m9 0h1m24 0h1m112 0h1M36 204h1m4 0h1m3 0h1m25 0h1m30 0h2m2 0h1m41 0h1m66 0h1m264 0h1m107 0h1m10 0h1m11 0h1M77 205h1m18 0h1m4 0h1m2 0h1m76 0h1m72 0h1m25 0h1m86 0h1m1 0h1m35 0h1m3 0h1m59 0h1m53 0h1m58 0h1M55 206h1m28 0h1m1 0h1m12 0h1m63 0h1m49 0h1m14 0h1m55 0h1m46 0h1m2 0h1m117 0h1M37 207h1m2 0h1m11 0h1m5 0h1m20 0h1m17 0h1m328 0h1M80 208h1m3 0h1m19 0h1m1 0h1m71 0h1m103 0h1m22 0h1m14 0h1m48 0h1M29 209h1m8 0h1m25 0h1m1 0h1m14 0h1m13 0h1m34 0h1m221 0h1m14 0h1m81 0h1m26 0h1m42 0h1M25 210h1m75 0h1m74 0h1m282 0h1m8 0h1m74 0h1M43 211h1m9 0h1m27 0h1m9 0h1m25 0h1m213 0h1m12 0h1M31 212h1m14 0h1m41 0h1m1 0h1m2 0h1m15 0h1m46 0h1m24 0h1m163 0h1m14 0h1m80 0h1M67 213h1m27 0h1m3 0h1m53 0h1m69 0h1m4 0h1m39 0h1m9 0h1m147 0h1m25 0h1m153 0h1M24 214h1m75 0h1m108 0h1m22 0h1m123 0h1m88 0h1m10 0h1m46 0h1m84 0h1M66 215h1m21 0h1m16 0h1m100 0h1m24 0h1m70 0h1m126 0h1m43 0h1m17 0h1m20 0h1m17 0h1m17 0h1m22 0h1M57 216h1m30 0h1m10 0h1m2 0h1m9 0h1m14 0h1m28 0h1m55 0h1m57 0h1m42 0h1m1 0h1m27 0h1m56 0h1m18 0h1m8 0h1m6 0h1m105 0h1M43 217h1m37 0h2m9 0h1m3 0h1m140 0h1m13 0h1m158 0h1m50 0h1m4 0h1m53 0h1M52 218h1m46 0h1m67 0h1m239 0h1m15 0h1m135 0h1m7 0h1M63 219h1m2 0h1m5 0h1m2 0h1m20 0h1m20 0h1m95 0h1m232 0h1m27 0h1m2 0h1m122 0h1m8 0h1M28 220h1m41 0h1m1 0h1m4 0h1m8 0h1m4 0h1m165 0h1m7 0h1m37 0h1m129 0h1m39 0h1m6 0h1m43 0h1m58 0h1m32 0h1M72 221h1m6 0h1m26 0h1m16 0h1m5 0h1m78 0h1m73 0h1m51 0h1m20 0h1M29 222h1m17 0h1m16 0h1m1 0h1m1 0h2m3 0h1m18 0h1m10 0h1m59 0h1m115 0h1m214 0h1m33 0h1M78 223h1m30 0h1m8 0h1m261 0h1m147 0h1m13 0h1M59 224h1m7 0h1m10 0h1m6 0h1m21 0h1m38 0h1m70 0h1m7 0h1m13 0h1m144 0h1m42 0h1M40 225h1m13 0h1m12 0h1m21 0h1m10 0h1m1 0h1m33 0h1m95 0h1m129 0h1m14 0h1m84 0h1m135 0h1M61 226h1m3 0h1m4 0h1m21 0h1m9 0h1m1 0h1m258 0h1m24 0h1m35 0h1m6 0h1m57 0h1m41 0h1m43 0h1m39 0h1M42 227h1m24 0h1m3 0h1m1 0h1m36 0h1m74 0h1m87 0h1m225 0h1m49 0h1m63 0h1M89 228h1m7 0h1m5 0h2m9 0h1m53 0h1m22 0h1m149 0h1m8 0h1m6 0h1m17 0h1m40 0h1m103 0h1M41 229h1m3 0h1m11 0h1m17 0h1m70 0h1m13 0h1m166 0h1m51 0h1m33 0h1m63 0h1m26 0h1M65 230h1m11 0h1m7 0h1m2 0h1m190 0h1m94 0h1m70 0h1m149 0h1M21 231h1m26 0h1m13 0h1m20 0h1m10 0h1m6 0h1m9 0h1m6 0h1m19 0h1m9 0h1m90 0h1m3 0h1m139 0h1m81 0h1m32 0h1m21 0h1m70 0h1M73 232h1m14 0h1m6 0h1m5 0h1m8 0h1m88 0h1m2 0h1m26 0h1m36 0h1m189 0h1m8 0h1m133 0h1M67 233h1m12 0h1m11 0h1m5 0h1m12 0h1m118 0h1m1 0h1m64 0h1m11 0h1m214 0h1M67 234h1m6 0h2m30 0h1m56 0h1m62 0h1m345 0h1M43 235h1m9 0h1m1 0h1m55 0h1m42 0h1m15 0h1m65 0h1m6 0h1m207 0h1m140 0h1m8 0h1M34 236h1m17 0h1m24 0h1m9 0h1m18 0h2m2 0h1m44 0h1m246 0h1m75 0h1m28 0h1m109 0h1M52 237h1m4 0h1m3 0h1m23 0h1m111 0h1m73 0h1m38 0h1m13 0h1m111 0h1M87 238h1m88 0h1m229 0h1m16 0h1m14 0h1m14 0h1m71 0h1M28 239h1m5 0h1m9 0h1m10 0h1m15 0h1m10 0h1m2 0h1m1 0h1m6 0h1m67 0h1m50 0h1m10 0h1m53 0h1m106 0h1m34 0h1m16 0h1m63 0h1m26 0h1M51 240h1m16 0h1m14 0h1m18 0h1m269 0h1m74 0h1m31 0h1m54 0h1M64 241h1m10 0h1m11 0h1m24 0h1m63 0h1m83 0h1m3 0h1m41 0h1m20 0h1m31 0h1m13 0h1m95 0h1m26 0h2m94 0h1m19 0h1M39 242h1m11 0h1m1 0h2m19 0h1m5 0h1m3 0h2m85 0h1m89 0h1m59 0h1m70 0h1m46 0h1m73 0h2M49 243h1m3 0h1m27 0h1m10 0h1m1 0h1m9 0h1m3 0h1m170 0h1m22 0h1m2 0h1m73 0h1m18 0h1m45 0h1m35 0h1m48 0h1m11 0h1m22 0h1M296 244h1m171 0h1m71 0h1m69 0h1M85 245h1m10 0h1m42 0h1m33 0h1m87 0h1m3 0h1m59 0h1m108 0h1m37 0h1m8 0h1m53 0h1m49 0h1M20 246h1m14 0h1m43 0h1m104 0h1m31 0h1m210 0h1m34 0h1m77 0h1m39 0h1m25 0h2m3 0h1M101 247h1m2 0h1m165 0h1m191 0h1m15 0h1m74 0h1M27 248h1m24 0h1m39 0h1m5 0h1m12 0h1m7 0h1m107 0h1m1 0h1m36 0h1m35 0h1m6 0h1m2 0h1m43 0h1m54 0h1m66 0h2m29 0h1M43 249h1m7 0h1m18 0h1m7 0h1m72 0h1m43 0h1m279 0h1m65 0h1m47 0h1M52 250h1m37 0h1m21 0h1m78 0h1m25 0h1m27 0h1m28 0h1m10 0h1m108 0h1m99 0h1m39 0h1m73 0h1M51 251h1m1 0h1m13 0h1m11 0h1m208 0h1m35 0h1m37 0h1m69 0h1m169 0h1M63 252h1m7 0h1m8 0h1m2 0h1m19 0h1m20 0h1m63 0h1m2 0h1m36 0h1m28 0h1m88 0h1m19 0h1m60 0h1m122 0h1m12 0h1M54 253h1m1 0h1m16 0h1m35 0h1m81 0h1m212 0h1m114 0h1M58 254h1m6 0h1m5 0h1m6 0h1m20 0h1m27 0h1m54 0h1m70 0h1m33 0h1m7 0h1m106 0h1M47 255h1m21 0h1m4 0h1m37 0h1m55 0h1m73 0h1m1 0h1m101 0h1m31 0h1m70 0h1M59 256h1m8 0h1m2 0h1m1 0h1m9 0h1m13 0h1m386 0h1m45 0h1M52 257h1m19 0h1m35 0h1m1 0h1m86 0h1m23 0h1m1 0h1m102 0h1m48 0h1m40 0h1m5 0h1m6 0h1m62 0h1m81 0h1M27 258h1m24 0h1m8 0h1m4 0h1m8 0h1m35 0h1m150 0h1m33 0h1m56 0h1m68 0h2m50 0h1M76 259h1m9 0h1m6 0h1m146 0h1m215 0h1M49 260h1m11 0h1m34 0h1m19 0h1m165 0h1m26 0h1m106 0h1m44 0h1m64 0h1M22 261h1m17 0h1m9 0h1m1 0h1m21 0h1m5 0h1m233 0h1m3 0h1m149 0h1m85 0h1m48 0h1M42 262h1m27 0h1m20 0h1m45 0h1m77 0h1m2 0h1m53 0h1m102 0h1M57 263h1m16 0h1m5 0h1m2 0h1m132 0h1m175 0h1m1 0h1m93 0h1m8 0h1m45 0h1m34 0h1M52 264h1m2 0h1m19 0h1m14 0h1m34 0h1m9 0h1m248 0h1m16 0h1m139 0h1M52 265h1m20 0h1m36 0h1m251 0h1m33 0h1m24 0h1m86 0h1m3 0h1m74 0h1M64 266h1m34 0h1m88 0h1m55 0h1m15 0h1m340 0h1M65 267h1m38 0h1m34 0h1m328 0h1M48 268h1m17 0h1m43 0h1m108 0h1M59 269h1M70 271h1m9 0h1m27 0h2M87 272h2M103 274h1M56 276h1"/>
<path stroke="#0000ac" d="M109 186h1M53 190h1m33 0h1M60 193h1m51 0h1M78 194h1M69 195h1M51 196h1m11 0h1M70 197h1M55 198h1m20 0h1m14 0h1m5 0h1m125 0h1m4 0h1M63 199h1m20 0h1m26 0h1M40 200h1m12 0h1m39 0h1m8 0h1M65 201h1m2 0h1m10 0h1m9 0h1m336 0h1M61 202h1m1 0h1m34 0h1m192 0h1M23 203h1m46 0h1m1 0h1m35 0h1M90 204h1m352 0h1m72 0h1m11 0h1M92 205h1m36 0h1m73 0h1M207 206h1m45 0h1M84 207h1m95 0h1M56 208h1m40 0h1m10 0h1m233 0h1M70 209h1m9 0h1m108 0h1m183 0h1m13 0h1M32 210h1m33 0h1m11 0h1m2 0h1m7 0h1m2 0h1m3 0h1m151 0h1m28 0h1m155 0h1m58 0h1M71 211h1m151 0h1M66 212h1m32 0h1m5 0h1M66 213h1m31 0h1M70 214h1m14 0h1m115 0h1m270 0h1m91 0h1M77 215h1m34 0h1m354 0h1M50 216h1m16 0h1m4 0h1m12 0h1m307 0h1m52 0h1m101 0h1m59 0h1M112 217h1m104 0h1m141 0h1m130 0h1M55 218h1m3 0h1m13 0h1m29 0h1m8 0h1m344 0h1M74 219h1m9 0h1m19 0h1m362 0h1m14 0h1M82 220h2m127 0h1m60 0h1M93 221h1m1 0h1m6 0h1m131 0h1m299 0h1m11 0h1M54 222h1m24 0h2m488 0h1M145 223h1m377 0h1M57 224h1m12 0h1m123 0h1m36 0h1m264 0h1M84 225h1m93 0h1m323 0h1m18 0h1M76 226h1m34 0h1M69 227h1m5 0h1m23 0h1m6 0h1m84 0h1M34 228h1m53 0h1m408 0h1M65 229h1m17 0h1m193 0h1M63 230h1m14 0h1m33 0h1m289 0h1m216 0h1M57 231h1m9 0h1m1 0h1m29 0h1m68 0h1m397 0h1M58 232h1m4 0h2m29 0h1M75 233h1m267 0h1M50 234h1m10 0h1m77 0h1M78 235h1m25 0h1m97 0h1m101 0h1m134 0h1M39 236h1m11 0h1m14 0h1m5 0h1m5 0h2m5 0h1m3 0h1m495 0h1M72 237h1m5 0h1m7 0h1m333 0h1M50 238h1m2 0h1m2 0h1m1 0h1m2 0h1m3 0h1m393 0h1m113 0h1m2 0h1m30 0h1M63 239h1m14 0h1m27 0h1M52 240h1m27 0h1m338 0h1m19 0h1M53 241h1m474 0h1m29 0h1M58 242h1m7 0h2m40 0h2m337 0h1m29 0h1M65 243h1m13 0h1m18 0h1m3 0h1m63 0h1m309 0h1m51 0h1M92 244h1m11 0h1M58 245h1m39 0h1m5 0h1m409 0h1M61 246h1m4 0h1m444 0h1m105 0h1M60 247h1m2 0h1m13 0h1m14 0h1M36 248h1m11 0h1m22 0h1m7 0h1m8 0h1m502 0h1M33 249h1m24 0h1m29 0h1m16 0h1m163 0h1m227 0h1m10 0h1m9 0h1M66 250h1m17 0h1M66 251h1m359 0h1m16 0h1M111 252h1M70 253h1m6 0h1m15 0h1M61 254h1m118 0h1m251 0h1m85 0h1M73 255h1m8 0h1m28 0h1m238 0h1m90 0h1m48 0h1M51 256h1m3 0h1m4 0h1m43 0h2M92 257h1m78 0h1m18 0h1m13 0h1m291 0h1m42 0h1M90 258h1m11 0h1M61 259h1m2 0h1m15 0h1m4 0h1m14 0h1m123 0h1m42 0h1m91 0h1m44 0h1m73 0h1M89 260h1m9 0h1m11 0h1m255 0h1m101 0h1M78 261h1m2 0h1m13 0h1m8 0h2m418 0h1M74 262h1m32 0h1M99 263h1m1 0h1m9 0h1m397 0h1M85 264h1m107 0h1M93 265h1m282 0h1M77 266h1m8 0h1M64 267h1m3 0h1M58 268h1m32 0h1M81 269h1M68 270h1m28 0h1M101 272h1m1 0h1M63 274h1"/>
<path stroke="#0000d2" d="M57 194h1M60 195h1m42 0h1M66 196h1M112 197h1M109 198h1M80 199h1M59 200h1M87 201h1M55 202h1M56 203h1M97 204h1M53 205h1m9 0h1m7 0h1M63 206h1M67 207h1m2 0h1M59 208h1M69 209h1m19 0h1M65 210h1M72 212h1m13 0h2m15 0h1M59 213h1M89 215h1M84 216h1M67 217h1m22 0h1M87 218h1M69 219h1m37 0h1M60 220h1M68 221h1m36 0h1m1 0h1M71 222h1m24 0h1M96 223h1M64 224h1m9 0h1m5 0h1m7 0h1M85 225h1M81 226h1m7 0h1M57 227h1M56 230h1m13 0h1m9 0h1m22 0h1M53 231h1M65 232h1m37 0h1M56 234h1m13 0h1m32 0h1M112 235h1M105 236h1M56 237h1m12 0h1m22 0h1m11 0h1m2 0h1M73 238h1m125 0h1M105 239h1M55 241h1m17 0h1m22 0h1m5 0h1M60 242h1m111 0h1M66 243h1M56 244h1m8 0h1m15 0h1m2 0h1M76 245h1m15 0h1m6 0h1M52 246h1m25 0h1M70 247h1m7 0h1m8 0h1M85 248h1m19 0h1M53 249h1m44 0h1m3 0h1M99 250h1m6 0h1M91 253h1M54 254h1M102 255h1m6 0h1M62 256h1m255 0h1M63 258h1m27 0h1m7 0h1M57 259h1m12 0h1m3 0h1m27 0h1M103 260h1M98 261h1M95 262h1m7 0h1M89 263h1m3 0h1M67 265h1m4 0h1m3 0h1M52 267h1m47 0h1m5 0h1"/>
<path stroke="#0000ff" d="M210 174h1M184 190h1M515 191h1m32 0h1M342 193h1M556 194h1M582 196h1M166 197h1m137 0h1M607 199h1M110 201h1m494 0h1M62 202h1m4 0h1m126 0h1m164 0h1m121 0h1M117 203h1m58 0h1m161 0h1M60 204h1m12 0h1m266 0h1m242 0h1M41 206h1M263 207h1M23 208h1m492 0h1M58 209h1M288 210h1m65 0h1M83 211h1m210 0h1M180 212h1M604 213h1M594 214h1M31 215h1m49 0h1m174 0h1M167 217h1m200 0h1M63 218h1m3 0h1m41 0h1m252 0h1m167 0h1M79 219h1m23 0h1M79 220h1M266 221h1M514 222h1M125 223h1m157 0h1m265 0h1M281 224h1m103 0h1m121 0h1M69 225h3m15 0h1m8 0h1M77 226h1m483 0h1M505 227h1M356 229h1M96 230h1M505 231h1M151 232h1M103 233h1m504 0h1M346 234h1m30 0h1M162 236h1M147 237h1m275 0h1M96 238h1M102 239h1M63 241h1m180 0h1M133 243h1M54 245h1m24 0h1m192 0h1M52 247h1m122 0h1M104 248h1m120 0h1m134 0h1M485 251h1M79 252h1m30 0h1m278 0h1m40 0h1M382 253h1M66 254h1m12 0h1m430 0h1M55 259h1M98 260h1m5 0h1m221 0h1M211 261h1M253 263h1M51 264h1M54 265h1m15 0h1m100 0h1M104 269h1m109 0h1M84 272h1M145 275h1"/>
<path stroke="#0058ff" d="M233 232h1M552 235h1M108 247h1"/>
<path stroke="#00e8ff" d="M91 192h1M109 232h1M80 249h1M104 262h1"/>
<path stroke="#ff0" d="M16 90h2M16 100h2M16 110h2M16 120h2M14 130h4M16 140h2M16 150h2M16 160h2M16 170h2M14 180h4M16 190h2M16 200h2M16 210h2M16 220h2M14 230h4M16 240h2M16 250h2M16 260h2M16 270h2M14 280h4M16 290h2M16 300h2M16 310h2M16 320h2M14 330h4M16 340h2M16 350h2M16 360h2M16 370h2M14 380h4M16 390h2M624 100h2M624 110h2M624 120h2M624 130h4M624 140h2M624 150h2M624 160h2M624 170h2M624 180h4M624 190h2M624 200h2M624 210h2M624 220h2M624 230h4M624 240h2M624 250h2M624 260h2M624 270h2M624 280h4M624 290h2M624 300h2M624 310h2M624 320h2M624 330h4M624 340h2M624 350h2M624 360h2M624 370h2M624 380h4M624 390h2"/><path stroke="#808080" d="M20 370h600M20 380h600M20 390h600"/></g>
<path fill="#0ff" d="M20 398h1v2h-1zM21 399h1v1h-1zM22 398h2v2h-2zM24 399h1v1h-1zM25 398h1v2h-1zM26 399h1v1h-1zM27 398h1v2h-1zM28 399h3v1h-3zM31 398h2v2h-2zM33 397h1v3h-1zM34 399h1v1h-1zM35 398h3v2h-3zM38 399h1v1h-1zM39 397h1v3h-1zM40 398h1v2h-1zM41 399h1v1h-1zM42 396h1v4h-1zM43 397h1v3h-1zM44 398h1v2h-1zM45 397h2v3h-2zM47 398h1v2h-1zM48 396h1v4h-1zM49 397h2v3h-2zM51 398h1v2h-1zM52 397h1v3h-1zM54 397h3v3h-3zM57 396h2v4h-2zM59 397h1v3h-1zM60 396h3v4h-3zM63 395h1v5h-1zM64 397h2v3h-2zM66 398h1v2h-1zM67 396h2v4h-2zM69 395h1v5h-1zM70 394h1v6h-1zM71 397h1v3h-1zM72 395h1v5h-1zM73 396h1v4h-1zM74 397h2v3h-2zM76 395h1v5h-1zM77 396h1v4h-1zM78 395h1v5h-1zM79 396h1v4h-1zM80 398h1v2h-1zM81 397h1v3h-1zM82 396h1v4h-1zM83 395h1v5h-1zM84 397h1v3h-1zM85 398h1v2h-1zM86 397h1v3h-1zM87 396h2v4h-2zM89 398h1v2h-1zM90 396h1v4h-1zM91 398h1v2h-1zM92 395h1v5h-1zM93 397h1v3h-1zM94 395h2v5h-2zM96 397h1v3h-1zM97 396h1v4h-1zM98 395h1v5h-1zM99 396h4v4h-4zM103 395h2v5h-2zM105 396h1v4h-1zM106 398h1v2h-1zM107 396h1v4h-1zM108 397h1v3h-1zM109 396h1v4h-1zM110 397h3v3h-3zM113 398h3v2h-3zM116 399h1v1h-1zM117 398h2v2h-2zM119 399h4v1h-4zM123 398h11v2h-11zM134 397h1v3h-1zM135 399h1v1h-1zM136 397h2v3h-2zM138 399h1v1h-1zM139 398h2v2h-2zM141 399h2v1h-2zM143 398h1v2h-1zM144 399h3v1h-3zM147 398h2v2h-2zM149 399h1v1h-1zM150 398h2v2h-2zM152 399h1v1h-1zM153 397h1v3h-1zM154 398h1v2h-1zM155 399h1v1h-1zM156 398h1v2h-1zM157 397h1v3h-1zM158 399h1v1h-1zM159 398h2v2h-2zM161 397h1v3h-1zM162 398h1v2h-1zM163 399h1v1h-1zM165 399h1v1h-1zM166 397h1v3h-1zM167 398h2v2h-2zM169 399h1v1h-1zM170 398h1v2h-1zM171 399h1v1h-1zM172 398h3v2h-3zM175 399h3v1h-3zM178 398h5v2h-5zM183 399h2v1h-2zM185 398h1v2h-1zM186 399h2v1h-2zM188 398h3v2h-3zM191 399h1v1h-1zM192 398h4v2h-4zM196 399h2v1h-2zM198 398h1v2h-1zM199 399h2v1h-2zM201 398h1v2h-1zM202 399h2v1h-2zM204 398h1v2h-1zM205 397h1v3h-1zM206 398h1v2h-1zM207 399h1v1h-1zM208 397h1v3h-1zM209 398h1v2h-1zM210 399h2v1h-2zM212 398h1v2h-1zM213 397h1v3h-1zM214 399h1v1h-1zM215 397h1v3h-1zM216 399h3v1h-3zM220 399h1v1h-1zM221 398h1v2h-1zM222 399h1v1h-1zM223 396h1v4h-1zM224 398h2v2h-2zM226 397h2v3h-2zM228 399h2v1h-2zM231 399h2v1h-2zM233 398h2v2h-2zM235 399h2v1h-2zM237 397h1v3h-1zM238 399h1v1h-1zM239 398h3v2h-3zM242 399h1v1h-1zM243 398h1v2h-1zM244 397h1v3h-1zM245 399h1v1h-1zM246 398h6v2h-6zM252 397h1v3h-1zM253 399h1v1h-1zM254 398h3v2h-3zM257 399h1v1h-1zM258 398h3v2h-3zM261 396h1v4h-1zM262 399h2v1h-2zM264 398h3v2h-3zM267 399h1v1h-1zM268 397h2v3h-2zM270 399h2v1h-2zM272 398h4v2h-4zM276 399h1v1h-1zM277 398h2v2h-2zM279 399h1v1h-1zM280 397h1v3h-1zM281 398h5v2h-5zM286 399h2v1h-2zM288 398h1v2h-1zM289 399h3v1h-3zM292 397h1v3h-1zM293 398h3v2h-3zM296 399h1v1h-1zM297 398h4v2h-4zM301 397h1v3h-1zM302 398h1v2h-1zM303 399h3v1h-3zM306 398h1v2h-1zM307 396h1v4h-1zM308 398h2v2h-2zM310 399h1v1h-1zM311 398h1v2h-1zM312 399h1v1h-1zM313 397h1v3h-1zM314 399h1v1h-1zM315 398h1v2h-1zM316 399h1v1h-1zM317 398h1v2h-1zM318 396h1v4h-1zM319 398h1v2h-1zM320 399h2v1h-2zM322 398h1v2h-1zM323 399h2v1h-2zM325 398h1v2h-1zM326 399h1v1h-1zM327 397h2v3h-2zM329 399h1v1h-1zM330 398h1v2h-1zM331 399h1v1h-1zM332 397h1v3h-1zM333 399h1v1h-1zM334 397h1v3h-1zM335 398h1v2h-1zM336 399h2v1h-2zM338 398h1v2h-1zM339 399h1v1h-1zM340 398h1v2h-1zM341 399h3v1h-3zM344 397h1v3h-1zM345 399h3v1h-3zM348 398h1v2h-1zM349 399h1v1h-1zM350 397h1v3h-1zM351 399h1v1h-1zM352 398h2v2h-2zM354 399h1v1h-1zM355 398h1v2h-1zM356 399h1v1h-1zM357 397h1v3h-1zM358 398h2v2h-2zM360 397h1v3h-1zM361 399h1v1h-1zM362 398h1v2h-1zM363 397h1v3h-1zM364 398h1v2h-1zM365 399h2v1h-2zM367 398h2v2h-2zM369 399h1v1h-1zM370 398h1v2h-1zM371 399h1v1h-1zM372 397h1v3h-1zM373 398h1v2h-1zM374 397h1v3h-1zM375 398h2v2h-2zM377 399h1v1h-1zM378 398h1v2h-1zM379 397h1v3h-1zM380 399h2v1h-2zM383 399h1v1h-1zM384 397h1v3h-1zM385 399h3v1h-3zM388 397h2v3h-2zM390 398h1v2h-1zM391 399h1v1h-1zM392 398h2v2h-2zM394 397h1v3h-1zM395 398h1v2h-1zM396 399h1v1h-1zM397 398h2v2h-2zM399 399h1v1h-1zM400 398h4v2h-4zM404 396h1v4h-1zM405 397h1v3h-1zM406 399h1v1h-1zM407 398h7v2h-7zM414 399h3v1h-3zM417 398h1v2h-1zM418 399h1v1h-1zM419 398h1v2h-1zM421 397h2v3h-2zM423 398h1v2h-1zM424 399h1v1h-1zM425 397h1v3h-1zM426 398h4v2h-4zM430 397h1v3h-1zM432 398h2v2h-2zM434 397h3v3h-3zM437 399h1v1h-1zM438 398h1v2h-1zM439 399h2v1h-2zM441 398h2v2h-2zM443 397h1v3h-1zM444 398h2v2h-2zM446 399h1v1h-1zM447 398h1v2h-1zM448 399h1v1h-1zM449 398h4v2h-4zM453 399h1v1h-1zM454 397h2v3h-2zM456 399h1v1h-1zM457 397h1v3h-1zM458 399h1v1h-1zM459 398h1v2h-1zM460 397h1v3h-1zM461 398h1v2h-1zM462 399h1v1h-1zM463 398h1v2h-1zM464 397h1v3h-1zM466 399h1v1h-1zM467 398h2v2h-2zM469 397h2v3h-2zM471 398h1v2h-1zM472 399h1v1h-1zM473 397h1v3h-1zM474 398h1v2h-1zM475 399h1v1h-1zM476 398h1v2h-1zM477 397h1v3h-1zM478 398h1v2h-1zM479 399h1v1h-1zM480 396h1v4h-1zM481 398h3v2h-3zM484 399h1v1h-1zM485 398h2v2h-2zM487 399h1v1h-1zM488 397h1v3h-1zM489 396h1v4h-1zM490 398h2v2h-2zM492 397h1v3h-1zM493 399h1v1h-1zM494 397h1v3h-1zM495 399h1v1h-1zM496 397h1v3h-1zM497 398h2v2h-2zM499 397h2v3h-2zM501 398h2v2h-2zM503 397h2v3h-2zM505 398h1v2h-1zM506 399h1v1h-1zM507 398h1v2h-1zM508 397h1v3h-1zM509 396h1v4h-1zM510 399h1v1h-1zM511 397h1v3h-1zM512 398h1v2h-1zM513 399h1v1h-1zM514 397h1v3h-1zM515 399h3v1h-3zM518 398h2v2h-2zM520 397h1v3h-1zM521 398h1v2h-1zM522 396h1v4h-1zM523 399h1v1h-1zM524 398h3v2h-3zM527 397h1v3h-1zM528 396h1v4h-1zM529 398h2v2h-2zM531 397h1v3h-1zM532 398h1v2h-1zM533 397h2v3h-2zM535 399h1v1h-1zM536 397h1v3h-1zM537 399h2v1h-2zM539 398h2v2h-2zM541 399h1v1h-1zM542 398h1v2h-1zM543 399h1v1h-1zM544 398h1v2h-1zM545 397h1v3h-1zM546 398h1v2h-1zM547 399h1v1h-1zM548 397h1v3h-1zM549 398h1v2h-1zM550 399h1v1h-1zM551 398h1v2h-1zM552 399h1v1h-1zM553 398h1v2h-1zM554 399h2v1h-2zM556 398h3v2h-3zM559 397h1v3h-1zM560 399h1v1h-1zM561 398h3v2h-3zM564 399h2v1h-2zM566 398h4v2h-4zM570 399h1v1h-1zM571 398h2v2h-2zM573 399h1v1h-1zM574 398h1v2h-1zM575 399h1v1h-1zM576 398h1v2h-1zM577 397h1v3h-1zM578 399h2v1h-2zM580 398h2v2h-2zM582 396h1v4h-1zM583 399h2v1h-2zM585 398h2v2h-2zM587 399h1v1h-1zM588 398h2v2h-2zM591 398h3v2h-3zM594 399h1v1h-1zM595 398h2v2h-2zM597 399h1v1h-1zM598 398h2v2h-2zM600 399h2v1h-2zM602 398h4v2h-4zM606 399h1v1h-1zM607 398h4v2h-4zM611 399h3v1h-3zM614 398h1v2h-1zM615 399h1v1h-1zM616 398h1v2h-1zM618 398h2v2h-2z"/><path fill="#ff0" d="M80 93h1v2h-1zM140 93h1v2h-1zM200 93h1v2h-1zM260 93h1v2h-1zM320 93h1v2h-1zM380 93h1v2h-1zM440 93h1v2h-1zM500 93h1v2h-1zM560 93h1v2h-1zM620 93h1v2h-1z"/><path fill="#969696" d="M19 181h1v100h-1z"/></svg>
<svg width="629" height="400" viewBox="0 0 629 400" style="position:absolute;left:0;top:0;will-change:transform" font-family="Liberation Sans, sans-serif" font-size="14" text-anchor="middle" fill="#ff0" xml:space="preserve">
<text class="h" x="50 70 89 110 128 146" y="13">HROFFT</text>
<svg x="0" y="16" width="124" height="22"><text transform="translate(0,15) scale(0.82,1)" x="27.9 36.5 45 53.5 62.1 70.6 79.1 87.7 96.2 104.8 113.3 121.8 130.4 138.9 147.4 156">UT2510121100.png</text></svg>
<rect x="128" y="24" width="1" height="1"/><rect x="131" y="24" width="1" height="1"/>
<text transform="translate(0,36) scale(0.78,1)" x="163.5 172.4 181.4 190.4 199.4 208.3">meteor</text>
<text transform="translate(0,51) scale(0.88,1)" x="25.6 33.5 41.5 49.4 57.4 65.3 73.3 81.2 89.2 97.2 105.1 113.1 121 129">25.10.12 11:00</text>
<text transform="translate(0,51) scale(0.88,1)" x="160.8">0</text>
<rect x="148" y="50" width="5" height="1"/><rect x="154" y="50" width="5" height="1"/>
<text transform="translate(0,16) scale(0.76,1)" x="240.1 249.3 258.6 267.8 277 286.2 295.4 304.6 313.8 323 332.2 341.4 350.7 359.9 369.1 378.3 387.5 396.7 405.9 415.1 424.3 433.6 442.8 452 461.2 470.4 479.6 488.8 498 507.2 516.4 525.7">Observer           <tspan class="b">:</tspan> Masaki Kano</text>
<text transform="translate(0,28) scale(0.76,1)" x="240.1 249.3 258.6 267.8 277 286.2 295.4 304.6 313.8 323 332.2 341.4 350.7 359.9 369.1 378.3 387.5 396.7 405.9 415.1 424.3 433.6 442.8 452 461.2 470.4 479.6 488.8 498 507.2 516.4 525.7 534.9 544.1 553.3 562.5 571.7 580.9 590.1 599.3 608.6 617.8 627 636.2">Receiving Location <tspan class="b">:</tspan> Shibukawa, Gunma, Japan</text>
<text transform="translate(0,40) scale(0.76,1)" x="240.1 249.3 258.6 267.8 277 286.2 295.4 304.6 313.8 323 332.2 341.4 350.7 359.9 369.1 378.3 387.5 396.7 405.9 415.1 424.3 433.6 442.8 452 461.2 470.4 479.6 488.8 498 507.2 516.4 525.7 534.9 544.1 553.3 562.5 571.7 580.9 590.1 599.3 608.6 617.8 627 636.2 645.4 654.6 663.8 673 682.2 691.4 700.7 709.9 719.1 728.3">Receiver           <tspan class="b">:</tspan> RTL-SDR SDR# 43dB L15 103.2MHz CW</text>
<text transform="translate(0,52) scale(0.76,1)" x="240.1 249.3 258.6 267.8 277 286.2 295.4 304.6 313.8 323 332.2 341.4 350.7 359.9 369.1 378.3 387.5 396.7 405.9 415.1 424.3 433.6 442.8 452 461.2 470.4 479.6 488.8 498 507.2 516.4 525.7 534.9 544.1 553.3 562.5 571.7 580.9 590.1 599.3 608.6 617.8 627 636.2 645.4 654.6 663.8 673 682.2 691.4 700.7 709.9 719.1 728.3 737.5">Receiving Antenna  <tspan class="b">:</tspan> 3el Yagi(V) Az 330 for Vladivostok</text>
<text transform="translate(0,87) scale(0.76,1)" x="3.3 12.5 21.7">kHz</text>
<svg x="58" y="76" width="23" height="18"><text transform="translate(0,15) scale(0.88,1)" x="4 11.9 19.9 27.8">1101</text></svg>
<svg x="118" y="76" width="23" height="18"><text transform="translate(0,15) scale(0.88,1)" x="4 11.9 19.9 27.8">1102</text></svg>
<svg x="178" y="76" width="23" height="18"><text transform="translate(0,15) scale(0.88,1)" x="4 11.9 19.9 27.8">1103</text></svg>
<svg x="238" y="76" width="23" height="18"><text transform="translate(0,15) scale(0.88,1)" x="4 11.9 19.9 27.8">1104</text></svg>
<svg x="298" y="76" width="23" height="18"><text transform="translate(0,15) scale(0.88,1)" x="4 11.9 19.9 27.8">1105</text></svg>
<svg x="358" y="76" width="23" height="18"><text transform="translate(0,15) scale(0.88,1)" x="4 11.9 19.9 27.8">1106</text></svg>
<svg x="418" y="76" width="23" height="18"><text transform="translate(0,15) scale(0.88,1)" x="4 11.9 19.9 27.8">1107</text></svg>
<svg x="478" y="76" width="23" height="18"><text transform="translate(0,15) scale(0.88,1)" x="4 11.9 19.9 27.8">1108</text></svg>
<svg x="538" y="76" width="23" height="18"><text transform="translate(0,15) scale(0.88,1)" x="4 11.9 19.9 27.8">1109</text></svg>
<text transform="translate(0,91) scale(0.88,1)" x="683.5 691.5 699.4 707.4">1110</text>
<text transform="translate(0,135) scale(0.88,1)" font-size="12.6" x="3.4 9.1 14.8">1.1</text>
<text transform="translate(0,185) scale(0.88,1)" font-size="12.6" x="3.4 9.1 14.8">1.0</text>
<text transform="translate(0,235) scale(0.88,1)" font-size="12.6" x="3.4 9.1 14.8">0.9</text>
<text transform="translate(0,285) scale(0.88,1)" font-size="12.6" x="3.4 9.1 14.8">0.8</text>
<text transform="translate(0,335) scale(0.88,1)" font-size="12.6" x="3.4 9.1 14.8">0.7</text>
<text transform="translate(0,385) scale(0.88,1)" font-size="12.6" x="3.4 9.1 14.8">0.6</text>
</svg>
</body></html>
